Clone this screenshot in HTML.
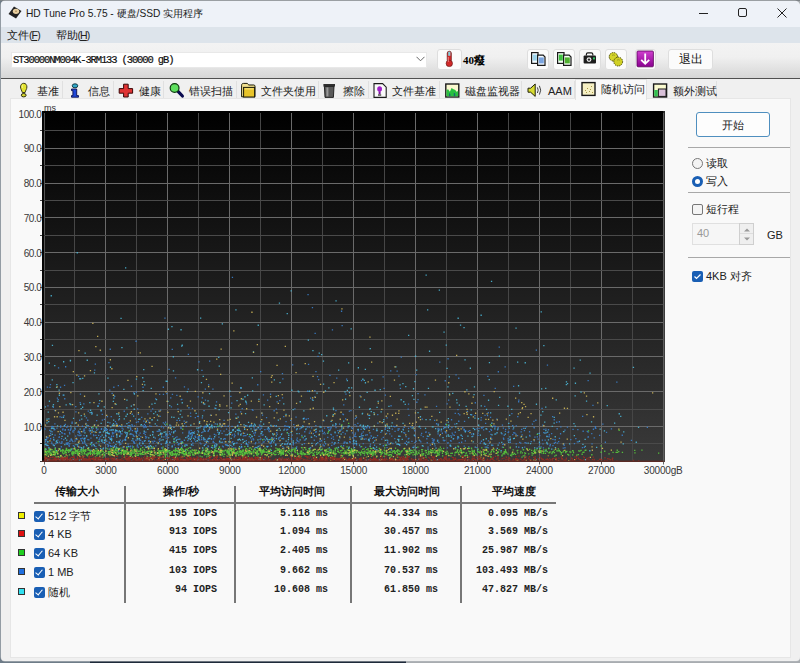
<!DOCTYPE html>
<html><head><meta charset="utf-8">
<style>
*{box-sizing:border-box}
html,body{margin:0;padding:0;width:800px;height:663px;overflow:hidden;background:linear-gradient(90deg,#6e7c88 0,#6e7c88 90px,#1e2a3a 90px,#1e2a3a 406px,#a8acb0 406px)}
body{position:relative;font-family:"Liberation Sans",sans-serif;color:#1a1a1a}
.a{position:absolute}
#win{position:absolute;left:1px;top:1px;width:799px;height:659.5px;background:#f0f0f0;border-radius:4px 5px 4px 4px;overflow:hidden;box-shadow:0 0 0 0.5px #b8bcc0}
#topstrip{position:absolute;left:0;top:0;width:800px;height:1px;background:#7c8286}
#title{position:absolute;left:0;top:0;width:100%;height:26px;background:#eef2f8}
#menu{position:absolute;left:0;top:26px;width:100%;height:16px;background:#dde4eb}
#tool{position:absolute;left:0;top:42px;width:100%;height:35px;background:linear-gradient(#f3f3f3,#f0f0f0 40%,#d6d6d6)}
#tline{position:absolute;left:0;top:77px;width:100%;height:1px;background:#505050}
.menu-t{position:absolute;top:28px;font-size:11px;color:#222}
.tbtn{position:absolute;top:49px;height:20.5px;background:#fbfbfb;border:1px solid #dedede;border-radius:3px}
.tab{position:absolute;top:81px;height:18px;background:#f0f0f0;font-size:11px;color:#333;border-right:1px solid #e0e0e0}
.tab span{position:absolute;top:3px}
#panel{position:absolute;left:10px;top:98px;width:781px;height:560px;background:#f9f9f9;border:1px solid #e6e6e6}
.yl{position:absolute;left:0;width:41.5px;text-align:right;font-size:10px;letter-spacing:-0.4px;color:#383838;line-height:12px}
.xl{position:absolute;top:464.5px;width:60px;text-align:center;font-size:10px;letter-spacing:-0.2px;color:#383838;line-height:12px}
.hdr{position:absolute;top:484px;font-size:11px;font-weight:bold;color:#111;text-align:center;line-height:14px}
.vsep{position:absolute;top:486px;width:2px;height:117px;background:#777}
.val{position:absolute;font-family:"Liberation Mono",monospace;font-weight:bold;font-size:10px;color:#222;text-align:right;white-space:pre;line-height:12px}
.lsq{position:absolute;left:18px;width:7px;height:7px;border:1px solid #333}
.cb{position:absolute;left:34px;width:11px;height:11px;background:#1a5fb4;border-radius:2px}
.cb:after{content:"";position:absolute;left:3px;top:1px;width:3px;height:6px;border:solid #fff;border-width:0 1.3px 1.3px 0;transform:rotate(40deg)}
.lbl{position:absolute;left:48px;font-size:11px;color:#222;line-height:14px}
.rp{position:absolute;font-size:11px;color:#222;line-height:14px}
.hsep{position:absolute;left:688px;width:102px;height:1px;background:#a8a8a8}
</style></head><body>
<div id="topstrip"></div>
<div id="win">
  <div id="title"></div>
  <div id="menu"></div>
  <div id="tool"></div>
  <div id="tline"></div>
</div>
<!-- title bar -->
<svg class="a" style="left:8px;top:6px" width="14" height="13" viewBox="0 0 14 13">
  <path d="M6 0.5 L13.5 5 L8 12.5 L0.5 8 Z" fill="#222"/>
  <ellipse cx="8" cy="5.3" rx="3.2" ry="2.6" fill="#e8cfa0"/>
  <circle cx="8" cy="5.3" r="0.8" fill="#a08050"/>
</svg>
<div class="a" style="left:26px;top:7px;font-size:10.2px;color:#1a1a1a;line-height:14px">HD Tune Pro 5.75 - 硬盘/SSD 实用程序</div>
<div class="a" style="left:699px;top:13px;width:9px;height:1px;background:#222"></div>
<div class="a" style="left:738px;top:8px;width:9px;height:9px;border:1px solid #222;border-radius:2px"></div>
<svg class="a" style="left:777px;top:8px" width="10" height="10" viewBox="0 0 10 10"><path d="M0.5 0.5L9.5 9.5M9.5 0.5L0.5 9.5" stroke="#222" stroke-width="1"/></svg>
<!-- menu -->
<div class="menu-t" style="left:7px">文件<span style="letter-spacing:-0.9px;font-size:10.5px">(<u>F</u>)</span></div>
<div class="menu-t" style="left:55.5px">帮助<span style="letter-spacing:-0.9px;font-size:10.5px">(<u>H</u>)</span></div>
<!-- toolbar -->
<div class="a" style="left:11px;top:52px;width:416px;height:16px;background:#fff;border:1px solid #e8e8e8"></div>
<div class="a" style="left:13px;top:54px;font-family:'Liberation Mono',monospace;font-size:10.5px;letter-spacing:-1.13px;color:#111;line-height:12px;-webkit-text-stroke:0.2px #111">ST30000NM004K-3RM133 (30000 gB)</div>
<svg class="a" style="left:416px;top:56px" width="9" height="6" viewBox="0 0 9 6"><path d="M0.5 0.8L4.5 4.8L8.5 0.8" stroke="#666" fill="none" stroke-width="1"/></svg>
<div class="tbtn" style="left:437px;width:25px"></div>

<div class="a" style="left:463px;top:54px;font-family:'Liberation Serif',serif;font-weight:bold;font-size:11px;color:#000;line-height:12px">40癈</div>
<div class="tbtn" style="left:527px;width:22px"></div>
<div class="tbtn" style="left:553px;width:22px"></div>
<div class="tbtn" style="left:579px;width:22px"></div>
<div class="tbtn" style="left:605px;width:22px"></div>
<div class="tbtn" style="left:635px;width:21px"></div>
<div class="tbtn" style="left:668px;width:45px;height:21px"></div>
<!-- toolbar icons -->
<svg class="a" style="left:0;top:0" width="800" height="78" viewBox="0 0 800 78">
  <defs>
    <linearGradient id="pg" x1="0" y1="0" x2="0" y2="1"><stop offset="0" stop-color="#d040d0"/><stop offset="1" stop-color="#8a0090"/></linearGradient>
  </defs>
  <rect x="531.6" y="52.6" width="6.4" height="10.8" fill="#f4fbff" stroke="#1a1a1a" stroke-width="1.2"/>
  <rect x="532.8" y="54.6" width="4" height="6" fill="#9cd4ec"/>
  <path d="M537.6 55.2h5.6l1.8 1.8v8.4h-7.4z" fill="#f4fbff" stroke="#1a1a1a" stroke-width="1.2"/>
  <rect x="538.8" y="57.4" width="5" height="6" fill="#7aa4e0"/>
  <rect x="557.6" y="52.6" width="6.4" height="10.8" fill="#f4fff4" stroke="#1a1a1a" stroke-width="1.2"/>
  <rect x="558.8" y="54.6" width="4" height="6" fill="#40c040"/>
  <path d="M563.6 55.2h5.6l1.8 1.8v8.4h-7.4z" fill="#f4fff4" stroke="#1a1a1a" stroke-width="1.2"/>
  <rect x="564.8" y="57.4" width="5" height="6" fill="#50b030"/>
  <!-- camera -->
  <rect x="583.6" y="55.4" width="12.4" height="8" rx="1" fill="#1e1e1e"/>
  <path d="M586.4 55.6v-1.4q0-1.4 1.4-1.4h3.6q1.4 0 1.4 1.4v1.4" stroke="#1e1e1e" stroke-width="1.2" fill="none"/>
  <circle cx="589" cy="59.6" r="2.4" fill="#f0f0f0"/><circle cx="589" cy="59.6" r="1.2" fill="#303030"/>
  <rect x="593" y="57.4" width="2" height="2" fill="#30c060"/>
  <!-- gold -->
  <circle cx="613.4" cy="56.8" r="4.2" fill="#d4d428" stroke="#4a4a08" stroke-width="1" stroke-dasharray="1.4 0.8"/>
  <circle cx="618.2" cy="61.6" r="4.4" fill="#d0d024" stroke="#4a4a08" stroke-width="1" stroke-dasharray="1.4 0.8"/>
  <path d="M612 55.4q1.4-1 2.8 0M617 60.2q1.4-1 2.8 0" stroke="#8a8a20" stroke-width="0.8" fill="none"/>
  <!-- purple -->
  <rect x="637" y="51" width="16.4" height="15.8" rx="1" fill="url(#pg)" stroke="#5a005a" stroke-width="0.8"/>
  <path d="M645.2 53.6v10M641.2 59.8l4 4l4-4" stroke="#fff" stroke-width="1.8" fill="none"/>
  <!-- thermometer -->
  <rect x="447.2" y="51.2" width="4.2" height="11" rx="2.1" fill="#d02828" stroke="#5a1010" stroke-width="0.6"/>
  <rect x="448.2" y="51.8" width="2.2" height="4" fill="#88d0dc"/>
  <circle cx="449.3" cy="63.4" r="3.2" fill="#d02828" stroke="#5a1010" stroke-width="0.6"/>
  <rect x="447.8" y="57" width="1" height="5" fill="#f08080"/>
</svg>
<div class="a" style="left:668px;top:52px;width:45px;text-align:center;font-size:11.5px;color:#111;line-height:14px">退出</div>

<!-- tabs -->
<div class="tab" style="left:12px;width:51px"></div>
<div class="tab" style="left:63px;width:51px"></div>
<div class="tab" style="left:114px;width:50px"></div>
<div class="tab" style="left:164px;width:73px"></div>
<div class="tab" style="left:237px;width:82px"></div>
<div class="tab" style="left:319px;width:50px"></div>
<div class="tab" style="left:369px;width:71px"></div>
<div class="tab" style="left:440px;width:82px"></div>
<div class="tab" style="left:522px;width:53px"></div>
<div class="tab" style="left:647px;width:70px"></div>
<div id="panel"></div>
<div class="a" style="left:575px;top:79px;width:72px;height:21px;background:#f9f9f9;border:1px solid #e2e2e2;border-bottom:none"></div>
<div class="rp" style="left:37px;top:84px">基准</div>
<div class="rp" style="left:88px;top:84px">信息</div>
<div class="rp" style="left:139px;top:84px">健康</div>
<div class="rp" style="left:189px;top:84px">错误扫描</div>
<div class="rp" style="left:261px;top:84px">文件夹使用</div>
<div class="rp" style="left:343px;top:84px">擦除</div>
<div class="rp" style="left:392px;top:84px">文件基准</div>
<div class="rp" style="left:465px;top:84px">磁盘监视器</div>
<div class="rp" style="left:548px;top:84px">AAM</div>
<div class="rp" style="left:601px;top:82px">随机访问</div>
<div class="rp" style="left:673px;top:84px">额外测试</div>
<!-- tab icons -->
<svg class="a" style="left:0;top:0" width="800" height="100" viewBox="0 0 800 100">
  <!-- bulb -->
  <path d="M23.7 83.3c2 0 3.2 1.6 3.2 3.6c0 2.2-1.4 3.6-1.8 5.6h-2.8c-0.4-2-1.8-3.4-1.8-5.6c0-2 1.2-3.6 3.2-3.6z" fill="#e4e430" stroke="#3a3a1a" stroke-width="1"/>
  <path d="M23 85c-0.8 0.6-1 1.8-0.6 3" stroke="#f8f8a0" stroke-width="1" fill="none"/>
  <ellipse cx="23.7" cy="95.2" rx="2.4" ry="1.7" fill="#d8d830" stroke="#2a2a10" stroke-width="1"/>
  <!-- info i -->
  <ellipse cx="75" cy="85.8" rx="2.8" ry="2" fill="#30a8c8" stroke="#10303a" stroke-width="0.9"/>
  <path d="M71.5 89h5.2v6.6h1.8v1.6h-7v-1.6h1.4v-5h-1.4z" fill="#2048d8" stroke="#0a1050" stroke-width="0.9"/>
  <!-- red cross -->
  <path d="M123.6 84.2h4.6v4.4h4.4v4.6h-4.4v3.8h-4.6v-3.8h-4.4v-4.6h4.4z" fill="#e03434" stroke="#3a0808" stroke-width="1"/>
  <!-- magnifier -->
  <path d="M177.8 91.2l4.6 4.8" stroke="#0a0a50" stroke-width="3.2" stroke-linecap="round"/>
  <circle cx="174.6" cy="88" r="4.4" fill="#5ee05e" stroke="#0e3a0e" stroke-width="1.2"/>
  <!-- folder -->
  <path d="M241.6 85.2c0-1.2 0.8-1.8 2-1.8h3.6l1.6 1.6h5c0.8 0 1.2 0.5 1.2 1.2v10.6h-13.4z" fill="#f0e090" stroke="#1a1a08" stroke-width="1"/>
  <rect x="243.6" y="87.4" width="11" height="9.6" fill="#e8c42a" stroke="#1a1a08" stroke-width="1"/>
  <rect x="244.6" y="88.4" width="9" height="1" fill="#f8e890"/>
  <!-- trash -->
  <path d="M323.4 84h11.6v2.6h-11.6z" fill="#303030"/>
  <path d="M324.4 86.4h9.6l-0.6 11h-8.4z" fill="#5a5a5a" stroke="#1a1a1a" stroke-width="0.9"/>
  <rect x="326.4" y="87.4" width="2" height="9" fill="#9a9a9a"/>
  <!-- file bench -->
  <path d="M374 83.6h8.6l3.6 3.6v10.2h-12.2z" fill="#fafafa" stroke="#1a1a1a" stroke-width="1.1"/>
  <ellipse cx="379.6" cy="89" rx="2.4" ry="2.8" fill="#a020c8"/>
  <rect x="378.6" y="91.4" width="2" height="2.6" fill="#7a10a0"/>
  <rect x="378" y="94.4" width="3.2" height="1.2" fill="#222"/>
  <!-- disk monitor -->
  <rect x="445.8" y="84" width="13" height="13" fill="#fbf8d0" stroke="#1a1a1a" stroke-width="1.4"/>
  <path d="M446.5 96.3v-6.2l1.6-0.8 1.8 2.4 1.6-3.6 2 1.2 1.8 0.8 1.2 1.6 1.7-0.6v5.2z" fill="#28c040"/>
  <path d="M449 96.3v-3.2l1.4 1v2.2zM453.8 96.3v-3.6l1.4 0.8v2.8z" fill="#1a6a70"/>
  <!-- speaker -->
  <path d="M528 88.2h2.6l4.6-4.2v12.4l-4.6-4.2h-2.6z" fill="#d8dc30" stroke="#20200a" stroke-width="1"/>
  <path d="M537.4 87.4q1.6 2.8 0 5.6M539.4 85.8q2.6 4.4 0 8.8" stroke="#303030" stroke-width="0.9" fill="none"/>
  <!-- random access -->
  <rect x="582" y="82.6" width="13" height="12.8" fill="#f6f0c4" stroke="#1a1a1a" stroke-width="1.4"/>
  <g fill="#a89848"><rect x="585" y="90" width="1" height="1"/><rect x="587" y="88" width="1" height="1"/><rect x="589" y="91" width="1" height="1"/><rect x="591" y="86" width="1" height="1"/><rect x="586" y="92" width="1" height="1"/><rect x="590" y="89" width="1" height="1"/><rect x="592" y="92" width="1" height="1"/></g>
  <!-- extra tests -->
  <rect x="653.6" y="84" width="13" height="13" fill="#fafad0" stroke="#1a1a1a" stroke-width="1.4"/>
  <rect x="654.3" y="90" width="3.5" height="6.3" fill="#30c050"/>
  <rect x="658.4" y="89" width="7.6" height="7.4" fill="#d8c0d8" stroke="#1a1a1a" stroke-width="1"/>
</svg>
<!-- chart -->
<div class="a" style="left:44px;top:103px;font-size:9px;color:#333;line-height:10px">ms</div>
<div class="yl" style="top:421.5px">10.0</div>
<div class="yl" style="top:386.8px">20.0</div>
<div class="yl" style="top:352.0px">30.0</div>
<div class="yl" style="top:317.2px">40.0</div>
<div class="yl" style="top:282.4px">50.0</div>
<div class="yl" style="top:247.7px">60.0</div>
<div class="yl" style="top:212.9px">70.0</div>
<div class="yl" style="top:178.1px">80.0</div>
<div class="yl" style="top:143.4px">90.0</div>
<div class="yl" style="top:108.6px">100.0</div>
<svg class="a" style="left:0;top:0" width="800" height="663">
  <defs><linearGradient id="bg" x1="0" y1="0" x2="0" y2="1"><stop offset="0" stop-color="#000"/><stop offset="1" stop-color="#3a3a3a"/></linearGradient></defs>
  <rect x="42" y="111" width="623" height="351" fill="url(#bg)"/>
<rect x="44" y="113" width="1" height="348.30" fill="#6a6a6a"/>
<rect x="74" y="113" width="1" height="348.30" fill="#464646"/>
<rect x="105" y="113" width="1" height="348.30" fill="#6a6a6a"/>
<rect x="136" y="113" width="1" height="348.30" fill="#464646"/>
<rect x="167" y="113" width="1" height="348.30" fill="#6a6a6a"/>
<rect x="198" y="113" width="1" height="348.30" fill="#464646"/>
<rect x="229" y="113" width="1" height="348.30" fill="#6a6a6a"/>
<rect x="260" y="113" width="1" height="348.30" fill="#464646"/>
<rect x="291" y="113" width="1" height="348.30" fill="#6a6a6a"/>
<rect x="322" y="113" width="1" height="348.30" fill="#464646"/>
<rect x="353" y="113" width="1" height="348.30" fill="#6a6a6a"/>
<rect x="384" y="113" width="1" height="348.30" fill="#464646"/>
<rect x="415" y="113" width="1" height="348.30" fill="#6a6a6a"/>
<rect x="446" y="113" width="1" height="348.30" fill="#464646"/>
<rect x="477" y="113" width="1" height="348.30" fill="#6a6a6a"/>
<rect x="508" y="113" width="1" height="348.30" fill="#464646"/>
<rect x="539" y="113" width="1" height="348.30" fill="#6a6a6a"/>
<rect x="570" y="113" width="1" height="348.30" fill="#464646"/>
<rect x="601" y="113" width="1" height="348.30" fill="#6a6a6a"/>
<rect x="632" y="113" width="1" height="348.30" fill="#464646"/>
<rect x="663" y="113" width="1" height="348.30" fill="#6a6a6a"/>
<rect x="44.00" y="461" width="619.20" height="1" fill="#6a6a6a"/>
<rect x="40" y="461" width="3" height="1" fill="#444"/>
<rect x="44.00" y="443" width="619.20" height="1" fill="#4a4a4a"/>
<rect x="40" y="443" width="3" height="1" fill="#444"/>
<rect x="44.00" y="426" width="619.20" height="1" fill="#6a6a6a"/>
<rect x="40" y="426" width="3" height="1" fill="#444"/>
<rect x="44.00" y="409" width="619.20" height="1" fill="#4a4a4a"/>
<rect x="40" y="409" width="3" height="1" fill="#444"/>
<rect x="44.00" y="391" width="619.20" height="1" fill="#6a6a6a"/>
<rect x="40" y="391" width="3" height="1" fill="#444"/>
<rect x="44.00" y="374" width="619.20" height="1" fill="#4a4a4a"/>
<rect x="40" y="374" width="3" height="1" fill="#444"/>
<rect x="44.00" y="356" width="619.20" height="1" fill="#6a6a6a"/>
<rect x="40" y="356" width="3" height="1" fill="#444"/>
<rect x="44.00" y="339" width="619.20" height="1" fill="#4a4a4a"/>
<rect x="40" y="339" width="3" height="1" fill="#444"/>
<rect x="44.00" y="322" width="619.20" height="1" fill="#6a6a6a"/>
<rect x="40" y="322" width="3" height="1" fill="#444"/>
<rect x="44.00" y="304" width="619.20" height="1" fill="#4a4a4a"/>
<rect x="40" y="304" width="3" height="1" fill="#444"/>
<rect x="44.00" y="287" width="619.20" height="1" fill="#6a6a6a"/>
<rect x="40" y="287" width="3" height="1" fill="#444"/>
<rect x="44.00" y="270" width="619.20" height="1" fill="#4a4a4a"/>
<rect x="40" y="270" width="3" height="1" fill="#444"/>
<rect x="44.00" y="252" width="619.20" height="1" fill="#6a6a6a"/>
<rect x="40" y="252" width="3" height="1" fill="#444"/>
<rect x="44.00" y="235" width="619.20" height="1" fill="#4a4a4a"/>
<rect x="40" y="235" width="3" height="1" fill="#444"/>
<rect x="44.00" y="217" width="619.20" height="1" fill="#6a6a6a"/>
<rect x="40" y="217" width="3" height="1" fill="#444"/>
<rect x="44.00" y="200" width="619.20" height="1" fill="#4a4a4a"/>
<rect x="40" y="200" width="3" height="1" fill="#444"/>
<rect x="44.00" y="183" width="619.20" height="1" fill="#6a6a6a"/>
<rect x="40" y="183" width="3" height="1" fill="#444"/>
<rect x="44.00" y="165" width="619.20" height="1" fill="#4a4a4a"/>
<rect x="40" y="165" width="3" height="1" fill="#444"/>
<rect x="44.00" y="148" width="619.20" height="1" fill="#6a6a6a"/>
<rect x="40" y="148" width="3" height="1" fill="#444"/>
<rect x="44.00" y="130" width="619.20" height="1" fill="#4a4a4a"/>
<rect x="40" y="130" width="3" height="1" fill="#444"/>
<path fill="#3a80cc" fill-opacity="0.9" d="M243.9 432.7h1.3v1.3h-1.3zM88.2 439.2h1.3v1.3h-1.3zM79.3 446.6h1.3v1.3h-1.3zM311.9 445.4h1.3v1.3h-1.3zM120.0 433.3h1.3v1.3h-1.3zM72.2 440.9h1.3v1.3h-1.3zM132.7 440.5h1.3v1.3h-1.3zM548.7 434.3h1.3v1.3h-1.3zM439.0 435.1h1.3v1.3h-1.3zM82.2 442.8h1.3v1.3h-1.3zM464.7 440.3h1.3v1.3h-1.3zM405.9 440.7h1.3v1.3h-1.3zM194.5 435.6h1.3v1.3h-1.3zM116.5 430.3h1.3v1.3h-1.3zM137.5 446.6h1.3v1.3h-1.3zM237.6 434.0h1.3v1.3h-1.3zM402.4 428.5h1.3v1.3h-1.3zM454.6 431.6h1.3v1.3h-1.3zM552.3 438.7h1.3v1.3h-1.3zM457.4 437.0h1.3v1.3h-1.3zM147.4 446.1h1.3v1.3h-1.3zM519.0 441.8h1.3v1.3h-1.3zM93.2 435.0h1.3v1.3h-1.3zM300.5 427.5h1.3v1.3h-1.3zM152.5 442.2h1.3v1.3h-1.3zM343.6 441.5h1.3v1.3h-1.3zM45.9 439.1h1.3v1.3h-1.3zM470.9 433.5h1.3v1.3h-1.3zM462.1 427.1h1.3v1.3h-1.3zM537.4 438.4h1.3v1.3h-1.3zM107.5 446.0h1.3v1.3h-1.3zM85.1 443.8h1.3v1.3h-1.3zM253.9 447.4h1.3v1.3h-1.3zM137.0 439.2h1.3v1.3h-1.3zM59.1 433.6h1.3v1.3h-1.3zM135.3 439.6h1.3v1.3h-1.3zM268.8 428.3h1.3v1.3h-1.3zM342.9 445.1h1.3v1.3h-1.3zM255.5 428.7h1.3v1.3h-1.3zM143.3 425.9h1.3v1.3h-1.3zM370.4 435.2h1.3v1.3h-1.3zM60.1 425.3h1.3v1.3h-1.3zM205.0 443.7h1.3v1.3h-1.3zM525.7 442.4h1.3v1.3h-1.3zM183.7 439.4h1.3v1.3h-1.3zM61.3 441.1h1.3v1.3h-1.3zM203.8 425.8h1.3v1.3h-1.3zM269.1 442.3h1.3v1.3h-1.3zM165.2 433.3h1.3v1.3h-1.3zM340.2 429.4h1.3v1.3h-1.3zM95.8 426.9h1.3v1.3h-1.3zM339.3 429.6h1.3v1.3h-1.3zM249.2 425.5h1.3v1.3h-1.3zM288.5 426.0h1.3v1.3h-1.3zM492.1 444.6h1.3v1.3h-1.3zM136.9 429.2h1.3v1.3h-1.3zM133.9 425.3h1.3v1.3h-1.3zM450.3 435.0h1.3v1.3h-1.3zM124.5 425.5h1.3v1.3h-1.3zM445.6 426.3h1.3v1.3h-1.3zM554.9 441.7h1.3v1.3h-1.3zM224.8 434.2h1.3v1.3h-1.3zM203.9 444.5h1.3v1.3h-1.3zM327.0 427.0h1.3v1.3h-1.3zM354.0 435.6h1.3v1.3h-1.3zM54.9 443.3h1.3v1.3h-1.3zM45.8 443.5h1.3v1.3h-1.3zM336.5 434.9h1.3v1.3h-1.3zM245.2 434.9h1.3v1.3h-1.3zM529.0 434.8h1.3v1.3h-1.3zM197.2 430.0h1.3v1.3h-1.3zM357.7 430.3h1.3v1.3h-1.3zM422.6 435.9h1.3v1.3h-1.3zM472.3 435.4h1.3v1.3h-1.3zM563.5 444.7h1.3v1.3h-1.3zM317.1 442.0h1.3v1.3h-1.3zM88.6 429.7h1.3v1.3h-1.3zM131.9 425.6h1.3v1.3h-1.3zM179.3 438.4h1.3v1.3h-1.3zM558.8 437.7h1.3v1.3h-1.3zM362.6 443.0h1.3v1.3h-1.3zM240.6 447.0h1.3v1.3h-1.3zM386.4 447.0h1.3v1.3h-1.3zM248.6 435.9h1.3v1.3h-1.3zM83.2 429.6h1.3v1.3h-1.3zM207.8 429.8h1.3v1.3h-1.3zM210.8 437.9h1.3v1.3h-1.3zM203.5 426.7h1.3v1.3h-1.3zM98.7 431.9h1.3v1.3h-1.3zM306.7 426.2h1.3v1.3h-1.3zM95.2 445.9h1.3v1.3h-1.3zM253.4 426.5h1.3v1.3h-1.3zM209.2 435.5h1.3v1.3h-1.3zM191.0 443.8h1.3v1.3h-1.3zM74.5 440.4h1.3v1.3h-1.3zM232.2 440.9h1.3v1.3h-1.3zM353.0 439.6h1.3v1.3h-1.3zM54.6 447.1h1.3v1.3h-1.3zM160.7 426.3h1.3v1.3h-1.3zM109.2 437.7h1.3v1.3h-1.3zM286.7 431.9h1.3v1.3h-1.3zM437.1 439.6h1.3v1.3h-1.3zM77.0 445.8h1.3v1.3h-1.3zM502.1 443.7h1.3v1.3h-1.3zM95.7 427.8h1.3v1.3h-1.3zM458.6 442.0h1.3v1.3h-1.3zM224.8 443.9h1.3v1.3h-1.3zM319.4 425.7h1.3v1.3h-1.3zM235.0 447.4h1.3v1.3h-1.3zM279.7 436.1h1.3v1.3h-1.3zM167.8 447.3h1.3v1.3h-1.3zM206.9 438.4h1.3v1.3h-1.3zM69.2 440.6h1.3v1.3h-1.3zM187.5 435.5h1.3v1.3h-1.3zM284.5 425.2h1.3v1.3h-1.3zM135.9 432.9h1.3v1.3h-1.3zM70.5 427.3h1.3v1.3h-1.3zM546.3 435.6h1.3v1.3h-1.3zM185.7 444.4h1.3v1.3h-1.3zM266.7 428.5h1.3v1.3h-1.3zM389.2 433.3h1.3v1.3h-1.3zM464.8 447.4h1.3v1.3h-1.3zM354.8 432.5h1.3v1.3h-1.3zM84.2 441.7h1.3v1.3h-1.3zM89.4 431.0h1.3v1.3h-1.3zM170.4 425.4h1.3v1.3h-1.3zM349.2 436.6h1.3v1.3h-1.3zM91.3 441.7h1.3v1.3h-1.3zM503.6 434.6h1.3v1.3h-1.3zM51.1 441.4h1.3v1.3h-1.3zM461.7 435.8h1.3v1.3h-1.3zM331.1 444.8h1.3v1.3h-1.3zM54.2 428.9h1.3v1.3h-1.3zM209.7 426.1h1.3v1.3h-1.3zM173.8 444.2h1.3v1.3h-1.3zM125.5 435.9h1.3v1.3h-1.3zM186.6 436.5h1.3v1.3h-1.3zM58.7 436.3h1.3v1.3h-1.3zM322.5 444.3h1.3v1.3h-1.3zM256.3 428.4h1.3v1.3h-1.3zM44.4 428.5h1.3v1.3h-1.3zM117.7 431.3h1.3v1.3h-1.3zM273.8 424.9h1.3v1.3h-1.3zM408.2 437.8h1.3v1.3h-1.3zM213.7 445.1h1.3v1.3h-1.3zM560.2 426.3h1.3v1.3h-1.3zM197.7 435.9h1.3v1.3h-1.3zM160.9 425.8h1.3v1.3h-1.3zM488.9 430.9h1.3v1.3h-1.3zM322.5 432.9h1.3v1.3h-1.3zM220.6 426.5h1.3v1.3h-1.3zM122.2 439.7h1.3v1.3h-1.3zM227.7 425.4h1.3v1.3h-1.3zM204.4 440.6h1.3v1.3h-1.3zM388.4 443.7h1.3v1.3h-1.3zM143.4 427.0h1.3v1.3h-1.3zM351.1 427.0h1.3v1.3h-1.3zM129.8 445.4h1.3v1.3h-1.3zM255.1 442.0h1.3v1.3h-1.3zM203.3 427.4h1.3v1.3h-1.3zM507.5 438.1h1.3v1.3h-1.3zM367.9 439.8h1.3v1.3h-1.3zM81.8 425.6h1.3v1.3h-1.3zM121.3 433.2h1.3v1.3h-1.3zM577.6 441.3h1.3v1.3h-1.3zM197.2 437.4h1.3v1.3h-1.3zM583.8 446.7h1.3v1.3h-1.3zM336.4 447.4h1.3v1.3h-1.3zM110.9 435.6h1.3v1.3h-1.3zM516.9 435.0h1.3v1.3h-1.3zM67.8 442.2h1.3v1.3h-1.3zM231.5 441.7h1.3v1.3h-1.3zM112.8 435.6h1.3v1.3h-1.3zM404.3 442.4h1.3v1.3h-1.3zM415.5 440.6h1.3v1.3h-1.3zM337.7 441.9h1.3v1.3h-1.3zM233.7 436.2h1.3v1.3h-1.3zM461.0 441.6h1.3v1.3h-1.3zM183.8 439.8h1.3v1.3h-1.3zM303.8 443.0h1.3v1.3h-1.3zM356.0 425.5h1.3v1.3h-1.3zM236.4 442.2h1.3v1.3h-1.3zM180.5 440.8h1.3v1.3h-1.3zM159.3 438.0h1.3v1.3h-1.3zM134.0 442.6h1.3v1.3h-1.3zM75.4 438.5h1.3v1.3h-1.3zM158.2 430.6h1.3v1.3h-1.3zM63.1 438.9h1.3v1.3h-1.3zM274.9 443.6h1.3v1.3h-1.3zM45.1 439.5h1.3v1.3h-1.3zM264.2 428.9h1.3v1.3h-1.3zM311.1 436.7h1.3v1.3h-1.3zM162.9 427.2h1.3v1.3h-1.3zM62.1 429.1h1.3v1.3h-1.3zM518.1 446.6h1.3v1.3h-1.3zM82.1 441.6h1.3v1.3h-1.3zM253.3 425.8h1.3v1.3h-1.3zM425.4 431.2h1.3v1.3h-1.3zM239.3 447.4h1.3v1.3h-1.3zM58.4 436.7h1.3v1.3h-1.3zM282.7 437.7h1.3v1.3h-1.3zM156.6 430.7h1.3v1.3h-1.3zM419.4 440.2h1.3v1.3h-1.3zM267.4 445.7h1.3v1.3h-1.3zM165.5 441.8h1.3v1.3h-1.3zM83.4 434.9h1.3v1.3h-1.3zM207.4 445.3h1.3v1.3h-1.3zM352.0 437.3h1.3v1.3h-1.3zM188.4 433.4h1.3v1.3h-1.3zM118.4 440.8h1.3v1.3h-1.3zM394.4 430.8h1.3v1.3h-1.3zM166.7 441.9h1.3v1.3h-1.3zM138.3 434.4h1.3v1.3h-1.3zM245.4 425.0h1.3v1.3h-1.3zM357.5 429.2h1.3v1.3h-1.3zM106.7 428.9h1.3v1.3h-1.3zM68.3 444.7h1.3v1.3h-1.3zM160.7 434.3h1.3v1.3h-1.3zM204.3 426.1h1.3v1.3h-1.3zM108.8 433.4h1.3v1.3h-1.3zM178.1 444.2h1.3v1.3h-1.3zM169.7 433.9h1.3v1.3h-1.3zM446.8 447.2h1.3v1.3h-1.3zM246.0 443.3h1.3v1.3h-1.3zM236.7 429.5h1.3v1.3h-1.3zM382.7 445.1h1.3v1.3h-1.3zM288.1 433.0h1.3v1.3h-1.3zM99.8 431.7h1.3v1.3h-1.3zM297.1 440.5h1.3v1.3h-1.3zM394.1 438.0h1.3v1.3h-1.3zM268.6 431.0h1.3v1.3h-1.3zM169.5 427.1h1.3v1.3h-1.3zM328.7 447.1h1.3v1.3h-1.3zM384.9 426.9h1.3v1.3h-1.3zM98.5 439.1h1.3v1.3h-1.3zM355.7 441.0h1.3v1.3h-1.3zM110.7 429.2h1.3v1.3h-1.3zM121.8 425.4h1.3v1.3h-1.3zM342.3 426.5h1.3v1.3h-1.3zM142.6 442.4h1.3v1.3h-1.3zM556.8 442.5h1.3v1.3h-1.3zM290.9 438.8h1.3v1.3h-1.3zM119.5 431.1h1.3v1.3h-1.3zM599.0 434.7h1.3v1.3h-1.3zM512.4 428.5h1.3v1.3h-1.3zM116.2 435.0h1.3v1.3h-1.3zM431.6 437.9h1.3v1.3h-1.3zM404.1 432.5h1.3v1.3h-1.3zM320.0 446.9h1.3v1.3h-1.3zM426.6 442.1h1.3v1.3h-1.3zM327.1 436.7h1.3v1.3h-1.3zM109.7 437.7h1.3v1.3h-1.3zM100.1 435.9h1.3v1.3h-1.3zM68.6 445.6h1.3v1.3h-1.3zM360.1 436.0h1.3v1.3h-1.3zM127.7 424.9h1.3v1.3h-1.3zM163.3 436.3h1.3v1.3h-1.3zM145.6 426.4h1.3v1.3h-1.3zM83.9 430.3h1.3v1.3h-1.3zM141.7 441.2h1.3v1.3h-1.3zM548.4 436.1h1.3v1.3h-1.3zM206.1 440.2h1.3v1.3h-1.3zM66.2 443.8h1.3v1.3h-1.3zM529.3 435.4h1.3v1.3h-1.3zM437.4 427.7h1.3v1.3h-1.3zM387.1 427.5h1.3v1.3h-1.3zM108.1 433.2h1.3v1.3h-1.3zM287.5 441.5h1.3v1.3h-1.3zM266.4 437.4h1.3v1.3h-1.3zM152.8 446.3h1.3v1.3h-1.3zM551.0 433.0h1.3v1.3h-1.3zM454.3 447.4h1.3v1.3h-1.3zM64.3 433.5h1.3v1.3h-1.3zM311.0 427.2h1.3v1.3h-1.3zM125.1 432.7h1.3v1.3h-1.3zM57.2 439.4h1.3v1.3h-1.3zM109.2 442.4h1.3v1.3h-1.3zM404.7 442.8h1.3v1.3h-1.3zM429.7 444.4h1.3v1.3h-1.3zM135.8 433.0h1.3v1.3h-1.3zM292.2 447.2h1.3v1.3h-1.3zM442.7 439.5h1.3v1.3h-1.3zM443.1 426.3h1.3v1.3h-1.3zM497.5 427.0h1.3v1.3h-1.3zM70.6 438.3h1.3v1.3h-1.3zM190.5 429.8h1.3v1.3h-1.3zM51.0 426.2h1.3v1.3h-1.3zM131.4 433.7h1.3v1.3h-1.3zM357.3 429.1h1.3v1.3h-1.3zM151.5 440.7h1.3v1.3h-1.3zM73.4 429.7h1.3v1.3h-1.3zM486.3 428.4h1.3v1.3h-1.3zM504.8 430.7h1.3v1.3h-1.3zM323.5 445.1h1.3v1.3h-1.3zM187.2 439.9h1.3v1.3h-1.3zM208.0 437.6h1.3v1.3h-1.3zM207.6 425.6h1.3v1.3h-1.3zM177.7 447.1h1.3v1.3h-1.3zM204.6 430.6h1.3v1.3h-1.3zM245.7 440.0h1.3v1.3h-1.3zM191.4 433.2h1.3v1.3h-1.3zM233.9 433.4h1.3v1.3h-1.3zM91.5 444.2h1.3v1.3h-1.3zM60.0 426.4h1.3v1.3h-1.3zM256.9 446.8h1.3v1.3h-1.3zM69.1 433.1h1.3v1.3h-1.3zM84.1 439.2h1.3v1.3h-1.3zM595.2 427.8h1.3v1.3h-1.3zM109.7 444.9h1.3v1.3h-1.3zM64.7 429.1h1.3v1.3h-1.3zM434.4 445.2h1.3v1.3h-1.3zM103.9 442.8h1.3v1.3h-1.3zM241.0 447.0h1.3v1.3h-1.3zM202.3 431.3h1.3v1.3h-1.3zM271.2 425.7h1.3v1.3h-1.3zM426.2 438.1h1.3v1.3h-1.3zM313.6 439.6h1.3v1.3h-1.3zM479.7 442.5h1.3v1.3h-1.3zM577.2 428.9h1.3v1.3h-1.3zM148.8 442.9h1.3v1.3h-1.3zM46.1 436.3h1.3v1.3h-1.3zM536.7 436.3h1.3v1.3h-1.3zM258.3 441.5h1.3v1.3h-1.3zM176.3 436.2h1.3v1.3h-1.3zM111.4 445.6h1.3v1.3h-1.3zM263.5 438.5h1.3v1.3h-1.3zM594.7 427.4h1.3v1.3h-1.3zM58.9 441.5h1.3v1.3h-1.3zM188.0 435.4h1.3v1.3h-1.3zM443.5 440.1h1.3v1.3h-1.3zM139.5 432.5h1.3v1.3h-1.3zM502.8 437.5h1.3v1.3h-1.3zM121.4 427.4h1.3v1.3h-1.3zM190.7 440.6h1.3v1.3h-1.3zM139.1 441.8h1.3v1.3h-1.3zM245.6 443.8h1.3v1.3h-1.3zM246.5 425.4h1.3v1.3h-1.3zM494.6 425.7h1.3v1.3h-1.3zM106.3 425.2h1.3v1.3h-1.3zM312.7 433.0h1.3v1.3h-1.3zM109.5 438.7h1.3v1.3h-1.3zM64.4 429.6h1.3v1.3h-1.3zM472.7 433.1h1.3v1.3h-1.3zM330.2 433.8h1.3v1.3h-1.3zM293.9 426.9h1.3v1.3h-1.3zM309.6 430.5h1.3v1.3h-1.3zM304.1 431.1h1.3v1.3h-1.3zM324.4 433.2h1.3v1.3h-1.3zM103.9 429.8h1.3v1.3h-1.3zM198.2 437.1h1.3v1.3h-1.3zM428.2 432.2h1.3v1.3h-1.3zM284.0 425.4h1.3v1.3h-1.3zM67.0 443.8h1.3v1.3h-1.3zM364.9 434.5h1.3v1.3h-1.3zM360.5 428.7h1.3v1.3h-1.3zM366.4 426.0h1.3v1.3h-1.3zM173.4 438.6h1.3v1.3h-1.3zM515.6 425.2h1.3v1.3h-1.3zM263.5 441.2h1.3v1.3h-1.3zM290.8 438.0h1.3v1.3h-1.3zM303.8 439.5h1.3v1.3h-1.3zM207.5 430.7h1.3v1.3h-1.3zM178.9 438.6h1.3v1.3h-1.3zM174.6 429.9h1.3v1.3h-1.3zM333.9 442.3h1.3v1.3h-1.3zM225.6 444.6h1.3v1.3h-1.3zM570.1 438.9h1.3v1.3h-1.3zM200.3 443.2h1.3v1.3h-1.3zM45.0 441.1h1.3v1.3h-1.3zM195.0 436.6h1.3v1.3h-1.3zM308.7 432.5h1.3v1.3h-1.3zM572.4 428.7h1.3v1.3h-1.3zM130.3 433.1h1.3v1.3h-1.3zM52.6 425.9h1.3v1.3h-1.3zM449.5 445.1h1.3v1.3h-1.3zM131.7 429.9h1.3v1.3h-1.3zM257.9 427.0h1.3v1.3h-1.3zM533.6 427.3h1.3v1.3h-1.3zM165.6 435.4h1.3v1.3h-1.3zM502.7 427.5h1.3v1.3h-1.3zM387.0 442.1h1.3v1.3h-1.3zM129.6 446.1h1.3v1.3h-1.3zM332.6 436.3h1.3v1.3h-1.3zM351.8 427.9h1.3v1.3h-1.3zM47.4 436.9h1.3v1.3h-1.3zM391.7 428.4h1.3v1.3h-1.3zM275.5 425.7h1.3v1.3h-1.3zM90.0 433.1h1.3v1.3h-1.3zM61.0 432.0h1.3v1.3h-1.3zM64.3 433.3h1.3v1.3h-1.3zM253.0 439.2h1.3v1.3h-1.3zM337.2 430.0h1.3v1.3h-1.3zM173.8 437.9h1.3v1.3h-1.3zM224.7 438.3h1.3v1.3h-1.3zM355.3 436.0h1.3v1.3h-1.3zM533.7 440.3h1.3v1.3h-1.3zM228.6 433.1h1.3v1.3h-1.3zM528.9 431.1h1.3v1.3h-1.3zM74.1 447.3h1.3v1.3h-1.3zM161.0 433.7h1.3v1.3h-1.3zM425.2 431.7h1.3v1.3h-1.3zM174.9 437.1h1.3v1.3h-1.3zM515.6 443.3h1.3v1.3h-1.3zM66.2 426.8h1.3v1.3h-1.3zM449.4 428.8h1.3v1.3h-1.3zM203.1 437.9h1.3v1.3h-1.3zM240.6 432.9h1.3v1.3h-1.3zM621.6 434.6h1.3v1.3h-1.3zM67.7 429.1h1.3v1.3h-1.3zM319.8 438.7h1.3v1.3h-1.3zM298.7 432.9h1.3v1.3h-1.3zM174.8 447.1h1.3v1.3h-1.3zM46.3 444.7h1.3v1.3h-1.3zM581.8 447.0h1.3v1.3h-1.3zM488.8 430.9h1.3v1.3h-1.3zM159.4 429.9h1.3v1.3h-1.3zM495.2 433.2h1.3v1.3h-1.3zM482.5 426.4h1.3v1.3h-1.3zM487.4 447.1h1.3v1.3h-1.3zM92.7 431.0h1.3v1.3h-1.3zM146.1 436.4h1.3v1.3h-1.3zM80.4 434.4h1.3v1.3h-1.3zM315.0 444.2h1.3v1.3h-1.3zM537.1 432.9h1.3v1.3h-1.3zM433.3 438.7h1.3v1.3h-1.3zM224.4 425.4h1.3v1.3h-1.3zM248.9 425.3h1.3v1.3h-1.3zM234.4 427.4h1.3v1.3h-1.3zM276.6 433.8h1.3v1.3h-1.3zM218.8 441.5h1.3v1.3h-1.3zM305.0 429.0h1.3v1.3h-1.3zM592.8 428.6h1.3v1.3h-1.3zM397.5 428.2h1.3v1.3h-1.3zM96.0 429.4h1.3v1.3h-1.3zM167.5 426.4h1.3v1.3h-1.3zM188.3 432.1h1.3v1.3h-1.3zM331.5 441.7h1.3v1.3h-1.3zM328.0 429.2h1.3v1.3h-1.3zM521.5 434.3h1.3v1.3h-1.3zM366.5 434.1h1.3v1.3h-1.3zM160.5 443.4h1.3v1.3h-1.3zM477.4 434.7h1.3v1.3h-1.3zM292.6 444.1h1.3v1.3h-1.3zM71.0 439.0h1.3v1.3h-1.3zM109.1 429.6h1.3v1.3h-1.3zM140.0 439.6h1.3v1.3h-1.3zM365.0 446.7h1.3v1.3h-1.3zM344.5 441.5h1.3v1.3h-1.3zM525.8 426.0h1.3v1.3h-1.3zM66.8 443.4h1.3v1.3h-1.3zM95.2 434.8h1.3v1.3h-1.3zM83.1 438.5h1.3v1.3h-1.3zM117.6 441.6h1.3v1.3h-1.3zM392.9 425.8h1.3v1.3h-1.3zM458.0 437.3h1.3v1.3h-1.3zM142.3 425.0h1.3v1.3h-1.3zM180.6 441.7h1.3v1.3h-1.3zM72.5 431.4h1.3v1.3h-1.3zM77.9 430.4h1.3v1.3h-1.3zM228.4 430.3h1.3v1.3h-1.3zM108.6 441.6h1.3v1.3h-1.3zM120.2 443.6h1.3v1.3h-1.3zM191.0 432.1h1.3v1.3h-1.3zM51.2 443.0h1.3v1.3h-1.3zM65.6 442.5h1.3v1.3h-1.3zM593.6 437.3h1.3v1.3h-1.3zM103.4 428.4h1.3v1.3h-1.3zM432.4 439.8h1.3v1.3h-1.3zM432.3 442.4h1.3v1.3h-1.3zM78.5 434.9h1.3v1.3h-1.3zM133.0 441.4h1.3v1.3h-1.3zM298.3 441.3h1.3v1.3h-1.3zM563.2 443.6h1.3v1.3h-1.3zM347.4 427.0h1.3v1.3h-1.3zM114.0 446.2h1.3v1.3h-1.3zM174.1 441.0h1.3v1.3h-1.3zM203.0 439.2h1.3v1.3h-1.3zM222.6 446.1h1.3v1.3h-1.3zM493.2 425.3h1.3v1.3h-1.3zM53.3 439.7h1.3v1.3h-1.3zM130.1 428.6h1.3v1.3h-1.3zM369.4 437.6h1.3v1.3h-1.3zM397.1 443.4h1.3v1.3h-1.3zM165.2 445.5h1.3v1.3h-1.3zM420.2 441.2h1.3v1.3h-1.3zM170.9 431.4h1.3v1.3h-1.3zM168.6 430.9h1.3v1.3h-1.3zM296.1 446.2h1.3v1.3h-1.3zM545.3 428.4h1.3v1.3h-1.3zM52.9 436.7h1.3v1.3h-1.3zM158.6 439.1h1.3v1.3h-1.3zM144.6 434.0h1.3v1.3h-1.3zM46.2 437.4h1.3v1.3h-1.3zM362.6 431.3h1.3v1.3h-1.3zM242.1 438.8h1.3v1.3h-1.3zM508.6 427.7h1.3v1.3h-1.3zM361.2 435.3h1.3v1.3h-1.3zM56.2 442.4h1.3v1.3h-1.3zM156.3 441.8h1.3v1.3h-1.3zM549.3 445.3h1.3v1.3h-1.3zM476.2 447.0h1.3v1.3h-1.3zM414.5 435.6h1.3v1.3h-1.3zM478.4 427.8h1.3v1.3h-1.3zM487.4 444.7h1.3v1.3h-1.3zM349.0 441.1h1.3v1.3h-1.3zM118.9 444.3h1.3v1.3h-1.3zM134.5 430.6h1.3v1.3h-1.3zM145.1 426.2h1.3v1.3h-1.3zM284.1 428.5h1.3v1.3h-1.3zM368.8 426.2h1.3v1.3h-1.3zM524.4 442.0h1.3v1.3h-1.3zM250.8 425.3h1.3v1.3h-1.3zM76.5 425.8h1.3v1.3h-1.3zM304.7 439.2h1.3v1.3h-1.3zM372.0 437.7h1.3v1.3h-1.3zM355.9 444.3h1.3v1.3h-1.3zM591.1 432.9h1.3v1.3h-1.3zM207.9 441.3h1.3v1.3h-1.3zM428.0 435.7h1.3v1.3h-1.3zM221.4 432.8h1.3v1.3h-1.3zM117.9 425.8h1.3v1.3h-1.3zM361.5 436.9h1.3v1.3h-1.3zM373.9 444.6h1.3v1.3h-1.3zM124.7 438.2h1.3v1.3h-1.3zM221.9 445.5h1.3v1.3h-1.3zM421.0 432.7h1.3v1.3h-1.3zM167.9 437.0h1.3v1.3h-1.3zM382.7 436.8h1.3v1.3h-1.3zM235.6 442.4h1.3v1.3h-1.3zM360.7 434.2h1.3v1.3h-1.3zM50.7 428.0h1.3v1.3h-1.3zM191.1 436.3h1.3v1.3h-1.3zM226.3 443.9h1.3v1.3h-1.3zM84.7 437.5h1.3v1.3h-1.3zM81.8 437.5h1.3v1.3h-1.3zM498.7 442.3h1.3v1.3h-1.3zM139.0 439.5h1.3v1.3h-1.3zM122.2 447.3h1.3v1.3h-1.3zM397.5 429.7h1.3v1.3h-1.3zM278.4 437.1h1.3v1.3h-1.3zM491.1 438.6h1.3v1.3h-1.3zM387.2 440.2h1.3v1.3h-1.3zM352.7 443.3h1.3v1.3h-1.3zM231.6 434.4h1.3v1.3h-1.3zM403.5 426.6h1.3v1.3h-1.3zM243.9 428.5h1.3v1.3h-1.3zM50.0 434.7h1.3v1.3h-1.3zM363.6 438.6h1.3v1.3h-1.3zM264.8 439.5h1.3v1.3h-1.3zM368.6 439.0h1.3v1.3h-1.3zM291.6 434.5h1.3v1.3h-1.3zM344.7 433.3h1.3v1.3h-1.3zM149.1 425.3h1.3v1.3h-1.3zM111.8 431.8h1.3v1.3h-1.3zM140.2 435.9h1.3v1.3h-1.3zM356.0 443.3h1.3v1.3h-1.3zM433.5 439.5h1.3v1.3h-1.3zM69.6 429.6h1.3v1.3h-1.3zM233.3 447.3h1.3v1.3h-1.3zM231.9 434.2h1.3v1.3h-1.3zM457.0 436.2h1.3v1.3h-1.3zM385.9 432.8h1.3v1.3h-1.3zM399.1 444.7h1.3v1.3h-1.3zM140.4 445.0h1.3v1.3h-1.3zM105.3 435.6h1.3v1.3h-1.3zM542.8 447.2h1.3v1.3h-1.3zM520.5 431.3h1.3v1.3h-1.3zM262.5 441.4h1.3v1.3h-1.3zM104.9 434.3h1.3v1.3h-1.3zM259.4 438.7h1.3v1.3h-1.3zM77.2 434.3h1.3v1.3h-1.3zM427.4 446.4h1.3v1.3h-1.3zM238.3 429.0h1.3v1.3h-1.3zM231.4 425.7h1.3v1.3h-1.3zM193.8 431.2h1.3v1.3h-1.3zM180.4 427.7h1.3v1.3h-1.3zM194.1 439.3h1.3v1.3h-1.3zM158.9 440.9h1.3v1.3h-1.3zM391.1 435.4h1.3v1.3h-1.3zM282.1 446.0h1.3v1.3h-1.3zM119.7 439.5h1.3v1.3h-1.3zM195.0 441.0h1.3v1.3h-1.3zM190.2 432.4h1.3v1.3h-1.3zM254.8 431.5h1.3v1.3h-1.3zM100.7 428.6h1.3v1.3h-1.3zM122.5 428.5h1.3v1.3h-1.3zM541.8 439.5h1.3v1.3h-1.3zM490.7 425.8h1.3v1.3h-1.3zM172.2 436.0h1.3v1.3h-1.3zM184.1 444.5h1.3v1.3h-1.3zM480.8 427.1h1.3v1.3h-1.3zM407.2 441.9h1.3v1.3h-1.3zM419.9 427.7h1.3v1.3h-1.3zM119.4 435.2h1.3v1.3h-1.3zM210.8 438.7h1.3v1.3h-1.3zM450.5 440.4h1.3v1.3h-1.3zM284.8 443.4h1.3v1.3h-1.3zM453.7 434.7h1.3v1.3h-1.3zM267.2 440.7h1.3v1.3h-1.3zM84.2 442.3h1.3v1.3h-1.3zM121.5 441.1h1.3v1.3h-1.3zM576.7 441.2h1.3v1.3h-1.3zM61.7 432.4h1.3v1.3h-1.3zM261.0 432.5h1.3v1.3h-1.3zM476.3 428.3h1.3v1.3h-1.3zM261.4 443.3h1.3v1.3h-1.3zM114.7 430.8h1.3v1.3h-1.3zM484.6 446.5h1.3v1.3h-1.3zM143.7 440.6h1.3v1.3h-1.3zM279.1 440.4h1.3v1.3h-1.3zM438.6 428.5h1.3v1.3h-1.3zM201.1 432.0h1.3v1.3h-1.3zM259.5 428.6h1.3v1.3h-1.3zM524.1 446.5h1.3v1.3h-1.3zM72.7 444.9h1.3v1.3h-1.3zM533.4 426.8h1.3v1.3h-1.3zM507.5 431.7h1.3v1.3h-1.3zM287.1 428.7h1.3v1.3h-1.3zM217.4 426.0h1.3v1.3h-1.3zM323.7 431.7h1.3v1.3h-1.3zM308.6 426.5h1.3v1.3h-1.3zM122.4 446.4h1.3v1.3h-1.3zM205.1 425.5h1.3v1.3h-1.3zM438.1 441.8h1.3v1.3h-1.3zM80.1 438.1h1.3v1.3h-1.3zM168.1 444.4h1.3v1.3h-1.3zM190.6 435.8h1.3v1.3h-1.3zM261.0 427.4h1.3v1.3h-1.3zM131.2 439.9h1.3v1.3h-1.3zM514.3 432.4h1.3v1.3h-1.3zM414.1 430.1h1.3v1.3h-1.3zM558.0 440.9h1.3v1.3h-1.3zM266.6 446.1h1.3v1.3h-1.3zM217.3 431.6h1.3v1.3h-1.3zM320.8 440.1h1.3v1.3h-1.3zM333.5 443.6h1.3v1.3h-1.3zM87.8 425.0h1.3v1.3h-1.3zM508.0 431.2h1.3v1.3h-1.3zM110.7 437.6h1.3v1.3h-1.3zM160.9 447.2h1.3v1.3h-1.3zM447.4 441.9h1.3v1.3h-1.3zM129.2 429.9h1.3v1.3h-1.3zM563.2 443.2h1.3v1.3h-1.3zM503.0 443.3h1.3v1.3h-1.3zM554.4 439.1h1.3v1.3h-1.3zM384.6 428.6h1.3v1.3h-1.3zM191.6 434.6h1.3v1.3h-1.3zM352.7 440.7h1.3v1.3h-1.3zM403.2 431.9h1.3v1.3h-1.3zM144.7 425.5h1.3v1.3h-1.3zM98.9 437.5h1.3v1.3h-1.3zM161.5 447.4h1.3v1.3h-1.3zM530.6 441.0h1.3v1.3h-1.3zM453.0 437.9h1.3v1.3h-1.3zM253.1 432.4h1.3v1.3h-1.3zM145.2 437.4h1.3v1.3h-1.3zM392.2 443.0h1.3v1.3h-1.3zM96.0 437.0h1.3v1.3h-1.3zM545.6 432.1h1.3v1.3h-1.3zM420.5 434.5h1.3v1.3h-1.3zM444.2 439.7h1.3v1.3h-1.3zM591.4 443.2h1.3v1.3h-1.3zM463.6 445.5h1.3v1.3h-1.3zM452.3 434.3h1.3v1.3h-1.3zM301.2 434.7h1.3v1.3h-1.3zM288.8 443.4h1.3v1.3h-1.3zM112.9 441.7h1.3v1.3h-1.3zM102.2 441.8h1.3v1.3h-1.3zM346.3 442.3h1.3v1.3h-1.3zM398.0 435.8h1.3v1.3h-1.3zM407.7 438.2h1.3v1.3h-1.3zM88.8 427.9h1.3v1.3h-1.3zM512.0 425.0h1.3v1.3h-1.3zM490.2 428.7h1.3v1.3h-1.3zM286.1 425.7h1.3v1.3h-1.3zM128.1 446.1h1.3v1.3h-1.3zM190.0 447.1h1.3v1.3h-1.3zM411.3 440.7h1.3v1.3h-1.3zM481.4 427.4h1.3v1.3h-1.3zM582.5 430.6h1.3v1.3h-1.3zM254.7 432.1h1.3v1.3h-1.3zM554.6 439.0h1.3v1.3h-1.3zM490.3 433.8h1.3v1.3h-1.3zM105.1 429.3h1.3v1.3h-1.3zM113.3 432.2h1.3v1.3h-1.3zM201.0 437.3h1.3v1.3h-1.3zM113.7 444.9h1.3v1.3h-1.3zM539.1 434.9h1.3v1.3h-1.3zM222.9 438.8h1.3v1.3h-1.3zM132.7 435.3h1.3v1.3h-1.3zM630.8 439.7h1.3v1.3h-1.3zM136.8 427.7h1.3v1.3h-1.3zM539.0 443.3h1.3v1.3h-1.3zM286.4 443.9h1.3v1.3h-1.3zM90.3 442.5h1.3v1.3h-1.3zM70.4 439.3h1.3v1.3h-1.3zM333.0 438.7h1.3v1.3h-1.3zM262.4 434.3h1.3v1.3h-1.3zM250.0 437.1h1.3v1.3h-1.3zM133.6 441.3h1.3v1.3h-1.3zM212.6 441.5h1.3v1.3h-1.3zM395.7 425.8h1.3v1.3h-1.3zM268.1 429.5h1.3v1.3h-1.3zM465.2 430.2h1.3v1.3h-1.3zM501.3 433.1h1.3v1.3h-1.3zM260.3 438.3h1.3v1.3h-1.3zM80.8 440.1h1.3v1.3h-1.3zM270.8 442.1h1.3v1.3h-1.3zM259.6 447.3h1.3v1.3h-1.3zM319.2 440.6h1.3v1.3h-1.3zM147.9 440.6h1.3v1.3h-1.3zM234.4 435.0h1.3v1.3h-1.3zM92.9 434.3h1.3v1.3h-1.3zM522.9 427.8h1.3v1.3h-1.3zM85.3 427.1h1.3v1.3h-1.3zM214.2 446.9h1.3v1.3h-1.3zM145.2 431.5h1.3v1.3h-1.3zM178.5 442.9h1.3v1.3h-1.3zM444.6 430.9h1.3v1.3h-1.3zM92.5 427.7h1.3v1.3h-1.3zM254.6 443.2h1.3v1.3h-1.3zM174.8 430.5h1.3v1.3h-1.3zM445.2 432.1h1.3v1.3h-1.3zM252.5 438.1h1.3v1.3h-1.3zM71.5 439.9h1.3v1.3h-1.3zM349.5 441.6h1.3v1.3h-1.3zM330.3 426.5h1.3v1.3h-1.3zM78.0 431.1h1.3v1.3h-1.3zM247.2 443.9h1.3v1.3h-1.3zM131.7 445.4h1.3v1.3h-1.3zM376.9 434.9h1.3v1.3h-1.3zM248.2 441.6h1.3v1.3h-1.3zM523.8 430.0h1.3v1.3h-1.3zM215.7 426.2h1.3v1.3h-1.3zM125.0 436.7h1.3v1.3h-1.3zM184.6 445.4h1.3v1.3h-1.3zM60.7 446.1h1.3v1.3h-1.3zM354.1 443.3h1.3v1.3h-1.3zM135.8 430.8h1.3v1.3h-1.3zM61.3 442.0h1.3v1.3h-1.3zM437.2 429.3h1.3v1.3h-1.3zM328.2 427.0h1.3v1.3h-1.3zM110.1 446.0h1.3v1.3h-1.3zM443.0 427.9h1.3v1.3h-1.3zM80.5 438.2h1.3v1.3h-1.3zM431.7 441.7h1.3v1.3h-1.3zM205.8 442.2h1.3v1.3h-1.3zM169.2 432.9h1.3v1.3h-1.3zM177.5 443.9h1.3v1.3h-1.3zM208.8 428.8h1.3v1.3h-1.3zM218.3 436.5h1.3v1.3h-1.3zM323.9 427.5h1.3v1.3h-1.3zM173.3 439.3h1.3v1.3h-1.3zM156.2 425.0h1.3v1.3h-1.3zM227.6 444.9h1.3v1.3h-1.3zM646.7 426.8h1.3v1.3h-1.3zM136.7 445.2h1.3v1.3h-1.3zM147.8 445.4h1.3v1.3h-1.3zM188.6 431.9h1.3v1.3h-1.3zM66.8 442.2h1.3v1.3h-1.3zM309.9 447.0h1.3v1.3h-1.3zM587.4 436.4h1.3v1.3h-1.3zM127.4 443.4h1.3v1.3h-1.3zM467.7 430.8h1.3v1.3h-1.3zM353.4 439.4h1.3v1.3h-1.3zM259.7 425.6h1.3v1.3h-1.3zM212.4 441.5h1.3v1.3h-1.3zM86.0 435.9h1.3v1.3h-1.3zM296.1 439.2h1.3v1.3h-1.3zM49.9 432.7h1.3v1.3h-1.3zM380.2 431.8h1.3v1.3h-1.3zM487.8 440.2h1.3v1.3h-1.3zM283.0 438.2h1.3v1.3h-1.3zM131.9 447.3h1.3v1.3h-1.3zM201.0 438.9h1.3v1.3h-1.3zM192.4 444.8h1.3v1.3h-1.3zM605.9 431.7h1.3v1.3h-1.3zM244.2 435.0h1.3v1.3h-1.3zM43.9 428.1h1.3v1.3h-1.3zM359.2 425.0h1.3v1.3h-1.3zM188.5 430.6h1.3v1.3h-1.3zM277.9 438.5h1.3v1.3h-1.3zM369.2 432.1h1.3v1.3h-1.3zM242.8 435.2h1.3v1.3h-1.3zM181.6 441.4h1.3v1.3h-1.3zM490.1 436.7h1.3v1.3h-1.3zM180.3 426.5h1.3v1.3h-1.3zM370.8 435.5h1.3v1.3h-1.3zM547.0 443.5h1.3v1.3h-1.3zM70.1 428.6h1.3v1.3h-1.3zM549.7 444.0h1.3v1.3h-1.3zM199.1 439.4h1.3v1.3h-1.3zM323.7 438.5h1.3v1.3h-1.3zM321.6 429.4h1.3v1.3h-1.3zM513.2 432.1h1.3v1.3h-1.3zM270.6 442.1h1.3v1.3h-1.3zM272.9 438.8h1.3v1.3h-1.3zM54.4 434.5h1.3v1.3h-1.3zM79.1 431.2h1.3v1.3h-1.3zM213.4 442.0h1.3v1.3h-1.3zM559.9 433.1h1.3v1.3h-1.3zM575.2 437.9h1.3v1.3h-1.3zM273.5 437.4h1.3v1.3h-1.3zM270.7 440.8h1.3v1.3h-1.3zM295.9 429.1h1.3v1.3h-1.3zM261.5 434.4h1.3v1.3h-1.3zM273.9 440.0h1.3v1.3h-1.3zM87.2 438.9h1.3v1.3h-1.3zM368.9 427.1h1.3v1.3h-1.3zM512.1 434.0h1.3v1.3h-1.3zM329.8 428.5h1.3v1.3h-1.3zM300.3 427.3h1.3v1.3h-1.3zM315.7 435.9h1.3v1.3h-1.3zM501.8 446.5h1.3v1.3h-1.3zM464.3 430.1h1.3v1.3h-1.3zM520.1 442.4h1.3v1.3h-1.3zM91.1 445.1h1.3v1.3h-1.3zM98.0 434.7h1.3v1.3h-1.3zM77.4 431.4h1.3v1.3h-1.3zM342.3 431.8h1.3v1.3h-1.3zM302.1 424.9h1.3v1.3h-1.3zM133.5 435.7h1.3v1.3h-1.3zM47.1 441.2h1.3v1.3h-1.3zM205.8 441.7h1.3v1.3h-1.3zM359.7 446.3h1.3v1.3h-1.3zM231.9 429.3h1.3v1.3h-1.3zM573.8 442.9h1.3v1.3h-1.3zM75.6 439.0h1.3v1.3h-1.3zM330.8 434.2h1.3v1.3h-1.3zM269.8 442.9h1.3v1.3h-1.3zM75.0 435.4h1.3v1.3h-1.3zM296.6 440.1h1.3v1.3h-1.3zM212.7 440.8h1.3v1.3h-1.3zM410.0 426.3h1.3v1.3h-1.3zM79.1 433.0h1.3v1.3h-1.3zM73.7 445.8h1.3v1.3h-1.3zM412.6 426.6h1.3v1.3h-1.3zM351.8 432.2h1.3v1.3h-1.3zM225.9 428.5h1.3v1.3h-1.3zM133.6 442.8h1.3v1.3h-1.3zM105.8 429.7h1.3v1.3h-1.3zM451.3 427.0h1.3v1.3h-1.3zM468.1 446.2h1.3v1.3h-1.3zM474.1 428.5h1.3v1.3h-1.3zM225.2 434.3h1.3v1.3h-1.3zM240.7 444.0h1.3v1.3h-1.3zM564.3 429.4h1.3v1.3h-1.3zM63.7 433.0h1.3v1.3h-1.3zM181.7 445.3h1.3v1.3h-1.3zM330.9 437.7h1.3v1.3h-1.3zM463.7 428.7h1.3v1.3h-1.3zM119.0 424.9h1.3v1.3h-1.3zM223.4 430.5h1.3v1.3h-1.3zM100.9 427.9h1.3v1.3h-1.3zM413.5 445.4h1.3v1.3h-1.3zM129.9 427.3h1.3v1.3h-1.3zM566.8 426.5h1.3v1.3h-1.3zM63.4 425.6h1.3v1.3h-1.3zM449.9 439.9h1.3v1.3h-1.3zM321.8 430.7h1.3v1.3h-1.3zM154.1 440.7h1.3v1.3h-1.3zM86.3 445.3h1.3v1.3h-1.3zM412.1 446.7h1.3v1.3h-1.3zM361.2 432.8h1.3v1.3h-1.3zM125.1 439.5h1.3v1.3h-1.3zM275.4 443.7h1.3v1.3h-1.3zM148.4 439.9h1.3v1.3h-1.3zM340.7 445.3h1.3v1.3h-1.3zM587.7 436.2h1.3v1.3h-1.3zM375.2 436.9h1.3v1.3h-1.3zM144.9 436.0h1.3v1.3h-1.3zM270.5 438.3h1.3v1.3h-1.3zM169.3 442.0h1.3v1.3h-1.3zM594.8 426.1h1.3v1.3h-1.3zM185.3 444.0h1.3v1.3h-1.3zM206.9 438.5h1.3v1.3h-1.3zM364.2 427.3h1.3v1.3h-1.3zM95.6 442.2h1.3v1.3h-1.3zM483.5 441.9h1.3v1.3h-1.3zM68.9 431.8h1.3v1.3h-1.3zM547.8 429.1h1.3v1.3h-1.3zM50.0 438.1h1.3v1.3h-1.3zM295.4 441.9h1.3v1.3h-1.3zM137.0 444.3h1.3v1.3h-1.3zM166.1 440.0h1.3v1.3h-1.3zM437.4 433.3h1.3v1.3h-1.3zM100.6 439.5h1.3v1.3h-1.3zM143.8 432.2h1.3v1.3h-1.3zM505.0 428.7h1.3v1.3h-1.3zM115.1 429.6h1.3v1.3h-1.3zM199.4 442.2h1.3v1.3h-1.3zM166.0 442.1h1.3v1.3h-1.3zM286.1 429.5h1.3v1.3h-1.3zM97.3 428.5h1.3v1.3h-1.3zM253.6 428.5h1.3v1.3h-1.3zM534.3 436.4h1.3v1.3h-1.3zM53.5 429.1h1.3v1.3h-1.3zM302.6 437.1h1.3v1.3h-1.3zM251.0 439.4h1.3v1.3h-1.3zM224.2 441.3h1.3v1.3h-1.3zM477.5 432.5h1.3v1.3h-1.3zM543.1 432.0h1.3v1.3h-1.3zM69.1 443.3h1.3v1.3h-1.3zM267.7 427.3h1.3v1.3h-1.3zM287.5 425.8h1.3v1.3h-1.3zM160.7 443.8h1.3v1.3h-1.3zM369.8 443.5h1.3v1.3h-1.3zM544.5 439.5h1.3v1.3h-1.3zM105.8 428.0h1.3v1.3h-1.3zM361.5 426.5h1.3v1.3h-1.3zM90.3 437.4h1.3v1.3h-1.3zM276.1 432.1h1.3v1.3h-1.3zM78.6 432.0h1.3v1.3h-1.3zM388.5 430.5h1.3v1.3h-1.3zM507.6 440.1h1.3v1.3h-1.3zM128.2 427.3h1.3v1.3h-1.3zM132.8 434.4h1.3v1.3h-1.3zM72.2 430.5h1.3v1.3h-1.3zM440.6 430.2h1.3v1.3h-1.3zM223.6 437.9h1.3v1.3h-1.3zM215.2 434.4h1.3v1.3h-1.3zM258.4 435.8h1.3v1.3h-1.3zM586.6 430.8h1.3v1.3h-1.3zM149.0 446.2h1.3v1.3h-1.3zM227.6 425.6h1.3v1.3h-1.3zM165.5 437.5h1.3v1.3h-1.3zM110.5 438.5h1.3v1.3h-1.3zM208.6 426.9h1.3v1.3h-1.3zM238.2 430.3h1.3v1.3h-1.3zM334.5 432.3h1.3v1.3h-1.3zM509.4 439.2h1.3v1.3h-1.3zM221.9 441.6h1.3v1.3h-1.3zM521.0 428.8h1.3v1.3h-1.3zM394.1 426.2h1.3v1.3h-1.3zM207.8 445.9h1.3v1.3h-1.3zM463.2 429.2h1.3v1.3h-1.3zM112.3 432.9h1.3v1.3h-1.3zM503.1 438.6h1.3v1.3h-1.3zM542.3 443.2h1.3v1.3h-1.3zM366.1 427.1h1.3v1.3h-1.3zM126.1 445.9h1.3v1.3h-1.3zM299.2 428.2h1.3v1.3h-1.3zM456.9 438.3h1.3v1.3h-1.3zM398.6 428.3h1.3v1.3h-1.3zM136.9 430.4h1.3v1.3h-1.3zM587.4 431.5h1.3v1.3h-1.3zM213.7 433.8h1.3v1.3h-1.3zM553.7 442.6h1.3v1.3h-1.3zM182.0 432.2h1.3v1.3h-1.3zM266.1 445.8h1.3v1.3h-1.3zM562.6 447.4h1.3v1.3h-1.3zM433.0 441.2h1.3v1.3h-1.3zM79.9 434.9h1.3v1.3h-1.3zM543.3 428.7h1.3v1.3h-1.3zM111.8 433.2h1.3v1.3h-1.3zM253.9 434.6h1.3v1.3h-1.3zM178.2 442.7h1.3v1.3h-1.3zM375.9 429.9h1.3v1.3h-1.3zM60.9 437.9h1.3v1.3h-1.3zM82.4 431.1h1.3v1.3h-1.3zM405.5 435.9h1.3v1.3h-1.3zM407.9 427.8h1.3v1.3h-1.3zM339.3 437.2h1.3v1.3h-1.3zM324.9 443.1h1.3v1.3h-1.3zM292.8 443.0h1.3v1.3h-1.3zM314.9 431.5h1.3v1.3h-1.3zM165.2 434.8h1.3v1.3h-1.3zM488.9 442.8h1.3v1.3h-1.3zM51.4 431.1h1.3v1.3h-1.3zM433.6 439.4h1.3v1.3h-1.3zM144.7 425.0h1.3v1.3h-1.3zM232.7 443.5h1.3v1.3h-1.3zM106.6 444.0h1.3v1.3h-1.3zM552.3 445.0h1.3v1.3h-1.3zM392.2 442.7h1.3v1.3h-1.3zM199.4 426.9h1.3v1.3h-1.3zM496.9 429.1h1.3v1.3h-1.3zM564.3 447.1h1.3v1.3h-1.3zM175.9 438.9h1.3v1.3h-1.3zM49.0 429.7h1.3v1.3h-1.3zM330.5 427.3h1.3v1.3h-1.3zM374.1 440.1h1.3v1.3h-1.3zM343.4 442.8h1.3v1.3h-1.3zM194.1 438.8h1.3v1.3h-1.3zM107.8 444.6h1.3v1.3h-1.3zM167.1 434.2h1.3v1.3h-1.3zM315.6 431.1h1.3v1.3h-1.3zM76.6 438.4h1.3v1.3h-1.3zM191.8 431.8h1.3v1.3h-1.3zM335.4 426.9h1.3v1.3h-1.3zM414.3 442.0h1.3v1.3h-1.3zM286.3 428.8h1.3v1.3h-1.3zM67.1 425.4h1.3v1.3h-1.3zM540.4 446.3h1.3v1.3h-1.3zM192.2 442.5h1.3v1.3h-1.3zM206.2 447.0h1.3v1.3h-1.3zM512.2 425.4h1.3v1.3h-1.3zM483.0 429.2h1.3v1.3h-1.3zM144.2 445.0h1.3v1.3h-1.3zM610.8 428.2h1.3v1.3h-1.3zM354.5 434.0h1.3v1.3h-1.3zM538.4 446.2h1.3v1.3h-1.3zM381.1 438.5h1.3v1.3h-1.3zM48.1 446.9h1.3v1.3h-1.3zM326.9 432.7h1.3v1.3h-1.3zM171.6 444.9h1.3v1.3h-1.3zM261.6 430.9h1.3v1.3h-1.3zM106.1 440.6h1.3v1.3h-1.3zM515.4 433.7h1.3v1.3h-1.3zM47.6 444.9h1.3v1.3h-1.3zM365.4 438.2h1.3v1.3h-1.3zM62.3 428.2h1.3v1.3h-1.3zM154.7 437.5h1.3v1.3h-1.3zM480.8 440.6h1.3v1.3h-1.3zM259.1 445.3h1.3v1.3h-1.3zM213.1 438.1h1.3v1.3h-1.3zM56.3 427.4h1.3v1.3h-1.3zM372.8 428.8h1.3v1.3h-1.3zM237.6 439.1h1.3v1.3h-1.3zM143.1 432.7h1.3v1.3h-1.3zM98.9 440.9h1.3v1.3h-1.3zM604.7 441.6h1.3v1.3h-1.3zM152.5 431.9h1.3v1.3h-1.3zM509.7 441.6h1.3v1.3h-1.3zM60.5 442.7h1.3v1.3h-1.3zM441.7 432.6h1.3v1.3h-1.3zM231.5 445.9h1.3v1.3h-1.3zM52.4 444.2h1.3v1.3h-1.3zM113.2 425.5h1.3v1.3h-1.3zM469.1 430.0h1.3v1.3h-1.3zM153.5 440.6h1.3v1.3h-1.3zM296.6 437.4h1.3v1.3h-1.3zM494.3 426.4h1.3v1.3h-1.3zM255.3 446.7h1.3v1.3h-1.3zM556.5 428.1h1.3v1.3h-1.3zM215.3 443.1h1.3v1.3h-1.3zM451.6 432.5h1.3v1.3h-1.3zM155.2 445.2h1.3v1.3h-1.3zM447.2 442.4h1.3v1.3h-1.3zM83.5 428.2h1.3v1.3h-1.3zM123.9 439.2h1.3v1.3h-1.3zM490.8 429.6h1.3v1.3h-1.3zM199.2 435.6h1.3v1.3h-1.3zM112.4 429.4h1.3v1.3h-1.3zM220.0 430.2h1.3v1.3h-1.3zM182.0 442.5h1.3v1.3h-1.3zM281.2 432.9h1.3v1.3h-1.3zM74.7 428.5h1.3v1.3h-1.3zM188.7 437.5h1.3v1.3h-1.3zM115.1 431.4h1.3v1.3h-1.3zM116.3 423.5h1.3v1.3h-1.3zM186.2 421.2h1.3v1.3h-1.3zM85.4 422.8h1.3v1.3h-1.3zM87.6 410.5h1.3v1.3h-1.3zM111.5 392.7h1.3v1.3h-1.3zM191.8 407.8h1.3v1.3h-1.3zM174.9 377.2h1.3v1.3h-1.3zM496.2 418.4h1.3v1.3h-1.3zM240.1 411.2h1.3v1.3h-1.3zM267.0 399.4h1.3v1.3h-1.3zM341.5 325.0h1.3v1.3h-1.3zM447.7 425.6h1.3v1.3h-1.3zM334.6 425.3h1.3v1.3h-1.3zM188.3 407.1h1.3v1.3h-1.3zM446.5 403.3h1.3v1.3h-1.3zM183.8 386.3h1.3v1.3h-1.3zM94.1 369.4h1.3v1.3h-1.3zM315.2 425.0h1.3v1.3h-1.3zM463.9 420.7h1.3v1.3h-1.3zM187.7 353.7h1.3v1.3h-1.3zM177.3 408.4h1.3v1.3h-1.3zM183.5 420.4h1.3v1.3h-1.3zM295.4 416.4h1.3v1.3h-1.3zM57.6 399.0h1.3v1.3h-1.3zM556.1 421.6h1.3v1.3h-1.3zM203.0 403.1h1.3v1.3h-1.3zM484.1 405.8h1.3v1.3h-1.3zM118.0 419.2h1.3v1.3h-1.3zM128.2 421.9h1.3v1.3h-1.3zM592.3 404.7h1.3v1.3h-1.3zM147.1 419.4h1.3v1.3h-1.3zM75.3 411.2h1.3v1.3h-1.3zM54.2 423.2h1.3v1.3h-1.3zM303.5 417.6h1.3v1.3h-1.3zM360.9 379.9h1.3v1.3h-1.3zM450.9 419.1h1.3v1.3h-1.3zM162.7 386.6h1.3v1.3h-1.3zM396.5 370.4h1.3v1.3h-1.3zM201.7 397.2h1.3v1.3h-1.3zM367.7 414.8h1.3v1.3h-1.3zM335.4 424.0h1.3v1.3h-1.3zM49.3 386.8h1.3v1.3h-1.3zM155.0 398.3h1.3v1.3h-1.3zM187.6 388.4h1.3v1.3h-1.3zM171.6 348.8h1.3v1.3h-1.3zM498.6 346.5h1.3v1.3h-1.3zM518.2 399.4h1.3v1.3h-1.3zM176.4 419.8h1.3v1.3h-1.3zM127.6 425.0h1.3v1.3h-1.3zM91.5 412.6h1.3v1.3h-1.3zM400.6 356.4h1.3v1.3h-1.3zM314.1 396.2h1.3v1.3h-1.3zM54.3 409.9h1.3v1.3h-1.3zM164.9 421.6h1.3v1.3h-1.3zM201.7 417.2h1.3v1.3h-1.3zM407.9 403.5h1.3v1.3h-1.3zM212.0 425.5h1.3v1.3h-1.3zM150.6 425.8h1.3v1.3h-1.3zM185.7 425.8h1.3v1.3h-1.3zM114.1 395.7h1.3v1.3h-1.3zM135.4 340.6h1.3v1.3h-1.3zM241.6 407.9h1.3v1.3h-1.3zM203.4 410.0h1.3v1.3h-1.3zM143.9 423.7h1.3v1.3h-1.3zM474.7 402.1h1.3v1.3h-1.3zM494.6 387.7h1.3v1.3h-1.3zM160.0 409.4h1.3v1.3h-1.3zM75.1 405.9h1.3v1.3h-1.3zM281.9 397.2h1.3v1.3h-1.3zM101.7 419.5h1.3v1.3h-1.3zM533.3 420.7h1.3v1.3h-1.3zM454.2 423.5h1.3v1.3h-1.3zM162.7 422.3h1.3v1.3h-1.3zM435.9 423.1h1.3v1.3h-1.3zM305.6 418.6h1.3v1.3h-1.3zM62.5 394.5h1.3v1.3h-1.3zM223.4 419.8h1.3v1.3h-1.3zM170.1 397.3h1.3v1.3h-1.3zM204.8 399.4h1.3v1.3h-1.3zM535.2 419.6h1.3v1.3h-1.3zM489.9 416.7h1.3v1.3h-1.3zM98.5 403.0h1.3v1.3h-1.3zM137.0 408.3h1.3v1.3h-1.3zM329.3 374.8h1.3v1.3h-1.3zM357.2 422.8h1.3v1.3h-1.3zM486.9 414.9h1.3v1.3h-1.3zM109.1 389.5h1.3v1.3h-1.3zM342.8 414.0h1.3v1.3h-1.3zM180.7 399.0h1.3v1.3h-1.3zM273.5 410.1h1.3v1.3h-1.3zM108.3 362.0h1.3v1.3h-1.3zM215.9 401.2h1.3v1.3h-1.3zM331.8 329.2h1.3v1.3h-1.3zM85.8 417.2h1.3v1.3h-1.3zM314.2 390.0h1.3v1.3h-1.3zM101.6 413.7h1.3v1.3h-1.3zM221.7 424.6h1.3v1.3h-1.3zM109.3 422.3h1.3v1.3h-1.3zM148.1 421.5h1.3v1.3h-1.3zM307.0 390.6h1.3v1.3h-1.3zM115.8 422.7h1.3v1.3h-1.3zM417.4 393.0h1.3v1.3h-1.3zM123.6 410.6h1.3v1.3h-1.3zM109.6 348.6h1.3v1.3h-1.3zM196.9 415.8h1.3v1.3h-1.3zM150.4 410.5h1.3v1.3h-1.3zM159.5 415.7h1.3v1.3h-1.3zM49.8 383.9h1.3v1.3h-1.3zM245.9 403.2h1.3v1.3h-1.3zM208.0 384.3h1.3v1.3h-1.3zM261.9 414.5h1.3v1.3h-1.3zM184.0 423.0h1.3v1.3h-1.3zM511.2 413.0h1.3v1.3h-1.3zM546.8 364.5h1.3v1.3h-1.3zM279.1 399.9h1.3v1.3h-1.3zM377.2 422.4h1.3v1.3h-1.3zM257.1 384.1h1.3v1.3h-1.3zM587.5 380.0h1.3v1.3h-1.3zM447.4 358.1h1.3v1.3h-1.3zM382.5 376.2h1.3v1.3h-1.3zM582.0 415.8h1.3v1.3h-1.3zM197.7 415.8h1.3v1.3h-1.3zM59.4 416.2h1.3v1.3h-1.3zM87.1 419.6h1.3v1.3h-1.3zM166.2 393.0h1.3v1.3h-1.3zM235.2 413.4h1.3v1.3h-1.3zM497.7 371.1h1.3v1.3h-1.3zM398.3 375.5h1.3v1.3h-1.3zM343.1 404.3h1.3v1.3h-1.3zM455.4 374.2h1.3v1.3h-1.3zM474.3 414.9h1.3v1.3h-1.3zM65.0 366.1h1.3v1.3h-1.3zM487.6 412.1h1.3v1.3h-1.3zM531.8 423.5h1.3v1.3h-1.3zM179.0 419.8h1.3v1.3h-1.3zM311.8 307.0h1.3v1.3h-1.3zM230.2 395.8h1.3v1.3h-1.3zM159.0 393.8h1.3v1.3h-1.3zM457.3 409.0h1.3v1.3h-1.3zM535.7 349.5h1.3v1.3h-1.3zM57.9 367.2h1.3v1.3h-1.3zM390.1 370.2h1.3v1.3h-1.3zM416.2 401.6h1.3v1.3h-1.3zM303.6 418.0h1.3v1.3h-1.3zM100.5 410.5h1.3v1.3h-1.3zM190.1 415.8h1.3v1.3h-1.3zM152.0 408.2h1.3v1.3h-1.3zM168.4 368.8h1.3v1.3h-1.3zM483.3 394.8h1.3v1.3h-1.3zM616.2 381.5h1.3v1.3h-1.3zM317.4 355.7h1.3v1.3h-1.3zM131.3 424.1h1.3v1.3h-1.3zM518.0 401.1h1.3v1.3h-1.3zM143.2 420.5h1.3v1.3h-1.3zM231.1 402.4h1.3v1.3h-1.3zM96.0 419.9h1.3v1.3h-1.3zM355.8 416.6h1.3v1.3h-1.3zM335.3 410.0h1.3v1.3h-1.3zM132.9 404.1h1.3v1.3h-1.3zM293.1 424.0h1.3v1.3h-1.3zM261.3 412.4h1.3v1.3h-1.3zM137.7 413.8h1.3v1.3h-1.3zM47.3 405.2h1.3v1.3h-1.3zM262.8 394.2h1.3v1.3h-1.3zM292.0 364.3h1.3v1.3h-1.3zM386.5 417.3h1.3v1.3h-1.3zM269.9 393.6h1.3v1.3h-1.3zM383.5 387.8h1.3v1.3h-1.3zM114.8 421.0h1.3v1.3h-1.3zM59.9 386.6h1.3v1.3h-1.3zM350.3 410.0h1.3v1.3h-1.3zM260.0 371.0h1.3v1.3h-1.3zM439.1 361.4h1.3v1.3h-1.3zM283.1 416.0h1.3v1.3h-1.3zM204.7 388.4h1.3v1.3h-1.3zM377.1 413.9h1.3v1.3h-1.3zM552.0 416.0h1.3v1.3h-1.3zM56.8 397.4h1.3v1.3h-1.3zM542.2 424.4h1.3v1.3h-1.3zM79.0 419.6h1.3v1.3h-1.3zM162.8 393.7h1.3v1.3h-1.3zM282.2 378.3h1.3v1.3h-1.3zM78.0 375.7h1.3v1.3h-1.3zM112.9 425.3h1.3v1.3h-1.3zM285.4 421.0h1.3v1.3h-1.3zM480.4 419.4h1.3v1.3h-1.3zM137.6 421.1h1.3v1.3h-1.3zM79.8 393.4h1.3v1.3h-1.3zM64.1 398.1h1.3v1.3h-1.3zM399.8 387.8h1.3v1.3h-1.3zM415.5 374.0h1.3v1.3h-1.3zM131.6 413.6h1.3v1.3h-1.3zM471.0 414.1h1.3v1.3h-1.3zM46.8 386.5h1.3v1.3h-1.3zM457.8 412.9h1.3v1.3h-1.3zM424.3 394.2h1.3v1.3h-1.3zM209.9 414.4h1.3v1.3h-1.3zM240.4 387.6h1.3v1.3h-1.3zM421.6 418.5h1.3v1.3h-1.3zM346.0 378.4h1.3v1.3h-1.3zM94.7 363.5h1.3v1.3h-1.3zM135.7 391.5h1.3v1.3h-1.3zM97.4 405.1h1.3v1.3h-1.3zM214.6 423.2h1.3v1.3h-1.3zM316.9 376.0h1.3v1.3h-1.3zM103.8 418.7h1.3v1.3h-1.3zM176.2 394.7h1.3v1.3h-1.3zM307.6 418.0h1.3v1.3h-1.3zM513.0 385.7h1.3v1.3h-1.3zM336.1 377.4h1.3v1.3h-1.3zM133.1 392.2h1.3v1.3h-1.3zM501.8 424.5h1.3v1.3h-1.3zM276.5 401.2h1.3v1.3h-1.3zM63.9 384.8h1.3v1.3h-1.3zM64.7 423.7h1.3v1.3h-1.3zM158.1 410.5h1.3v1.3h-1.3zM117.7 384.9h1.3v1.3h-1.3zM251.6 409.0h1.3v1.3h-1.3zM198.3 361.2h1.3v1.3h-1.3zM434.0 419.8h1.3v1.3h-1.3zM318.0 378.9h1.3v1.3h-1.3zM504.5 366.2h1.3v1.3h-1.3zM466.8 410.7h1.3v1.3h-1.3zM147.2 413.2h1.3v1.3h-1.3zM348.7 410.4h1.3v1.3h-1.3zM408.3 414.7h1.3v1.3h-1.3zM281.8 373.0h1.3v1.3h-1.3zM61.1 416.7h1.3v1.3h-1.3zM219.3 422.7h1.3v1.3h-1.3zM435.9 405.7h1.3v1.3h-1.3zM458.1 377.6h1.3v1.3h-1.3zM83.2 403.3h1.3v1.3h-1.3zM170.8 406.3h1.3v1.3h-1.3zM485.0 422.8h1.3v1.3h-1.3zM237.2 424.7h1.3v1.3h-1.3zM51.4 425.7h1.3v1.3h-1.3zM558.7 421.1h1.3v1.3h-1.3zM209.0 360.4h1.3v1.3h-1.3zM294.2 408.2h1.3v1.3h-1.3zM111.8 424.2h1.3v1.3h-1.3zM134.9 418.2h1.3v1.3h-1.3zM448.0 399.5h1.3v1.3h-1.3zM384.7 394.4h1.3v1.3h-1.3zM201.3 369.8h1.3v1.3h-1.3zM135.8 421.7h1.3v1.3h-1.3zM142.4 386.6h1.3v1.3h-1.3zM390.4 405.1h1.3v1.3h-1.3zM52.7 406.8h1.3v1.3h-1.3zM189.9 412.5h1.3v1.3h-1.3zM553.6 419.1h1.3v1.3h-1.3zM339.0 423.5h1.3v1.3h-1.3zM517.1 415.9h1.3v1.3h-1.3zM417.4 398.9h1.3v1.3h-1.3zM94.2 424.1h1.3v1.3h-1.3zM445.1 423.6h1.3v1.3h-1.3zM194.7 416.9h1.3v1.3h-1.3zM480.6 417.0h1.3v1.3h-1.3zM71.5 421.5h1.3v1.3h-1.3zM444.6 380.1h1.3v1.3h-1.3zM79.5 402.0h1.3v1.3h-1.3zM106.8 415.9h1.3v1.3h-1.3zM359.5 395.2h1.3v1.3h-1.3zM311.7 398.9h1.3v1.3h-1.3zM602.2 423.5h1.3v1.3h-1.3zM290.0 419.7h1.3v1.3h-1.3zM250.8 423.6h1.3v1.3h-1.3zM181.2 398.8h1.3v1.3h-1.3zM310.0 397.5h1.3v1.3h-1.3zM354.4 424.1h1.3v1.3h-1.3zM458.1 420.6h1.3v1.3h-1.3zM130.8 385.6h1.3v1.3h-1.3zM71.4 422.6h1.3v1.3h-1.3zM113.2 386.6h1.3v1.3h-1.3zM258.8 424.5h1.3v1.3h-1.3zM484.4 414.8h1.3v1.3h-1.3zM314.5 332.8h1.3v1.3h-1.3zM437.6 423.5h1.3v1.3h-1.3zM487.2 375.8h1.3v1.3h-1.3zM459.1 414.2h1.3v1.3h-1.3zM165.0 424.8h1.3v1.3h-1.3zM252.3 409.8h1.3v1.3h-1.3zM407.5 408.5h1.3v1.3h-1.3zM354.7 418.0h1.3v1.3h-1.3zM454.6 412.7h1.3v1.3h-1.3zM214.1 407.4h1.3v1.3h-1.3zM197.5 396.3h1.3v1.3h-1.3zM275.7 408.5h1.3v1.3h-1.3zM342.2 413.4h1.3v1.3h-1.3zM323.2 420.1h1.3v1.3h-1.3zM265.9 417.0h1.3v1.3h-1.3zM171.8 393.7h1.3v1.3h-1.3zM212.3 388.5h1.3v1.3h-1.3zM63.4 415.0h1.3v1.3h-1.3zM541.4 407.8h1.3v1.3h-1.3zM110.6 415.9h1.3v1.3h-1.3zM345.3 393.4h1.3v1.3h-1.3zM345.0 418.2h1.3v1.3h-1.3zM315.3 370.9h1.3v1.3h-1.3zM141.1 416.7h1.3v1.3h-1.3zM307.9 363.8h1.3v1.3h-1.3zM231.8 276.7h1.3v1.3h-1.3zM307.4 294.0h1.3v1.3h-1.3zM340.9 310.6h1.3v1.3h-1.3zM164.3 317.4h1.3v1.3h-1.3z"/>
<path fill="#4ab8d8" fill-opacity="0.9" d="M521.8 447.1h1.3v1.3h-1.3zM289.5 443.6h1.3v1.3h-1.3zM55.9 440.3h1.3v1.3h-1.3zM50.2 430.4h1.3v1.3h-1.3zM249.5 433.9h1.3v1.3h-1.3zM160.0 432.6h1.3v1.3h-1.3zM421.7 445.0h1.3v1.3h-1.3zM187.8 435.2h1.3v1.3h-1.3zM242.7 441.7h1.3v1.3h-1.3zM442.4 436.9h1.3v1.3h-1.3zM119.1 442.1h1.3v1.3h-1.3zM301.2 426.7h1.3v1.3h-1.3zM115.2 444.0h1.3v1.3h-1.3zM573.7 434.9h1.3v1.3h-1.3zM276.9 429.5h1.3v1.3h-1.3zM545.2 430.0h1.3v1.3h-1.3zM77.0 444.3h1.3v1.3h-1.3zM283.1 447.5h1.3v1.3h-1.3zM204.3 438.7h1.3v1.3h-1.3zM329.3 450.2h1.3v1.3h-1.3zM101.2 440.6h1.3v1.3h-1.3zM311.2 442.7h1.3v1.3h-1.3zM478.0 424.6h1.3v1.3h-1.3zM148.1 437.3h1.3v1.3h-1.3zM173.1 440.9h1.3v1.3h-1.3zM251.1 435.5h1.3v1.3h-1.3zM219.2 425.3h1.3v1.3h-1.3zM272.1 433.1h1.3v1.3h-1.3zM372.8 441.7h1.3v1.3h-1.3zM266.8 446.0h1.3v1.3h-1.3zM319.7 444.2h1.3v1.3h-1.3zM497.5 444.5h1.3v1.3h-1.3zM461.7 437.9h1.3v1.3h-1.3zM165.7 433.4h1.3v1.3h-1.3zM473.0 433.4h1.3v1.3h-1.3zM127.7 445.7h1.3v1.3h-1.3zM358.9 435.9h1.3v1.3h-1.3zM126.3 434.1h1.3v1.3h-1.3zM126.8 432.5h1.3v1.3h-1.3zM381.5 429.9h1.3v1.3h-1.3zM397.2 438.7h1.3v1.3h-1.3zM509.7 438.5h1.3v1.3h-1.3zM447.6 434.3h1.3v1.3h-1.3zM63.9 424.9h1.3v1.3h-1.3zM494.2 428.2h1.3v1.3h-1.3zM153.1 436.6h1.3v1.3h-1.3zM53.1 438.7h1.3v1.3h-1.3zM169.1 441.4h1.3v1.3h-1.3zM59.5 448.5h1.3v1.3h-1.3zM88.0 447.1h1.3v1.3h-1.3zM142.2 443.0h1.3v1.3h-1.3zM315.9 442.9h1.3v1.3h-1.3zM496.7 447.8h1.3v1.3h-1.3zM132.2 438.1h1.3v1.3h-1.3zM165.2 442.9h1.3v1.3h-1.3zM196.8 439.9h1.3v1.3h-1.3zM182.1 425.3h1.3v1.3h-1.3zM271.3 437.1h1.3v1.3h-1.3zM59.8 430.8h1.3v1.3h-1.3zM173.2 431.1h1.3v1.3h-1.3zM450.8 436.5h1.3v1.3h-1.3zM138.8 437.9h1.3v1.3h-1.3zM165.9 441.0h1.3v1.3h-1.3zM546.4 443.0h1.3v1.3h-1.3zM436.9 440.4h1.3v1.3h-1.3zM401.6 438.8h1.3v1.3h-1.3zM44.5 443.6h1.3v1.3h-1.3zM415.8 446.9h1.3v1.3h-1.3zM524.6 427.7h1.3v1.3h-1.3zM160.4 439.5h1.3v1.3h-1.3zM358.9 444.5h1.3v1.3h-1.3zM135.6 435.2h1.3v1.3h-1.3zM161.0 436.2h1.3v1.3h-1.3zM315.6 428.4h1.3v1.3h-1.3zM53.7 445.0h1.3v1.3h-1.3zM67.1 435.4h1.3v1.3h-1.3zM376.4 429.9h1.3v1.3h-1.3zM233.1 444.3h1.3v1.3h-1.3zM398.1 440.5h1.3v1.3h-1.3zM340.5 433.4h1.3v1.3h-1.3zM471.4 435.9h1.3v1.3h-1.3zM497.3 428.3h1.3v1.3h-1.3zM582.3 443.7h1.3v1.3h-1.3zM95.4 448.0h1.3v1.3h-1.3zM346.4 442.4h1.3v1.3h-1.3zM329.1 429.7h1.3v1.3h-1.3zM490.9 444.4h1.3v1.3h-1.3zM48.5 447.4h1.3v1.3h-1.3zM66.1 439.5h1.3v1.3h-1.3zM236.8 425.5h1.3v1.3h-1.3zM360.5 438.8h1.3v1.3h-1.3zM338.1 439.6h1.3v1.3h-1.3zM452.6 438.2h1.3v1.3h-1.3zM399.3 435.7h1.3v1.3h-1.3zM578.8 440.6h1.3v1.3h-1.3zM51.6 433.7h1.3v1.3h-1.3zM124.4 431.6h1.3v1.3h-1.3zM494.3 433.5h1.3v1.3h-1.3zM56.9 441.7h1.3v1.3h-1.3zM413.1 446.9h1.3v1.3h-1.3zM458.4 429.6h1.3v1.3h-1.3zM232.7 429.1h1.3v1.3h-1.3zM114.9 448.4h1.3v1.3h-1.3zM623.1 431.3h1.3v1.3h-1.3zM271.7 439.9h1.3v1.3h-1.3zM353.8 447.0h1.3v1.3h-1.3zM367.1 425.0h1.3v1.3h-1.3zM280.6 444.3h1.3v1.3h-1.3zM286.8 442.9h1.3v1.3h-1.3zM111.2 438.5h1.3v1.3h-1.3zM584.5 438.7h1.3v1.3h-1.3zM515.7 446.2h1.3v1.3h-1.3zM364.9 425.7h1.3v1.3h-1.3zM390.6 449.3h1.3v1.3h-1.3zM230.8 431.7h1.3v1.3h-1.3zM82.4 447.4h1.3v1.3h-1.3zM230.1 449.7h1.3v1.3h-1.3zM275.8 437.9h1.3v1.3h-1.3zM53.1 444.4h1.3v1.3h-1.3zM93.8 445.1h1.3v1.3h-1.3zM363.9 428.8h1.3v1.3h-1.3zM301.5 443.9h1.3v1.3h-1.3zM563.2 430.9h1.3v1.3h-1.3zM103.8 439.6h1.3v1.3h-1.3zM105.5 432.1h1.3v1.3h-1.3zM215.4 445.4h1.3v1.3h-1.3zM314.0 434.9h1.3v1.3h-1.3zM228.5 433.5h1.3v1.3h-1.3zM96.3 437.3h1.3v1.3h-1.3zM185.1 437.0h1.3v1.3h-1.3zM355.4 440.5h1.3v1.3h-1.3zM388.9 427.7h1.3v1.3h-1.3zM152.0 434.1h1.3v1.3h-1.3zM163.5 431.6h1.3v1.3h-1.3zM102.8 447.5h1.3v1.3h-1.3zM337.9 432.3h1.3v1.3h-1.3zM70.1 425.2h1.3v1.3h-1.3zM285.5 440.5h1.3v1.3h-1.3zM446.0 435.4h1.3v1.3h-1.3zM362.5 425.5h1.3v1.3h-1.3zM562.9 430.9h1.3v1.3h-1.3zM209.1 437.8h1.3v1.3h-1.3zM236.8 429.4h1.3v1.3h-1.3zM457.9 446.2h1.3v1.3h-1.3zM395.1 441.4h1.3v1.3h-1.3zM106.8 431.5h1.3v1.3h-1.3zM181.8 441.6h1.3v1.3h-1.3zM569.0 443.2h1.3v1.3h-1.3zM287.8 438.9h1.3v1.3h-1.3zM278.6 427.8h1.3v1.3h-1.3zM275.7 425.2h1.3v1.3h-1.3zM184.8 449.6h1.3v1.3h-1.3zM105.0 435.0h1.3v1.3h-1.3zM355.5 442.7h1.3v1.3h-1.3zM120.5 449.7h1.3v1.3h-1.3zM474.0 429.0h1.3v1.3h-1.3zM138.9 443.3h1.3v1.3h-1.3zM290.5 431.7h1.3v1.3h-1.3zM432.4 426.2h1.3v1.3h-1.3zM273.1 441.5h1.3v1.3h-1.3zM319.2 430.4h1.3v1.3h-1.3zM240.1 434.1h1.3v1.3h-1.3zM544.3 432.4h1.3v1.3h-1.3zM596.0 446.7h1.3v1.3h-1.3zM348.6 425.5h1.3v1.3h-1.3zM150.7 445.7h1.3v1.3h-1.3zM90.4 449.8h1.3v1.3h-1.3zM341.0 425.3h1.3v1.3h-1.3zM190.6 437.4h1.3v1.3h-1.3zM288.0 437.0h1.3v1.3h-1.3zM243.4 424.2h1.3v1.3h-1.3zM168.8 449.9h1.3v1.3h-1.3zM101.4 439.2h1.3v1.3h-1.3zM406.1 449.9h1.3v1.3h-1.3zM280.8 434.0h1.3v1.3h-1.3zM83.9 440.4h1.3v1.3h-1.3zM348.0 447.6h1.3v1.3h-1.3zM413.7 434.6h1.3v1.3h-1.3zM513.0 427.3h1.3v1.3h-1.3zM455.1 426.2h1.3v1.3h-1.3zM196.6 440.3h1.3v1.3h-1.3zM226.6 434.1h1.3v1.3h-1.3zM248.8 426.0h1.3v1.3h-1.3zM61.4 435.8h1.3v1.3h-1.3zM429.3 433.7h1.3v1.3h-1.3zM373.6 425.5h1.3v1.3h-1.3zM52.0 427.4h1.3v1.3h-1.3zM80.3 449.4h1.3v1.3h-1.3zM190.8 444.3h1.3v1.3h-1.3zM479.7 434.4h1.3v1.3h-1.3zM244.9 425.3h1.3v1.3h-1.3zM196.4 440.2h1.3v1.3h-1.3zM257.6 445.7h1.3v1.3h-1.3zM622.6 443.2h1.3v1.3h-1.3zM144.4 439.9h1.3v1.3h-1.3zM83.1 446.2h1.3v1.3h-1.3zM126.2 431.9h1.3v1.3h-1.3zM402.7 429.3h1.3v1.3h-1.3zM357.5 428.8h1.3v1.3h-1.3zM551.6 425.7h1.3v1.3h-1.3zM545.1 450.2h1.3v1.3h-1.3zM103.8 430.1h1.3v1.3h-1.3zM237.5 432.4h1.3v1.3h-1.3zM214.0 436.1h1.3v1.3h-1.3zM127.2 427.0h1.3v1.3h-1.3zM193.4 432.7h1.3v1.3h-1.3zM118.8 430.2h1.3v1.3h-1.3zM233.0 442.9h1.3v1.3h-1.3zM548.2 447.4h1.3v1.3h-1.3zM143.6 430.6h1.3v1.3h-1.3zM99.9 448.0h1.3v1.3h-1.3zM196.2 427.4h1.3v1.3h-1.3zM296.7 449.4h1.3v1.3h-1.3zM254.3 429.7h1.3v1.3h-1.3zM372.6 446.9h1.3v1.3h-1.3zM281.8 442.9h1.3v1.3h-1.3zM501.1 441.7h1.3v1.3h-1.3zM218.2 433.6h1.3v1.3h-1.3zM341.0 426.2h1.3v1.3h-1.3zM202.1 447.5h1.3v1.3h-1.3zM140.3 424.4h1.3v1.3h-1.3zM341.3 428.3h1.3v1.3h-1.3zM119.8 430.9h1.3v1.3h-1.3zM233.9 442.7h1.3v1.3h-1.3zM319.5 426.4h1.3v1.3h-1.3zM129.4 433.5h1.3v1.3h-1.3zM275.1 444.6h1.3v1.3h-1.3zM509.3 439.5h1.3v1.3h-1.3zM165.1 431.2h1.3v1.3h-1.3zM98.5 444.4h1.3v1.3h-1.3zM275.7 435.2h1.3v1.3h-1.3zM435.4 447.4h1.3v1.3h-1.3zM86.0 435.0h1.3v1.3h-1.3zM299.5 439.3h1.3v1.3h-1.3zM149.7 434.8h1.3v1.3h-1.3zM379.4 443.7h1.3v1.3h-1.3zM238.7 438.6h1.3v1.3h-1.3zM171.5 446.1h1.3v1.3h-1.3zM257.5 427.0h1.3v1.3h-1.3zM189.7 438.7h1.3v1.3h-1.3zM376.2 449.1h1.3v1.3h-1.3zM84.3 432.2h1.3v1.3h-1.3zM551.1 448.5h1.3v1.3h-1.3zM386.0 444.4h1.3v1.3h-1.3zM70.5 449.3h1.3v1.3h-1.3zM216.2 444.1h1.3v1.3h-1.3zM158.5 428.9h1.3v1.3h-1.3zM324.0 441.2h1.3v1.3h-1.3zM448.3 435.6h1.3v1.3h-1.3zM161.4 432.7h1.3v1.3h-1.3zM373.1 447.6h1.3v1.3h-1.3zM250.4 428.2h1.3v1.3h-1.3zM51.3 427.6h1.3v1.3h-1.3zM230.0 431.9h1.3v1.3h-1.3zM228.3 441.1h1.3v1.3h-1.3zM49.5 449.4h1.3v1.3h-1.3zM381.0 430.1h1.3v1.3h-1.3zM238.4 429.8h1.3v1.3h-1.3zM346.3 430.1h1.3v1.3h-1.3zM178.4 450.2h1.3v1.3h-1.3zM203.7 430.3h1.3v1.3h-1.3zM437.4 431.1h1.3v1.3h-1.3zM457.5 436.3h1.3v1.3h-1.3zM165.8 441.3h1.3v1.3h-1.3zM102.8 431.2h1.3v1.3h-1.3zM401.0 431.1h1.3v1.3h-1.3zM115.7 446.4h1.3v1.3h-1.3zM103.1 436.8h1.3v1.3h-1.3zM210.6 425.7h1.3v1.3h-1.3zM218.8 432.1h1.3v1.3h-1.3zM390.8 425.5h1.3v1.3h-1.3zM635.6 441.6h1.3v1.3h-1.3zM242.1 439.0h1.3v1.3h-1.3zM599.5 428.4h1.3v1.3h-1.3zM234.7 426.8h1.3v1.3h-1.3zM212.0 447.2h1.3v1.3h-1.3zM270.7 445.5h1.3v1.3h-1.3zM198.2 438.6h1.3v1.3h-1.3zM232.2 430.0h1.3v1.3h-1.3zM491.7 426.3h1.3v1.3h-1.3zM337.8 446.7h1.3v1.3h-1.3zM104.4 427.1h1.3v1.3h-1.3zM64.2 444.0h1.3v1.3h-1.3zM260.4 432.9h1.3v1.3h-1.3zM162.4 439.1h1.3v1.3h-1.3zM483.6 443.1h1.3v1.3h-1.3zM116.2 436.4h1.3v1.3h-1.3zM151.4 447.7h1.3v1.3h-1.3zM121.7 430.3h1.3v1.3h-1.3zM252.6 425.2h1.3v1.3h-1.3zM116.0 430.0h1.3v1.3h-1.3zM105.3 447.5h1.3v1.3h-1.3zM239.9 439.5h1.3v1.3h-1.3zM508.2 425.9h1.3v1.3h-1.3zM281.4 437.9h1.3v1.3h-1.3zM546.4 436.0h1.3v1.3h-1.3zM59.0 448.2h1.3v1.3h-1.3zM94.4 431.2h1.3v1.3h-1.3zM418.5 426.1h1.3v1.3h-1.3zM314.9 429.0h1.3v1.3h-1.3zM213.8 426.1h1.3v1.3h-1.3zM210.9 446.7h1.3v1.3h-1.3zM173.3 426.8h1.3v1.3h-1.3zM455.0 446.8h1.3v1.3h-1.3zM45.4 448.7h1.3v1.3h-1.3zM496.4 432.1h1.3v1.3h-1.3zM348.6 446.4h1.3v1.3h-1.3zM124.8 439.3h1.3v1.3h-1.3zM208.1 438.2h1.3v1.3h-1.3zM444.3 427.0h1.3v1.3h-1.3zM360.0 424.4h1.3v1.3h-1.3zM176.6 441.7h1.3v1.3h-1.3zM237.3 439.3h1.3v1.3h-1.3zM64.8 437.6h1.3v1.3h-1.3zM230.1 444.8h1.3v1.3h-1.3zM386.9 430.0h1.3v1.3h-1.3zM147.2 428.7h1.3v1.3h-1.3zM116.6 447.4h1.3v1.3h-1.3zM362.8 426.2h1.3v1.3h-1.3zM407.9 430.5h1.3v1.3h-1.3zM397.9 439.1h1.3v1.3h-1.3zM304.2 435.6h1.3v1.3h-1.3zM267.3 439.1h1.3v1.3h-1.3zM99.3 431.4h1.3v1.3h-1.3zM288.1 434.8h1.3v1.3h-1.3zM270.6 449.8h1.3v1.3h-1.3zM220.4 441.8h1.3v1.3h-1.3zM79.5 428.4h1.3v1.3h-1.3zM192.6 432.0h1.3v1.3h-1.3zM283.3 429.4h1.3v1.3h-1.3zM114.2 424.5h1.3v1.3h-1.3zM486.2 446.4h1.3v1.3h-1.3zM80.8 448.4h1.3v1.3h-1.3zM105.1 439.2h1.3v1.3h-1.3zM197.9 431.2h1.3v1.3h-1.3zM118.7 441.3h1.3v1.3h-1.3zM398.1 438.8h1.3v1.3h-1.3zM547.0 431.4h1.3v1.3h-1.3zM418.6 439.5h1.3v1.3h-1.3zM255.5 447.0h1.3v1.3h-1.3zM390.4 442.2h1.3v1.3h-1.3zM362.4 434.9h1.3v1.3h-1.3zM214.0 446.2h1.3v1.3h-1.3zM205.6 426.5h1.3v1.3h-1.3zM145.8 446.8h1.3v1.3h-1.3zM175.7 439.9h1.3v1.3h-1.3zM513.7 437.8h1.3v1.3h-1.3zM288.8 426.7h1.3v1.3h-1.3zM368.6 440.3h1.3v1.3h-1.3zM211.5 427.1h1.3v1.3h-1.3zM266.0 438.2h1.3v1.3h-1.3zM369.5 445.6h1.3v1.3h-1.3zM251.6 436.0h1.3v1.3h-1.3zM44.8 438.9h1.3v1.3h-1.3zM86.0 444.7h1.3v1.3h-1.3zM245.7 442.6h1.3v1.3h-1.3zM216.8 429.6h1.3v1.3h-1.3zM113.6 445.9h1.3v1.3h-1.3zM203.2 428.8h1.3v1.3h-1.3zM406.0 443.9h1.3v1.3h-1.3zM254.6 424.6h1.3v1.3h-1.3zM201.9 447.2h1.3v1.3h-1.3zM447.7 427.0h1.3v1.3h-1.3zM227.3 445.0h1.3v1.3h-1.3zM218.0 448.0h1.3v1.3h-1.3zM422.5 445.4h1.3v1.3h-1.3zM196.8 433.8h1.3v1.3h-1.3zM450.2 445.5h1.3v1.3h-1.3zM584.6 445.7h1.3v1.3h-1.3zM193.1 437.8h1.3v1.3h-1.3zM69.3 449.7h1.3v1.3h-1.3zM240.2 434.5h1.3v1.3h-1.3zM527.5 442.5h1.3v1.3h-1.3zM110.5 429.5h1.3v1.3h-1.3zM296.3 433.0h1.3v1.3h-1.3zM241.0 445.9h1.3v1.3h-1.3zM292.6 440.2h1.3v1.3h-1.3zM384.8 439.7h1.3v1.3h-1.3zM538.8 441.6h1.3v1.3h-1.3zM397.9 443.6h1.3v1.3h-1.3zM103.7 441.8h1.3v1.3h-1.3zM295.7 447.6h1.3v1.3h-1.3zM239.8 430.4h1.3v1.3h-1.3zM472.6 441.3h1.3v1.3h-1.3zM138.5 438.2h1.3v1.3h-1.3zM546.2 441.8h1.3v1.3h-1.3zM472.7 427.8h1.3v1.3h-1.3zM267.8 427.1h1.3v1.3h-1.3zM539.3 448.0h1.3v1.3h-1.3zM164.2 449.2h1.3v1.3h-1.3zM386.4 439.5h1.3v1.3h-1.3zM388.4 426.2h1.3v1.3h-1.3zM107.1 432.7h1.3v1.3h-1.3zM75.4 444.0h1.3v1.3h-1.3zM525.6 436.4h1.3v1.3h-1.3zM520.4 436.5h1.3v1.3h-1.3zM289.8 443.0h1.3v1.3h-1.3zM464.7 431.1h1.3v1.3h-1.3zM467.3 435.5h1.3v1.3h-1.3zM637.9 426.8h1.3v1.3h-1.3zM485.5 428.1h1.3v1.3h-1.3zM135.5 431.6h1.3v1.3h-1.3zM71.4 448.2h1.3v1.3h-1.3zM396.3 443.4h1.3v1.3h-1.3zM320.5 426.5h1.3v1.3h-1.3zM318.5 434.5h1.3v1.3h-1.3zM554.8 447.0h1.3v1.3h-1.3zM257.3 439.2h1.3v1.3h-1.3zM180.7 443.1h1.3v1.3h-1.3zM78.3 442.4h1.3v1.3h-1.3zM460.5 434.6h1.3v1.3h-1.3zM229.0 432.2h1.3v1.3h-1.3zM485.6 438.1h1.3v1.3h-1.3zM220.4 438.1h1.3v1.3h-1.3zM424.9 427.8h1.3v1.3h-1.3zM152.2 431.0h1.3v1.3h-1.3zM47.2 441.1h1.3v1.3h-1.3zM413.4 428.2h1.3v1.3h-1.3zM247.2 445.6h1.3v1.3h-1.3zM554.6 436.1h1.3v1.3h-1.3zM200.3 425.5h1.3v1.3h-1.3zM206.7 440.8h1.3v1.3h-1.3zM202.3 449.7h1.3v1.3h-1.3zM201.0 435.0h1.3v1.3h-1.3zM189.9 433.2h1.3v1.3h-1.3zM102.2 448.4h1.3v1.3h-1.3zM474.6 446.5h1.3v1.3h-1.3zM91.6 429.4h1.3v1.3h-1.3zM373.1 436.7h1.3v1.3h-1.3zM296.5 428.1h1.3v1.3h-1.3zM166.7 449.6h1.3v1.3h-1.3zM375.9 446.4h1.3v1.3h-1.3zM157.9 434.8h1.3v1.3h-1.3zM309.0 447.8h1.3v1.3h-1.3zM485.0 443.6h1.3v1.3h-1.3zM589.2 450.1h1.3v1.3h-1.3zM269.1 439.0h1.3v1.3h-1.3zM190.2 424.6h1.3v1.3h-1.3zM173.0 432.1h1.3v1.3h-1.3zM110.0 438.8h1.3v1.3h-1.3zM238.9 446.0h1.3v1.3h-1.3zM292.5 441.8h1.3v1.3h-1.3zM536.5 447.6h1.3v1.3h-1.3zM431.7 426.3h1.3v1.3h-1.3zM108.4 432.8h1.3v1.3h-1.3zM272.7 434.3h1.3v1.3h-1.3zM512.9 437.9h1.3v1.3h-1.3zM305.5 438.1h1.3v1.3h-1.3zM246.8 433.8h1.3v1.3h-1.3zM500.6 432.2h1.3v1.3h-1.3zM169.3 424.6h1.3v1.3h-1.3zM83.8 437.8h1.3v1.3h-1.3zM44.3 449.3h1.3v1.3h-1.3zM310.6 436.5h1.3v1.3h-1.3zM435.0 427.9h1.3v1.3h-1.3zM264.9 436.1h1.3v1.3h-1.3zM206.2 450.1h1.3v1.3h-1.3zM197.9 427.2h1.3v1.3h-1.3zM353.3 442.4h1.3v1.3h-1.3zM110.9 440.0h1.3v1.3h-1.3zM367.9 438.8h1.3v1.3h-1.3zM476.9 449.3h1.3v1.3h-1.3zM433.9 443.3h1.3v1.3h-1.3zM55.6 441.1h1.3v1.3h-1.3zM85.2 426.7h1.3v1.3h-1.3zM547.8 439.3h1.3v1.3h-1.3zM112.4 429.1h1.3v1.3h-1.3zM118.2 447.8h1.3v1.3h-1.3zM362.9 427.9h1.3v1.3h-1.3zM117.9 450.2h1.3v1.3h-1.3zM508.1 441.8h1.3v1.3h-1.3zM80.7 446.9h1.3v1.3h-1.3zM478.0 430.2h1.3v1.3h-1.3zM251.8 430.8h1.3v1.3h-1.3zM234.8 431.0h1.3v1.3h-1.3zM398.3 435.4h1.3v1.3h-1.3zM90.9 442.1h1.3v1.3h-1.3zM119.7 431.5h1.3v1.3h-1.3zM170.9 428.7h1.3v1.3h-1.3zM426.8 435.5h1.3v1.3h-1.3zM287.8 446.3h1.3v1.3h-1.3zM206.9 448.7h1.3v1.3h-1.3zM230.5 437.7h1.3v1.3h-1.3zM438.1 429.7h1.3v1.3h-1.3zM270.2 424.7h1.3v1.3h-1.3zM534.0 447.3h1.3v1.3h-1.3zM181.0 446.8h1.3v1.3h-1.3zM55.7 450.1h1.3v1.3h-1.3zM203.7 444.9h1.3v1.3h-1.3zM44.9 443.9h1.3v1.3h-1.3zM244.1 440.8h1.3v1.3h-1.3zM244.0 428.4h1.3v1.3h-1.3zM500.5 450.1h1.3v1.3h-1.3zM187.8 438.3h1.3v1.3h-1.3zM170.5 427.0h1.3v1.3h-1.3zM119.0 435.6h1.3v1.3h-1.3zM116.0 434.1h1.3v1.3h-1.3zM427.4 448.4h1.3v1.3h-1.3zM53.3 427.7h1.3v1.3h-1.3zM603.8 430.2h1.3v1.3h-1.3zM149.7 445.0h1.3v1.3h-1.3zM398.9 444.1h1.3v1.3h-1.3zM279.7 429.4h1.3v1.3h-1.3zM157.5 443.0h1.3v1.3h-1.3zM509.3 436.3h1.3v1.3h-1.3zM148.2 446.4h1.3v1.3h-1.3zM91.0 427.1h1.3v1.3h-1.3zM449.6 444.5h1.3v1.3h-1.3zM409.7 449.5h1.3v1.3h-1.3zM101.5 434.5h1.3v1.3h-1.3zM93.1 444.0h1.3v1.3h-1.3zM408.2 441.4h1.3v1.3h-1.3zM305.4 428.3h1.3v1.3h-1.3zM177.4 438.8h1.3v1.3h-1.3zM186.5 444.5h1.3v1.3h-1.3zM482.8 439.1h1.3v1.3h-1.3zM538.7 432.8h1.3v1.3h-1.3zM320.2 449.5h1.3v1.3h-1.3zM334.5 442.2h1.3v1.3h-1.3zM108.5 448.4h1.3v1.3h-1.3zM149.7 441.1h1.3v1.3h-1.3zM353.0 440.1h1.3v1.3h-1.3zM126.0 435.6h1.3v1.3h-1.3zM261.2 430.9h1.3v1.3h-1.3zM46.6 444.8h1.3v1.3h-1.3zM271.8 440.2h1.3v1.3h-1.3zM440.8 428.6h1.3v1.3h-1.3zM250.4 425.2h1.3v1.3h-1.3zM374.2 448.5h1.3v1.3h-1.3zM504.7 433.5h1.3v1.3h-1.3zM219.0 440.6h1.3v1.3h-1.3zM214.0 444.4h1.3v1.3h-1.3zM211.1 424.6h1.3v1.3h-1.3zM114.9 429.5h1.3v1.3h-1.3zM89.9 429.8h1.3v1.3h-1.3zM116.0 440.9h1.3v1.3h-1.3zM203.0 437.3h1.3v1.3h-1.3zM74.2 427.4h1.3v1.3h-1.3zM136.8 438.0h1.3v1.3h-1.3zM110.1 426.2h1.3v1.3h-1.3zM491.4 434.3h1.3v1.3h-1.3zM411.5 427.5h1.3v1.3h-1.3zM145.3 446.6h1.3v1.3h-1.3zM360.5 438.2h1.3v1.3h-1.3zM334.4 431.5h1.3v1.3h-1.3zM376.2 428.5h1.3v1.3h-1.3zM284.0 443.5h1.3v1.3h-1.3zM129.2 425.0h1.3v1.3h-1.3zM108.2 436.7h1.3v1.3h-1.3zM529.9 442.9h1.3v1.3h-1.3zM50.6 295.1h1.3v1.3h-1.3zM508.1 422.8h1.3v1.3h-1.3zM181.6 344.6h1.3v1.3h-1.3zM72.9 417.8h1.3v1.3h-1.3zM263.0 423.4h1.3v1.3h-1.3zM362.8 424.8h1.3v1.3h-1.3zM402.4 422.7h1.3v1.3h-1.3zM117.9 413.5h1.3v1.3h-1.3zM206.5 424.2h1.3v1.3h-1.3zM120.4 317.7h1.3v1.3h-1.3zM414.3 380.9h1.3v1.3h-1.3zM123.6 418.3h1.3v1.3h-1.3zM574.5 395.3h1.3v1.3h-1.3zM206.9 425.6h1.3v1.3h-1.3zM391.5 422.2h1.3v1.3h-1.3zM419.0 425.7h1.3v1.3h-1.3zM363.6 379.8h1.3v1.3h-1.3zM447.7 418.0h1.3v1.3h-1.3zM198.7 422.3h1.3v1.3h-1.3zM403.1 401.1h1.3v1.3h-1.3zM312.4 399.8h1.3v1.3h-1.3zM438.7 289.5h1.3v1.3h-1.3zM242.3 398.6h1.3v1.3h-1.3zM55.9 386.8h1.3v1.3h-1.3zM332.7 414.1h1.3v1.3h-1.3zM201.9 415.2h1.3v1.3h-1.3zM181.6 402.1h1.3v1.3h-1.3zM263.5 404.2h1.3v1.3h-1.3zM196.9 369.1h1.3v1.3h-1.3zM58.7 394.6h1.3v1.3h-1.3zM252.0 390.3h1.3v1.3h-1.3zM142.5 389.9h1.3v1.3h-1.3zM107.3 377.5h1.3v1.3h-1.3zM62.8 416.6h1.3v1.3h-1.3zM363.8 399.3h1.3v1.3h-1.3zM44.7 406.3h1.3v1.3h-1.3zM429.5 419.0h1.3v1.3h-1.3zM97.4 405.7h1.3v1.3h-1.3zM412.9 388.1h1.3v1.3h-1.3zM65.5 404.2h1.3v1.3h-1.3zM416.0 369.4h1.3v1.3h-1.3zM145.2 421.7h1.3v1.3h-1.3zM543.2 344.9h1.3v1.3h-1.3zM545.1 406.4h1.3v1.3h-1.3zM48.0 421.0h1.3v1.3h-1.3zM585.9 400.4h1.3v1.3h-1.3zM155.9 399.0h1.3v1.3h-1.3zM330.5 420.8h1.3v1.3h-1.3zM518.9 392.4h1.3v1.3h-1.3zM348.0 362.3h1.3v1.3h-1.3zM150.6 387.8h1.3v1.3h-1.3zM245.5 401.6h1.3v1.3h-1.3zM328.2 387.2h1.3v1.3h-1.3zM485.9 408.8h1.3v1.3h-1.3zM343.0 420.5h1.3v1.3h-1.3zM208.8 423.7h1.3v1.3h-1.3zM96.5 414.5h1.3v1.3h-1.3zM524.6 362.1h1.3v1.3h-1.3zM427.8 387.8h1.3v1.3h-1.3zM366.5 391.7h1.3v1.3h-1.3zM123.2 388.7h1.3v1.3h-1.3zM395.2 366.2h1.3v1.3h-1.3zM348.3 387.1h1.3v1.3h-1.3zM57.2 400.7h1.3v1.3h-1.3zM448.2 424.6h1.3v1.3h-1.3zM218.6 365.4h1.3v1.3h-1.3zM208.9 392.9h1.3v1.3h-1.3zM201.0 401.4h1.3v1.3h-1.3zM91.0 411.8h1.3v1.3h-1.3zM346.7 389.7h1.3v1.3h-1.3zM86.6 359.6h1.3v1.3h-1.3zM374.4 389.6h1.3v1.3h-1.3zM181.4 416.5h1.3v1.3h-1.3zM361.9 412.8h1.3v1.3h-1.3zM89.5 412.0h1.3v1.3h-1.3zM515.4 327.4h1.3v1.3h-1.3zM620.1 415.8h1.3v1.3h-1.3zM573.4 367.5h1.3v1.3h-1.3zM443.4 331.5h1.3v1.3h-1.3zM420.1 408.5h1.3v1.3h-1.3zM48.7 362.5h1.3v1.3h-1.3zM448.9 393.2h1.3v1.3h-1.3zM164.1 423.4h1.3v1.3h-1.3zM140.8 423.9h1.3v1.3h-1.3zM457.5 317.6h1.3v1.3h-1.3zM244.9 413.0h1.3v1.3h-1.3zM80.0 378.3h1.3v1.3h-1.3zM91.2 413.5h1.3v1.3h-1.3zM373.3 412.0h1.3v1.3h-1.3zM215.1 407.7h1.3v1.3h-1.3zM130.7 405.5h1.3v1.3h-1.3zM79.9 403.8h1.3v1.3h-1.3zM590.9 421.3h1.3v1.3h-1.3zM133.8 393.1h1.3v1.3h-1.3zM511.1 408.8h1.3v1.3h-1.3zM292.5 408.9h1.3v1.3h-1.3zM125.4 415.6h1.3v1.3h-1.3zM490.0 412.3h1.3v1.3h-1.3zM229.2 390.6h1.3v1.3h-1.3zM373.6 413.9h1.3v1.3h-1.3zM298.2 391.2h1.3v1.3h-1.3zM326.1 415.1h1.3v1.3h-1.3zM447.3 386.2h1.3v1.3h-1.3zM112.8 423.1h1.3v1.3h-1.3zM156.9 419.5h1.3v1.3h-1.3zM195.5 412.8h1.3v1.3h-1.3zM199.0 421.0h1.3v1.3h-1.3zM308.8 390.6h1.3v1.3h-1.3zM316.4 392.4h1.3v1.3h-1.3zM439.0 411.7h1.3v1.3h-1.3zM273.7 379.3h1.3v1.3h-1.3zM173.3 416.8h1.3v1.3h-1.3zM58.5 389.5h1.3v1.3h-1.3zM427.0 309.3h1.3v1.3h-1.3zM133.6 408.6h1.3v1.3h-1.3zM118.8 415.8h1.3v1.3h-1.3zM400.5 399.1h1.3v1.3h-1.3zM172.8 370.3h1.3v1.3h-1.3zM245.0 400.5h1.3v1.3h-1.3zM169.1 405.0h1.3v1.3h-1.3zM540.3 414.5h1.3v1.3h-1.3zM63.2 394.4h1.3v1.3h-1.3zM351.0 387.3h1.3v1.3h-1.3zM388.3 405.8h1.3v1.3h-1.3zM70.2 403.9h1.3v1.3h-1.3zM258.3 398.8h1.3v1.3h-1.3zM277.7 419.4h1.3v1.3h-1.3zM167.3 400.7h1.3v1.3h-1.3zM144.1 384.3h1.3v1.3h-1.3zM56.9 425.3h1.3v1.3h-1.3zM452.1 392.7h1.3v1.3h-1.3zM574.6 425.5h1.3v1.3h-1.3zM338.0 369.5h1.3v1.3h-1.3zM89.9 409.6h1.3v1.3h-1.3zM477.8 418.1h1.3v1.3h-1.3zM466.2 389.2h1.3v1.3h-1.3zM414.9 355.6h1.3v1.3h-1.3zM252.8 351.3h1.3v1.3h-1.3zM324.8 390.3h1.3v1.3h-1.3zM448.7 376.2h1.3v1.3h-1.3zM63.0 361.1h1.3v1.3h-1.3zM103.6 406.3h1.3v1.3h-1.3zM126.3 423.0h1.3v1.3h-1.3zM297.5 390.5h1.3v1.3h-1.3zM377.5 400.7h1.3v1.3h-1.3zM470.6 409.3h1.3v1.3h-1.3zM379.6 389.0h1.3v1.3h-1.3zM100.5 422.7h1.3v1.3h-1.3zM579.6 359.5h1.3v1.3h-1.3zM574.8 382.6h1.3v1.3h-1.3zM361.7 413.1h1.3v1.3h-1.3zM230.4 407.2h1.3v1.3h-1.3zM303.2 410.3h1.3v1.3h-1.3zM480.6 405.2h1.3v1.3h-1.3zM348.8 391.9h1.3v1.3h-1.3zM221.7 323.3h1.3v1.3h-1.3zM171.3 326.0h1.3v1.3h-1.3zM138.1 418.7h1.3v1.3h-1.3zM69.3 403.1h1.3v1.3h-1.3zM151.3 403.5h1.3v1.3h-1.3zM318.6 352.4h1.3v1.3h-1.3zM113.2 397.4h1.3v1.3h-1.3zM98.3 393.2h1.3v1.3h-1.3zM156.7 414.3h1.3v1.3h-1.3zM545.1 387.8h1.3v1.3h-1.3zM218.5 409.0h1.3v1.3h-1.3zM517.0 361.4h1.3v1.3h-1.3zM275.6 395.7h1.3v1.3h-1.3zM456.4 402.2h1.3v1.3h-1.3zM143.1 368.9h1.3v1.3h-1.3zM632.8 366.7h1.3v1.3h-1.3zM167.8 328.6h1.3v1.3h-1.3zM143.3 381.0h1.3v1.3h-1.3zM120.1 425.7h1.3v1.3h-1.3zM335.1 423.1h1.3v1.3h-1.3zM565.7 383.9h1.3v1.3h-1.3zM369.6 347.9h1.3v1.3h-1.3zM179.6 413.8h1.3v1.3h-1.3zM244.3 396.1h1.3v1.3h-1.3zM555.6 399.2h1.3v1.3h-1.3zM357.7 367.1h1.3v1.3h-1.3zM474.3 417.4h1.3v1.3h-1.3zM405.1 385.9h1.3v1.3h-1.3zM509.0 414.7h1.3v1.3h-1.3zM247.0 394.6h1.3v1.3h-1.3zM507.3 405.6h1.3v1.3h-1.3zM204.1 403.5h1.3v1.3h-1.3zM171.0 416.5h1.3v1.3h-1.3zM498.7 355.4h1.3v1.3h-1.3zM48.8 400.6h1.3v1.3h-1.3zM113.1 394.7h1.3v1.3h-1.3zM458.7 404.5h1.3v1.3h-1.3zM428.9 350.6h1.3v1.3h-1.3zM589.4 372.4h1.3v1.3h-1.3zM197.1 369.1h1.3v1.3h-1.3zM291.2 389.6h1.3v1.3h-1.3zM176.9 403.7h1.3v1.3h-1.3zM469.7 367.6h1.3v1.3h-1.3zM456.0 399.2h1.3v1.3h-1.3zM332.8 407.5h1.3v1.3h-1.3zM553.6 416.7h1.3v1.3h-1.3zM202.6 375.7h1.3v1.3h-1.3zM380.5 411.3h1.3v1.3h-1.3zM46.3 422.2h1.3v1.3h-1.3zM553.5 422.4h1.3v1.3h-1.3zM463.4 327.0h1.3v1.3h-1.3zM240.3 387.1h1.3v1.3h-1.3zM253.8 423.4h1.3v1.3h-1.3zM126.7 413.6h1.3v1.3h-1.3zM52.3 405.7h1.3v1.3h-1.3zM126.2 407.2h1.3v1.3h-1.3zM238.7 421.6h1.3v1.3h-1.3zM425.5 274.5h1.3v1.3h-1.3zM235.3 309.3h1.3v1.3h-1.3zM470.1 414.0h1.3v1.3h-1.3zM490.9 280.8h1.3v1.3h-1.3zM109.8 366.6h1.3v1.3h-1.3zM82.1 377.7h1.3v1.3h-1.3zM419.8 416.1h1.3v1.3h-1.3zM376.4 406.8h1.3v1.3h-1.3zM218.1 356.7h1.3v1.3h-1.3zM113.0 419.5h1.3v1.3h-1.3zM121.3 347.0h1.3v1.3h-1.3zM84.5 352.5h1.3v1.3h-1.3zM52.8 404.0h1.3v1.3h-1.3zM465.5 405.8h1.3v1.3h-1.3zM247.9 421.8h1.3v1.3h-1.3zM107.2 421.8h1.3v1.3h-1.3zM69.8 359.7h1.3v1.3h-1.3zM446.4 367.8h1.3v1.3h-1.3zM93.8 372.2h1.3v1.3h-1.3zM180.4 329.1h1.3v1.3h-1.3zM72.4 382.0h1.3v1.3h-1.3zM133.8 393.4h1.3v1.3h-1.3zM186.7 391.0h1.3v1.3h-1.3zM81.1 418.4h1.3v1.3h-1.3zM362.2 378.6h1.3v1.3h-1.3zM215.3 404.7h1.3v1.3h-1.3zM46.4 418.4h1.3v1.3h-1.3zM488.8 361.9h1.3v1.3h-1.3zM404.6 403.7h1.3v1.3h-1.3zM358.8 406.6h1.3v1.3h-1.3zM464.4 359.2h1.3v1.3h-1.3zM237.5 416.5h1.3v1.3h-1.3zM497.9 404.7h1.3v1.3h-1.3zM541.0 388.2h1.3v1.3h-1.3zM260.2 421.0h1.3v1.3h-1.3zM517.9 385.1h1.3v1.3h-1.3zM47.6 411.5h1.3v1.3h-1.3zM153.1 412.9h1.3v1.3h-1.3zM447.7 421.5h1.3v1.3h-1.3zM468.0 417.0h1.3v1.3h-1.3zM206.8 425.1h1.3v1.3h-1.3zM382.9 420.9h1.3v1.3h-1.3zM133.0 415.5h1.3v1.3h-1.3zM154.6 423.3h1.3v1.3h-1.3zM384.8 424.6h1.3v1.3h-1.3zM151.1 419.3h1.3v1.3h-1.3zM142.1 377.1h1.3v1.3h-1.3zM542.1 410.9h1.3v1.3h-1.3zM251.7 377.2h1.3v1.3h-1.3zM491.2 422.6h1.3v1.3h-1.3zM166.5 380.7h1.3v1.3h-1.3zM139.2 418.4h1.3v1.3h-1.3zM332.2 424.6h1.3v1.3h-1.3zM165.5 380.6h1.3v1.3h-1.3zM473.4 393.9h1.3v1.3h-1.3zM364.7 368.8h1.3v1.3h-1.3zM445.6 344.5h1.3v1.3h-1.3zM346.7 380.0h1.3v1.3h-1.3zM299.6 401.1h1.3v1.3h-1.3zM180.3 410.2h1.3v1.3h-1.3zM566.9 382.9h1.3v1.3h-1.3zM283.1 403.2h1.3v1.3h-1.3zM257.6 324.6h1.3v1.3h-1.3zM126.3 399.4h1.3v1.3h-1.3zM413.3 398.7h1.3v1.3h-1.3zM456.1 422.9h1.3v1.3h-1.3zM606.6 405.0h1.3v1.3h-1.3zM51.6 379.2h1.3v1.3h-1.3zM89.2 402.0h1.3v1.3h-1.3zM580.4 391.4h1.3v1.3h-1.3zM535.8 403.6h1.3v1.3h-1.3zM172.7 356.1h1.3v1.3h-1.3zM302.7 418.1h1.3v1.3h-1.3zM307.7 339.4h1.3v1.3h-1.3zM302.6 425.9h1.3v1.3h-1.3zM544.1 421.4h1.3v1.3h-1.3zM369.0 414.7h1.3v1.3h-1.3zM111.8 424.9h1.3v1.3h-1.3zM100.5 409.6h1.3v1.3h-1.3zM154.9 411.3h1.3v1.3h-1.3zM112.7 400.8h1.3v1.3h-1.3zM417.4 412.0h1.3v1.3h-1.3zM369.5 407.9h1.3v1.3h-1.3zM99.1 399.9h1.3v1.3h-1.3zM290.5 290.3h1.3v1.3h-1.3zM279.4 382.0h1.3v1.3h-1.3zM425.4 418.9h1.3v1.3h-1.3zM151.7 419.2h1.3v1.3h-1.3zM56.2 384.0h1.3v1.3h-1.3zM573.3 422.9h1.3v1.3h-1.3zM135.8 378.4h1.3v1.3h-1.3zM154.3 402.7h1.3v1.3h-1.3zM200.0 317.4h1.3v1.3h-1.3zM459.9 324.5h1.3v1.3h-1.3zM332.9 408.9h1.3v1.3h-1.3zM216.6 423.5h1.3v1.3h-1.3zM321.0 354.0h1.3v1.3h-1.3zM236.4 399.9h1.3v1.3h-1.3zM437.6 424.5h1.3v1.3h-1.3zM369.1 408.8h1.3v1.3h-1.3zM383.2 419.0h1.3v1.3h-1.3zM82.0 406.6h1.3v1.3h-1.3zM278.8 302.5h1.3v1.3h-1.3zM80.5 408.0h1.3v1.3h-1.3zM178.0 417.8h1.3v1.3h-1.3zM51.8 344.7h1.3v1.3h-1.3zM344.9 398.6h1.3v1.3h-1.3zM261.2 425.5h1.3v1.3h-1.3zM116.2 413.1h1.3v1.3h-1.3zM347.6 425.5h1.3v1.3h-1.3zM350.5 328.3h1.3v1.3h-1.3zM364.8 382.1h1.3v1.3h-1.3zM69.7 360.3h1.3v1.3h-1.3zM208.4 405.6h1.3v1.3h-1.3zM618.6 413.1h1.3v1.3h-1.3zM235.2 417.4h1.3v1.3h-1.3zM74.7 422.5h1.3v1.3h-1.3zM118.8 418.2h1.3v1.3h-1.3zM399.4 384.3h1.3v1.3h-1.3zM84.2 415.4h1.3v1.3h-1.3zM200.8 382.0h1.3v1.3h-1.3zM411.8 394.9h1.3v1.3h-1.3zM371.3 379.3h1.3v1.3h-1.3zM344.4 391.3h1.3v1.3h-1.3zM402.3 382.9h1.3v1.3h-1.3zM540.6 311.2h1.3v1.3h-1.3zM614.0 422.5h1.3v1.3h-1.3zM181.1 345.5h1.3v1.3h-1.3zM322.9 383.4h1.3v1.3h-1.3zM207.4 400.3h1.3v1.3h-1.3zM322.8 360.5h1.3v1.3h-1.3zM227.9 412.0h1.3v1.3h-1.3zM48.2 418.3h1.3v1.3h-1.3zM488.6 379.0h1.3v1.3h-1.3zM565.8 381.2h1.3v1.3h-1.3zM312.3 349.9h1.3v1.3h-1.3zM370.6 411.0h1.3v1.3h-1.3zM80.6 415.0h1.3v1.3h-1.3zM473.8 386.3h1.3v1.3h-1.3zM54.1 364.9h1.3v1.3h-1.3zM386.7 425.3h1.3v1.3h-1.3zM368.8 417.8h1.3v1.3h-1.3zM86.3 424.7h1.3v1.3h-1.3zM115.4 403.7h1.3v1.3h-1.3zM285.4 413.8h1.3v1.3h-1.3zM79.2 378.1h1.3v1.3h-1.3zM487.9 399.6h1.3v1.3h-1.3zM499.1 396.7h1.3v1.3h-1.3zM335.4 300.3h1.3v1.3h-1.3zM408.0 334.8h1.3v1.3h-1.3zM76.6 252.1h1.3v1.3h-1.3zM480.5 314.6h1.3v1.3h-1.3zM125.0 267.2h1.3v1.3h-1.3zM286.6 312.9h1.3v1.3h-1.3zM250.0 459.2h1.3v1.3h-1.3zM62.7 459.2h1.3v1.3h-1.3zM55.4 459.5h1.3v1.3h-1.3zM276.6 458.9h1.3v1.3h-1.3zM216.7 459.3h1.3v1.3h-1.3zM248.5 458.8h1.3v1.3h-1.3zM360.1 460.3h1.3v1.3h-1.3zM584.8 459.1h1.3v1.3h-1.3zM47.1 459.6h1.3v1.3h-1.3zM205.4 458.8h1.3v1.3h-1.3zM249.5 460.3h1.3v1.3h-1.3zM202.7 459.2h1.3v1.3h-1.3zM78.8 459.4h1.3v1.3h-1.3zM446.8 460.6h1.3v1.3h-1.3zM365.5 459.6h1.3v1.3h-1.3zM467.0 459.4h1.3v1.3h-1.3zM392.9 460.5h1.3v1.3h-1.3zM431.3 460.0h1.3v1.3h-1.3zM207.4 459.8h1.3v1.3h-1.3zM116.3 459.9h1.3v1.3h-1.3zM115.7 458.6h1.3v1.3h-1.3zM223.6 459.0h1.3v1.3h-1.3zM212.0 459.7h1.3v1.3h-1.3zM356.1 459.7h1.3v1.3h-1.3zM174.6 458.7h1.3v1.3h-1.3zM59.1 459.2h1.3v1.3h-1.3zM64.6 458.7h1.3v1.3h-1.3zM483.8 460.4h1.3v1.3h-1.3zM343.1 460.1h1.3v1.3h-1.3zM268.4 460.3h1.3v1.3h-1.3zM535.3 458.9h1.3v1.3h-1.3zM182.4 460.3h1.3v1.3h-1.3zM418.3 458.6h1.3v1.3h-1.3zM258.8 460.5h1.3v1.3h-1.3zM70.4 459.7h1.3v1.3h-1.3zM184.6 459.7h1.3v1.3h-1.3zM472.5 459.9h1.3v1.3h-1.3zM396.8 459.9h1.3v1.3h-1.3zM277.4 459.8h1.3v1.3h-1.3zM346.4 460.1h1.3v1.3h-1.3zM378.1 459.4h1.3v1.3h-1.3zM69.2 459.7h1.3v1.3h-1.3zM63.2 459.9h1.3v1.3h-1.3zM59.0 459.6h1.3v1.3h-1.3zM280.3 458.8h1.3v1.3h-1.3zM258.3 458.9h1.3v1.3h-1.3zM436.7 459.1h1.3v1.3h-1.3zM99.9 459.2h1.3v1.3h-1.3zM197.3 460.6h1.3v1.3h-1.3zM355.0 460.4h1.3v1.3h-1.3zM105.0 460.0h1.3v1.3h-1.3zM483.1 460.6h1.3v1.3h-1.3zM427.8 460.5h1.3v1.3h-1.3zM136.1 460.0h1.3v1.3h-1.3zM395.4 459.9h1.3v1.3h-1.3zM98.3 459.0h1.3v1.3h-1.3zM208.7 460.5h1.3v1.3h-1.3zM80.5 459.0h1.3v1.3h-1.3zM182.5 460.6h1.3v1.3h-1.3zM416.6 460.4h1.3v1.3h-1.3zM74.2 460.2h1.3v1.3h-1.3zM443.7 459.9h1.3v1.3h-1.3zM297.8 460.2h1.3v1.3h-1.3zM222.6 458.9h1.3v1.3h-1.3zM367.8 459.4h1.3v1.3h-1.3zM141.9 460.3h1.3v1.3h-1.3zM379.0 459.3h1.3v1.3h-1.3zM263.3 459.3h1.3v1.3h-1.3zM197.3 459.6h1.3v1.3h-1.3zM131.4 460.3h1.3v1.3h-1.3zM403.3 459.7h1.3v1.3h-1.3zM369.9 460.0h1.3v1.3h-1.3zM150.8 460.4h1.3v1.3h-1.3zM231.3 459.4h1.3v1.3h-1.3zM162.7 460.6h1.3v1.3h-1.3zM324.9 459.7h1.3v1.3h-1.3zM172.1 459.2h1.3v1.3h-1.3zM286.4 458.9h1.3v1.3h-1.3zM437.5 460.6h1.3v1.3h-1.3zM72.4 458.7h1.3v1.3h-1.3z"/>
<path fill="#d0b858" fill-opacity="0.9" d="M272.1 438.4h1.3v1.3h-1.3zM562.6 443.3h1.3v1.3h-1.3zM286.4 446.5h1.3v1.3h-1.3zM495.7 449.6h1.3v1.3h-1.3zM282.1 448.0h1.3v1.3h-1.3zM327.6 444.2h1.3v1.3h-1.3zM252.2 446.0h1.3v1.3h-1.3zM343.7 436.5h1.3v1.3h-1.3zM469.4 432.0h1.3v1.3h-1.3zM429.0 434.2h1.3v1.3h-1.3zM342.9 427.4h1.3v1.3h-1.3zM261.1 444.6h1.3v1.3h-1.3zM445.9 430.1h1.3v1.3h-1.3zM319.6 438.1h1.3v1.3h-1.3zM273.9 433.4h1.3v1.3h-1.3zM431.7 443.6h1.3v1.3h-1.3zM225.1 441.1h1.3v1.3h-1.3zM123.3 446.1h1.3v1.3h-1.3zM318.7 433.8h1.3v1.3h-1.3zM591.7 449.6h1.3v1.3h-1.3zM112.8 447.0h1.3v1.3h-1.3zM310.7 432.5h1.3v1.3h-1.3zM303.7 447.0h1.3v1.3h-1.3zM591.4 446.2h1.3v1.3h-1.3zM515.4 435.2h1.3v1.3h-1.3zM57.5 430.9h1.3v1.3h-1.3zM242.7 432.4h1.3v1.3h-1.3zM270.0 430.5h1.3v1.3h-1.3zM308.1 442.7h1.3v1.3h-1.3zM291.3 430.7h1.3v1.3h-1.3zM372.5 450.0h1.3v1.3h-1.3zM369.6 450.2h1.3v1.3h-1.3zM620.4 441.5h1.3v1.3h-1.3zM460.0 448.0h1.3v1.3h-1.3zM339.2 430.7h1.3v1.3h-1.3zM349.5 438.4h1.3v1.3h-1.3zM250.7 441.1h1.3v1.3h-1.3zM460.5 428.3h1.3v1.3h-1.3zM279.4 439.7h1.3v1.3h-1.3zM417.8 436.9h1.3v1.3h-1.3zM618.2 428.5h1.3v1.3h-1.3zM509.6 447.3h1.3v1.3h-1.3zM490.0 438.1h1.3v1.3h-1.3zM361.9 438.3h1.3v1.3h-1.3zM520.9 435.7h1.3v1.3h-1.3zM229.6 441.2h1.3v1.3h-1.3zM216.9 428.4h1.3v1.3h-1.3zM368.4 430.0h1.3v1.3h-1.3zM268.0 441.3h1.3v1.3h-1.3zM255.2 429.6h1.3v1.3h-1.3zM80.9 431.0h1.3v1.3h-1.3zM389.8 442.9h1.3v1.3h-1.3zM279.8 444.9h1.3v1.3h-1.3zM198.6 434.6h1.3v1.3h-1.3zM320.2 445.7h1.3v1.3h-1.3zM45.7 436.2h1.3v1.3h-1.3zM157.7 442.3h1.3v1.3h-1.3zM205.9 441.4h1.3v1.3h-1.3zM275.9 429.7h1.3v1.3h-1.3zM384.9 433.5h1.3v1.3h-1.3zM48.8 435.2h1.3v1.3h-1.3zM49.3 440.2h1.3v1.3h-1.3zM125.0 442.7h1.3v1.3h-1.3zM199.0 447.6h1.3v1.3h-1.3zM209.2 427.3h1.3v1.3h-1.3zM149.8 441.1h1.3v1.3h-1.3zM439.7 433.9h1.3v1.3h-1.3zM136.4 436.1h1.3v1.3h-1.3zM491.5 449.0h1.3v1.3h-1.3zM457.5 427.7h1.3v1.3h-1.3zM471.0 440.3h1.3v1.3h-1.3zM77.8 441.7h1.3v1.3h-1.3zM405.1 434.3h1.3v1.3h-1.3zM350.9 429.9h1.3v1.3h-1.3zM229.7 433.7h1.3v1.3h-1.3zM311.6 445.1h1.3v1.3h-1.3zM263.0 445.6h1.3v1.3h-1.3zM339.0 436.1h1.3v1.3h-1.3zM522.2 438.4h1.3v1.3h-1.3zM159.5 433.7h1.3v1.3h-1.3zM180.3 442.8h1.3v1.3h-1.3zM246.7 428.9h1.3v1.3h-1.3zM533.4 439.1h1.3v1.3h-1.3zM167.9 427.1h1.3v1.3h-1.3zM99.9 445.5h1.3v1.3h-1.3zM566.6 438.4h1.3v1.3h-1.3zM75.6 437.7h1.3v1.3h-1.3zM504.1 444.1h1.3v1.3h-1.3zM413.5 427.4h1.3v1.3h-1.3zM489.5 441.4h1.3v1.3h-1.3zM91.3 431.4h1.3v1.3h-1.3zM116.1 433.5h1.3v1.3h-1.3zM375.6 439.3h1.3v1.3h-1.3zM550.2 437.9h1.3v1.3h-1.3zM379.9 449.8h1.3v1.3h-1.3zM141.8 436.7h1.3v1.3h-1.3zM78.0 446.2h1.3v1.3h-1.3zM437.3 449.5h1.3v1.3h-1.3zM127.7 437.1h1.3v1.3h-1.3zM325.3 449.9h1.3v1.3h-1.3zM370.4 448.0h1.3v1.3h-1.3zM78.5 440.5h1.3v1.3h-1.3zM146.6 446.2h1.3v1.3h-1.3zM243.8 426.7h1.3v1.3h-1.3zM95.4 431.8h1.3v1.3h-1.3zM134.6 428.1h1.3v1.3h-1.3zM313.6 429.6h1.3v1.3h-1.3zM278.5 449.5h1.3v1.3h-1.3zM169.8 427.6h1.3v1.3h-1.3zM234.7 426.5h1.3v1.3h-1.3zM312.0 397.3h1.3v1.3h-1.3zM210.6 414.8h1.3v1.3h-1.3zM89.8 370.0h1.3v1.3h-1.3zM219.1 403.9h1.3v1.3h-1.3zM276.3 412.2h1.3v1.3h-1.3zM449.0 394.2h1.3v1.3h-1.3zM515.0 397.5h1.3v1.3h-1.3zM85.1 423.4h1.3v1.3h-1.3zM308.5 423.1h1.3v1.3h-1.3zM57.8 412.3h1.3v1.3h-1.3zM552.0 397.6h1.3v1.3h-1.3zM456.0 354.8h1.3v1.3h-1.3zM440.5 421.4h1.3v1.3h-1.3zM216.1 358.5h1.3v1.3h-1.3zM381.2 408.8h1.3v1.3h-1.3zM446.3 419.8h1.3v1.3h-1.3zM258.2 400.8h1.3v1.3h-1.3zM319.9 383.8h1.3v1.3h-1.3zM92.2 322.7h1.3v1.3h-1.3zM115.9 424.7h1.3v1.3h-1.3zM145.7 420.6h1.3v1.3h-1.3zM95.2 345.9h1.3v1.3h-1.3zM269.9 396.3h1.3v1.3h-1.3zM130.7 411.1h1.3v1.3h-1.3zM493.3 423.3h1.3v1.3h-1.3zM109.7 359.1h1.3v1.3h-1.3zM166.5 400.8h1.3v1.3h-1.3zM424.6 406.5h1.3v1.3h-1.3zM194.3 410.1h1.3v1.3h-1.3zM76.2 374.4h1.3v1.3h-1.3zM309.7 408.4h1.3v1.3h-1.3zM224.0 423.1h1.3v1.3h-1.3zM93.7 424.6h1.3v1.3h-1.3zM165.4 391.2h1.3v1.3h-1.3zM240.2 423.9h1.3v1.3h-1.3zM70.2 391.9h1.3v1.3h-1.3zM124.0 398.7h1.3v1.3h-1.3zM77.7 424.5h1.3v1.3h-1.3zM387.1 413.2h1.3v1.3h-1.3zM251.1 422.8h1.3v1.3h-1.3zM155.3 393.3h1.3v1.3h-1.3zM151.4 365.7h1.3v1.3h-1.3zM471.3 402.6h1.3v1.3h-1.3zM563.8 407.6h1.3v1.3h-1.3zM239.6 403.7h1.3v1.3h-1.3zM300.8 395.4h1.3v1.3h-1.3zM194.7 390.7h1.3v1.3h-1.3zM208.0 385.9h1.3v1.3h-1.3zM527.5 416.7h1.3v1.3h-1.3zM177.6 411.0h1.3v1.3h-1.3zM149.1 422.1h1.3v1.3h-1.3zM396.2 424.7h1.3v1.3h-1.3zM466.5 413.6h1.3v1.3h-1.3zM56.5 416.1h1.3v1.3h-1.3zM127.3 379.7h1.3v1.3h-1.3zM215.5 414.3h1.3v1.3h-1.3zM566.8 407.8h1.3v1.3h-1.3zM295.4 371.9h1.3v1.3h-1.3zM486.5 413.2h1.3v1.3h-1.3zM585.9 395.4h1.3v1.3h-1.3zM182.5 425.4h1.3v1.3h-1.3zM414.8 412.3h1.3v1.3h-1.3zM221.3 425.6h1.3v1.3h-1.3zM202.2 392.1h1.3v1.3h-1.3zM482.1 412.8h1.3v1.3h-1.3zM355.3 415.2h1.3v1.3h-1.3zM78.0 412.2h1.3v1.3h-1.3zM186.8 405.3h1.3v1.3h-1.3zM269.0 405.9h1.3v1.3h-1.3zM83.9 375.3h1.3v1.3h-1.3zM386.4 423.5h1.3v1.3h-1.3zM240.9 413.1h1.3v1.3h-1.3zM510.3 420.5h1.3v1.3h-1.3zM255.9 416.4h1.3v1.3h-1.3zM111.2 368.1h1.3v1.3h-1.3zM472.7 416.2h1.3v1.3h-1.3zM210.0 420.8h1.3v1.3h-1.3zM83.9 395.6h1.3v1.3h-1.3zM487.9 418.7h1.3v1.3h-1.3zM62.4 411.6h1.3v1.3h-1.3zM652.0 392.3h1.3v1.3h-1.3zM373.8 413.4h1.3v1.3h-1.3zM136.1 376.0h1.3v1.3h-1.3zM279.7 418.2h1.3v1.3h-1.3zM149.4 417.6h1.3v1.3h-1.3zM93.3 401.9h1.3v1.3h-1.3zM181.5 423.1h1.3v1.3h-1.3zM106.0 414.8h1.3v1.3h-1.3zM202.8 402.1h1.3v1.3h-1.3zM340.4 411.6h1.3v1.3h-1.3zM285.3 415.1h1.3v1.3h-1.3zM113.2 424.9h1.3v1.3h-1.3zM205.8 378.7h1.3v1.3h-1.3zM385.6 415.6h1.3v1.3h-1.3zM332.2 415.6h1.3v1.3h-1.3zM270.7 376.8h1.3v1.3h-1.3zM379.2 421.1h1.3v1.3h-1.3zM394.3 366.2h1.3v1.3h-1.3zM426.3 406.4h1.3v1.3h-1.3zM231.5 382.5h1.3v1.3h-1.3zM312.6 407.6h1.3v1.3h-1.3zM411.6 424.7h1.3v1.3h-1.3zM56.5 386.3h1.3v1.3h-1.3zM419.8 418.9h1.3v1.3h-1.3zM114.5 403.1h1.3v1.3h-1.3zM333.4 382.0h1.3v1.3h-1.3zM107.2 425.1h1.3v1.3h-1.3zM72.7 370.9h1.3v1.3h-1.3zM398.3 410.3h1.3v1.3h-1.3zM101.3 400.6h1.3v1.3h-1.3zM222.7 423.2h1.3v1.3h-1.3zM543.2 425.1h1.3v1.3h-1.3zM58.8 392.6h1.3v1.3h-1.3zM434.8 379.5h1.3v1.3h-1.3zM261.2 412.4h1.3v1.3h-1.3zM159.3 410.4h1.3v1.3h-1.3zM448.1 382.1h1.3v1.3h-1.3zM517.8 413.2h1.3v1.3h-1.3zM466.4 408.7h1.3v1.3h-1.3zM53.9 416.1h1.3v1.3h-1.3zM415.7 421.5h1.3v1.3h-1.3zM112.7 394.6h1.3v1.3h-1.3zM583.7 392.3h1.3v1.3h-1.3zM277.7 394.9h1.3v1.3h-1.3zM314.7 396.7h1.3v1.3h-1.3zM137.1 395.3h1.3v1.3h-1.3zM592.9 416.1h1.3v1.3h-1.3zM409.0 422.7h1.3v1.3h-1.3zM167.3 411.8h1.3v1.3h-1.3zM468.2 393.3h1.3v1.3h-1.3zM404.2 424.7h1.3v1.3h-1.3zM223.4 395.2h1.3v1.3h-1.3zM360.3 396.3h1.3v1.3h-1.3zM276.4 364.7h1.3v1.3h-1.3zM139.6 352.3h1.3v1.3h-1.3zM283.3 409.5h1.3v1.3h-1.3zM219.1 418.9h1.3v1.3h-1.3zM492.2 419.4h1.3v1.3h-1.3zM334.2 413.1h1.3v1.3h-1.3zM141.8 383.7h1.3v1.3h-1.3zM466.1 411.8h1.3v1.3h-1.3zM83.7 413.4h1.3v1.3h-1.3zM239.2 392.0h1.3v1.3h-1.3zM111.5 407.0h1.3v1.3h-1.3zM227.2 419.5h1.3v1.3h-1.3zM233.2 330.2h1.3v1.3h-1.3zM250.7 400.4h1.3v1.3h-1.3zM475.0 412.6h1.3v1.3h-1.3zM268.5 422.0h1.3v1.3h-1.3zM340.7 425.5h1.3v1.3h-1.3zM121.1 424.2h1.3v1.3h-1.3zM296.0 424.9h1.3v1.3h-1.3zM519.7 412.0h1.3v1.3h-1.3zM349.2 394.9h1.3v1.3h-1.3zM395.1 412.6h1.3v1.3h-1.3zM193.4 423.2h1.3v1.3h-1.3zM485.3 418.7h1.3v1.3h-1.3zM523.4 403.8h1.3v1.3h-1.3zM367.5 381.2h1.3v1.3h-1.3zM153.6 416.9h1.3v1.3h-1.3zM436.2 419.5h1.3v1.3h-1.3zM493.6 390.9h1.3v1.3h-1.3zM133.6 404.2h1.3v1.3h-1.3zM189.8 400.5h1.3v1.3h-1.3zM176.2 422.2h1.3v1.3h-1.3zM277.7 402.7h1.3v1.3h-1.3zM464.3 391.1h1.3v1.3h-1.3zM256.7 344.0h1.3v1.3h-1.3zM346.6 419.1h1.3v1.3h-1.3zM496.7 419.3h1.3v1.3h-1.3zM295.9 402.8h1.3v1.3h-1.3zM339.6 418.6h1.3v1.3h-1.3zM272.5 425.5h1.3v1.3h-1.3zM75.8 422.2h1.3v1.3h-1.3zM381.2 400.3h1.3v1.3h-1.3zM179.5 395.6h1.3v1.3h-1.3zM129.7 412.7h1.3v1.3h-1.3zM313.9 420.9h1.3v1.3h-1.3zM129.7 420.3h1.3v1.3h-1.3zM391.8 414.6h1.3v1.3h-1.3zM144.3 418.3h1.3v1.3h-1.3zM137.8 412.1h1.3v1.3h-1.3zM185.3 421.8h1.3v1.3h-1.3zM524.9 405.9h1.3v1.3h-1.3zM304.6 362.9h1.3v1.3h-1.3zM205.9 423.5h1.3v1.3h-1.3zM236.1 417.7h1.3v1.3h-1.3zM373.7 425.4h1.3v1.3h-1.3zM203.7 420.1h1.3v1.3h-1.3zM303.5 421.3h1.3v1.3h-1.3zM226.2 405.3h1.3v1.3h-1.3zM389.7 395.8h1.3v1.3h-1.3zM261.1 419.0h1.3v1.3h-1.3zM331.4 419.8h1.3v1.3h-1.3zM417.9 417.0h1.3v1.3h-1.3zM116.8 424.8h1.3v1.3h-1.3zM381.6 422.0h1.3v1.3h-1.3zM521.1 402.0h1.3v1.3h-1.3zM312.4 375.7h1.3v1.3h-1.3zM54.9 409.9h1.3v1.3h-1.3zM521.9 406.9h1.3v1.3h-1.3zM490.8 425.3h1.3v1.3h-1.3zM393.8 379.4h1.3v1.3h-1.3zM521.6 408.0h1.3v1.3h-1.3zM78.3 350.0h1.3v1.3h-1.3zM71.9 403.9h1.3v1.3h-1.3zM288.7 415.3h1.3v1.3h-1.3zM220.0 373.8h1.3v1.3h-1.3zM219.3 405.5h1.3v1.3h-1.3zM229.5 418.7h1.3v1.3h-1.3zM472.6 396.5h1.3v1.3h-1.3zM412.1 422.8h1.3v1.3h-1.3zM449.3 406.4h1.3v1.3h-1.3zM97.5 424.7h1.3v1.3h-1.3zM559.0 412.4h1.3v1.3h-1.3zM99.6 349.6h1.3v1.3h-1.3zM175.7 424.5h1.3v1.3h-1.3zM311.8 390.1h1.3v1.3h-1.3zM213.3 421.4h1.3v1.3h-1.3zM396.5 418.5h1.3v1.3h-1.3zM116.4 425.8h1.3v1.3h-1.3zM220.5 348.4h1.3v1.3h-1.3zM206.4 421.0h1.3v1.3h-1.3zM238.2 405.3h1.3v1.3h-1.3zM271.5 374.9h1.3v1.3h-1.3zM384.9 425.6h1.3v1.3h-1.3zM59.2 406.0h1.3v1.3h-1.3zM377.7 402.4h1.3v1.3h-1.3zM271.1 381.5h1.3v1.3h-1.3zM530.4 412.9h1.3v1.3h-1.3zM322.6 419.6h1.3v1.3h-1.3zM251.3 311.6h1.3v1.3h-1.3zM586.3 413.9h1.3v1.3h-1.3zM246.0 408.1h1.3v1.3h-1.3zM252.9 351.7h1.3v1.3h-1.3zM281.6 394.0h1.3v1.3h-1.3zM187.4 415.3h1.3v1.3h-1.3zM148.7 406.3h1.3v1.3h-1.3zM273.6 417.3h1.3v1.3h-1.3zM369.3 336.4h1.3v1.3h-1.3zM367.0 413.4h1.3v1.3h-1.3zM158.1 415.4h1.3v1.3h-1.3zM219.5 423.6h1.3v1.3h-1.3zM398.1 412.8h1.3v1.3h-1.3zM323.1 391.6h1.3v1.3h-1.3zM118.2 412.2h1.3v1.3h-1.3zM505.7 418.4h1.3v1.3h-1.3zM64.3 419.7h1.3v1.3h-1.3zM199.0 422.8h1.3v1.3h-1.3zM297.6 424.6h1.3v1.3h-1.3zM240.7 398.1h1.3v1.3h-1.3zM46.4 420.0h1.3v1.3h-1.3zM597.1 402.3h1.3v1.3h-1.3zM290.8 418.3h1.3v1.3h-1.3zM177.9 424.5h1.3v1.3h-1.3zM44.8 424.4h1.3v1.3h-1.3zM463.5 412.9h1.3v1.3h-1.3zM431.2 415.8h1.3v1.3h-1.3zM371.0 361.5h1.3v1.3h-1.3zM342.0 399.2h1.3v1.3h-1.3zM284.7 345.7h1.3v1.3h-1.3zM97.0 335.8h1.3v1.3h-1.3zM341.3 308.3h1.3v1.3h-1.3z"/>
<path fill="#58cc3c" fill-opacity="0.9" d="M62.9 453.2h1.3v1.3h-1.3zM455.2 451.9h1.3v1.3h-1.3zM301.0 452.6h1.3v1.3h-1.3zM85.2 449.1h1.3v1.3h-1.3zM132.6 452.5h1.3v1.3h-1.3zM187.7 453.1h1.3v1.3h-1.3zM280.4 450.0h1.3v1.3h-1.3zM242.4 456.4h1.3v1.3h-1.3zM346.4 446.3h1.3v1.3h-1.3zM219.2 453.2h1.3v1.3h-1.3zM201.8 452.1h1.3v1.3h-1.3zM109.5 452.8h1.3v1.3h-1.3zM468.8 447.7h1.3v1.3h-1.3zM365.6 451.7h1.3v1.3h-1.3zM264.4 451.5h1.3v1.3h-1.3zM192.9 449.7h1.3v1.3h-1.3zM164.1 449.0h1.3v1.3h-1.3zM184.6 454.2h1.3v1.3h-1.3zM194.2 451.9h1.3v1.3h-1.3zM456.1 451.8h1.3v1.3h-1.3zM257.5 453.9h1.3v1.3h-1.3zM312.6 452.7h1.3v1.3h-1.3zM68.0 450.1h1.3v1.3h-1.3zM323.4 454.4h1.3v1.3h-1.3zM406.5 451.7h1.3v1.3h-1.3zM496.4 452.6h1.3v1.3h-1.3zM228.2 452.8h1.3v1.3h-1.3zM158.1 450.4h1.3v1.3h-1.3zM473.8 454.4h1.3v1.3h-1.3zM409.0 453.8h1.3v1.3h-1.3zM355.9 452.0h1.3v1.3h-1.3zM281.0 449.9h1.3v1.3h-1.3zM308.2 448.1h1.3v1.3h-1.3zM76.1 450.6h1.3v1.3h-1.3zM197.8 450.3h1.3v1.3h-1.3zM362.4 452.6h1.3v1.3h-1.3zM254.7 449.2h1.3v1.3h-1.3zM137.8 453.2h1.3v1.3h-1.3zM539.9 449.9h1.3v1.3h-1.3zM334.8 453.2h1.3v1.3h-1.3zM287.0 450.7h1.3v1.3h-1.3zM174.1 454.3h1.3v1.3h-1.3zM108.1 452.3h1.3v1.3h-1.3zM282.0 453.3h1.3v1.3h-1.3zM327.4 448.3h1.3v1.3h-1.3zM182.8 452.2h1.3v1.3h-1.3zM108.9 454.5h1.3v1.3h-1.3zM150.6 451.1h1.3v1.3h-1.3zM528.1 453.3h1.3v1.3h-1.3zM280.3 449.1h1.3v1.3h-1.3zM543.0 450.9h1.3v1.3h-1.3zM269.8 448.8h1.3v1.3h-1.3zM270.2 452.5h1.3v1.3h-1.3zM343.4 453.3h1.3v1.3h-1.3zM334.7 452.6h1.3v1.3h-1.3zM146.9 452.0h1.3v1.3h-1.3zM352.3 452.4h1.3v1.3h-1.3zM175.9 454.0h1.3v1.3h-1.3zM280.2 454.5h1.3v1.3h-1.3zM255.6 453.0h1.3v1.3h-1.3zM216.2 450.5h1.3v1.3h-1.3zM328.0 455.6h1.3v1.3h-1.3zM111.3 451.9h1.3v1.3h-1.3zM110.4 454.2h1.3v1.3h-1.3zM76.7 450.1h1.3v1.3h-1.3zM529.0 448.7h1.3v1.3h-1.3zM330.6 452.2h1.3v1.3h-1.3zM183.9 453.6h1.3v1.3h-1.3zM463.3 451.8h1.3v1.3h-1.3zM563.0 450.3h1.3v1.3h-1.3zM62.7 450.2h1.3v1.3h-1.3zM475.6 454.2h1.3v1.3h-1.3zM44.9 448.1h1.3v1.3h-1.3zM97.8 452.8h1.3v1.3h-1.3zM181.8 452.4h1.3v1.3h-1.3zM54.8 451.3h1.3v1.3h-1.3zM222.4 450.0h1.3v1.3h-1.3zM281.8 452.2h1.3v1.3h-1.3zM273.7 450.9h1.3v1.3h-1.3zM130.4 451.5h1.3v1.3h-1.3zM77.2 450.8h1.3v1.3h-1.3zM92.3 452.7h1.3v1.3h-1.3zM220.4 454.3h1.3v1.3h-1.3zM249.2 453.1h1.3v1.3h-1.3zM43.5 449.4h1.3v1.3h-1.3zM172.9 449.8h1.3v1.3h-1.3zM207.1 450.8h1.3v1.3h-1.3zM383.6 449.5h1.3v1.3h-1.3zM506.1 452.2h1.3v1.3h-1.3zM413.4 449.2h1.3v1.3h-1.3zM235.4 452.1h1.3v1.3h-1.3zM46.2 454.0h1.3v1.3h-1.3zM289.5 450.9h1.3v1.3h-1.3zM65.8 452.1h1.3v1.3h-1.3zM311.9 450.2h1.3v1.3h-1.3zM417.2 446.5h1.3v1.3h-1.3zM464.6 455.1h1.3v1.3h-1.3zM296.7 451.7h1.3v1.3h-1.3zM106.6 448.2h1.3v1.3h-1.3zM208.7 450.7h1.3v1.3h-1.3zM82.5 448.8h1.3v1.3h-1.3zM178.9 452.5h1.3v1.3h-1.3zM187.7 455.3h1.3v1.3h-1.3zM309.1 448.7h1.3v1.3h-1.3zM490.3 451.7h1.3v1.3h-1.3zM542.6 452.8h1.3v1.3h-1.3zM58.5 448.0h1.3v1.3h-1.3zM224.1 453.7h1.3v1.3h-1.3zM469.3 453.0h1.3v1.3h-1.3zM131.2 452.4h1.3v1.3h-1.3zM307.8 451.9h1.3v1.3h-1.3zM273.2 453.1h1.3v1.3h-1.3zM102.2 456.5h1.3v1.3h-1.3zM658.0 452.5h1.3v1.3h-1.3zM171.5 452.3h1.3v1.3h-1.3zM89.3 452.5h1.3v1.3h-1.3zM125.2 452.5h1.3v1.3h-1.3zM360.9 445.9h1.3v1.3h-1.3zM201.7 450.6h1.3v1.3h-1.3zM346.5 449.4h1.3v1.3h-1.3zM190.5 451.4h1.3v1.3h-1.3zM128.4 453.8h1.3v1.3h-1.3zM460.8 450.0h1.3v1.3h-1.3zM44.0 456.5h1.3v1.3h-1.3zM213.7 450.9h1.3v1.3h-1.3zM85.0 450.6h1.3v1.3h-1.3zM106.0 452.8h1.3v1.3h-1.3zM259.6 451.1h1.3v1.3h-1.3zM356.3 450.1h1.3v1.3h-1.3zM408.6 450.4h1.3v1.3h-1.3zM131.3 452.2h1.3v1.3h-1.3zM371.8 452.2h1.3v1.3h-1.3zM321.6 451.8h1.3v1.3h-1.3zM249.7 450.6h1.3v1.3h-1.3zM479.1 451.9h1.3v1.3h-1.3zM341.2 452.4h1.3v1.3h-1.3zM497.4 454.6h1.3v1.3h-1.3zM77.2 451.3h1.3v1.3h-1.3zM543.1 449.3h1.3v1.3h-1.3zM207.2 453.0h1.3v1.3h-1.3zM522.6 455.2h1.3v1.3h-1.3zM149.4 453.6h1.3v1.3h-1.3zM214.1 449.7h1.3v1.3h-1.3zM425.7 450.0h1.3v1.3h-1.3zM68.1 449.0h1.3v1.3h-1.3zM282.7 453.6h1.3v1.3h-1.3zM511.1 455.3h1.3v1.3h-1.3zM168.2 450.2h1.3v1.3h-1.3zM162.9 451.7h1.3v1.3h-1.3zM129.9 453.2h1.3v1.3h-1.3zM277.8 449.5h1.3v1.3h-1.3zM394.5 451.3h1.3v1.3h-1.3zM220.6 452.2h1.3v1.3h-1.3zM193.5 454.4h1.3v1.3h-1.3zM229.1 454.2h1.3v1.3h-1.3zM435.9 455.5h1.3v1.3h-1.3zM69.4 450.7h1.3v1.3h-1.3zM191.6 449.3h1.3v1.3h-1.3zM164.8 450.1h1.3v1.3h-1.3zM403.5 448.4h1.3v1.3h-1.3zM462.6 451.6h1.3v1.3h-1.3zM457.8 452.4h1.3v1.3h-1.3zM80.7 448.9h1.3v1.3h-1.3zM279.2 452.7h1.3v1.3h-1.3zM259.5 449.2h1.3v1.3h-1.3zM445.3 453.6h1.3v1.3h-1.3zM150.0 451.6h1.3v1.3h-1.3zM216.2 451.0h1.3v1.3h-1.3zM417.9 451.9h1.3v1.3h-1.3zM372.2 454.6h1.3v1.3h-1.3zM217.0 450.2h1.3v1.3h-1.3zM64.8 450.8h1.3v1.3h-1.3zM61.8 451.3h1.3v1.3h-1.3zM173.8 453.4h1.3v1.3h-1.3zM157.3 451.9h1.3v1.3h-1.3zM413.1 452.0h1.3v1.3h-1.3zM533.9 450.2h1.3v1.3h-1.3zM163.3 451.4h1.3v1.3h-1.3zM269.0 452.6h1.3v1.3h-1.3zM251.5 452.2h1.3v1.3h-1.3zM218.8 451.7h1.3v1.3h-1.3zM130.1 448.3h1.3v1.3h-1.3zM543.4 450.8h1.3v1.3h-1.3zM350.8 448.1h1.3v1.3h-1.3zM204.6 453.3h1.3v1.3h-1.3zM174.8 449.3h1.3v1.3h-1.3zM454.3 452.2h1.3v1.3h-1.3zM73.3 453.0h1.3v1.3h-1.3zM372.4 453.8h1.3v1.3h-1.3zM189.6 454.8h1.3v1.3h-1.3zM224.3 450.0h1.3v1.3h-1.3zM556.2 450.3h1.3v1.3h-1.3zM162.3 448.5h1.3v1.3h-1.3zM165.6 454.0h1.3v1.3h-1.3zM48.0 451.3h1.3v1.3h-1.3zM578.1 450.2h1.3v1.3h-1.3zM275.3 447.5h1.3v1.3h-1.3zM477.2 451.0h1.3v1.3h-1.3zM114.5 452.2h1.3v1.3h-1.3zM604.1 450.6h1.3v1.3h-1.3zM208.3 451.2h1.3v1.3h-1.3zM354.1 449.1h1.3v1.3h-1.3zM545.6 450.0h1.3v1.3h-1.3zM396.6 450.1h1.3v1.3h-1.3zM342.9 448.3h1.3v1.3h-1.3zM384.1 453.2h1.3v1.3h-1.3zM124.6 450.1h1.3v1.3h-1.3zM194.3 452.8h1.3v1.3h-1.3zM366.1 449.0h1.3v1.3h-1.3zM294.6 452.0h1.3v1.3h-1.3zM341.3 446.7h1.3v1.3h-1.3zM168.7 456.5h1.3v1.3h-1.3zM521.7 452.2h1.3v1.3h-1.3zM430.5 450.1h1.3v1.3h-1.3zM421.0 448.9h1.3v1.3h-1.3zM434.1 449.2h1.3v1.3h-1.3zM54.7 447.8h1.3v1.3h-1.3zM290.9 450.2h1.3v1.3h-1.3zM197.5 453.0h1.3v1.3h-1.3zM247.6 455.6h1.3v1.3h-1.3zM347.4 449.0h1.3v1.3h-1.3zM519.9 452.3h1.3v1.3h-1.3zM374.6 451.8h1.3v1.3h-1.3zM183.2 450.5h1.3v1.3h-1.3zM320.0 453.7h1.3v1.3h-1.3zM145.4 451.8h1.3v1.3h-1.3zM361.2 452.0h1.3v1.3h-1.3zM327.0 454.5h1.3v1.3h-1.3zM294.9 455.8h1.3v1.3h-1.3zM120.3 447.5h1.3v1.3h-1.3zM231.4 451.8h1.3v1.3h-1.3zM441.9 450.1h1.3v1.3h-1.3zM534.1 450.8h1.3v1.3h-1.3zM202.6 452.5h1.3v1.3h-1.3zM366.9 453.8h1.3v1.3h-1.3zM227.8 454.1h1.3v1.3h-1.3zM313.0 449.4h1.3v1.3h-1.3zM146.4 455.4h1.3v1.3h-1.3zM280.5 452.3h1.3v1.3h-1.3zM65.2 449.6h1.3v1.3h-1.3zM56.4 452.3h1.3v1.3h-1.3zM248.7 451.6h1.3v1.3h-1.3zM333.1 451.5h1.3v1.3h-1.3zM386.3 454.2h1.3v1.3h-1.3zM90.3 452.7h1.3v1.3h-1.3zM242.3 456.0h1.3v1.3h-1.3zM316.5 453.7h1.3v1.3h-1.3zM336.9 448.5h1.3v1.3h-1.3zM279.0 450.9h1.3v1.3h-1.3zM43.8 451.5h1.3v1.3h-1.3zM283.2 449.5h1.3v1.3h-1.3zM134.8 453.1h1.3v1.3h-1.3zM144.4 452.5h1.3v1.3h-1.3zM172.2 453.1h1.3v1.3h-1.3zM169.2 452.8h1.3v1.3h-1.3zM131.9 456.3h1.3v1.3h-1.3zM190.6 451.3h1.3v1.3h-1.3zM191.8 449.5h1.3v1.3h-1.3zM75.0 452.7h1.3v1.3h-1.3zM46.4 451.0h1.3v1.3h-1.3zM233.0 449.3h1.3v1.3h-1.3zM307.9 450.9h1.3v1.3h-1.3zM132.0 450.5h1.3v1.3h-1.3zM248.2 451.2h1.3v1.3h-1.3zM359.4 452.7h1.3v1.3h-1.3zM351.2 452.5h1.3v1.3h-1.3zM174.8 451.2h1.3v1.3h-1.3zM472.4 453.8h1.3v1.3h-1.3zM154.8 451.8h1.3v1.3h-1.3zM566.2 450.8h1.3v1.3h-1.3zM190.0 451.0h1.3v1.3h-1.3zM481.1 447.3h1.3v1.3h-1.3zM212.9 451.2h1.3v1.3h-1.3zM267.7 451.5h1.3v1.3h-1.3zM164.8 456.5h1.3v1.3h-1.3zM317.5 452.0h1.3v1.3h-1.3zM270.9 452.4h1.3v1.3h-1.3zM192.2 453.7h1.3v1.3h-1.3zM483.2 451.8h1.3v1.3h-1.3zM110.5 447.9h1.3v1.3h-1.3zM256.3 454.6h1.3v1.3h-1.3zM405.9 453.6h1.3v1.3h-1.3zM258.1 453.1h1.3v1.3h-1.3zM546.6 450.9h1.3v1.3h-1.3zM185.3 452.2h1.3v1.3h-1.3zM203.8 454.2h1.3v1.3h-1.3zM409.2 450.8h1.3v1.3h-1.3zM276.4 449.7h1.3v1.3h-1.3zM354.0 452.1h1.3v1.3h-1.3zM214.3 448.9h1.3v1.3h-1.3zM242.8 453.5h1.3v1.3h-1.3zM514.9 453.7h1.3v1.3h-1.3zM436.7 454.6h1.3v1.3h-1.3zM64.3 455.9h1.3v1.3h-1.3zM221.6 450.7h1.3v1.3h-1.3zM288.7 449.6h1.3v1.3h-1.3zM460.1 449.4h1.3v1.3h-1.3zM116.1 453.9h1.3v1.3h-1.3zM261.7 450.0h1.3v1.3h-1.3zM83.9 452.2h1.3v1.3h-1.3zM192.7 449.9h1.3v1.3h-1.3zM345.5 450.9h1.3v1.3h-1.3zM103.9 452.0h1.3v1.3h-1.3zM559.7 451.1h1.3v1.3h-1.3zM95.5 450.3h1.3v1.3h-1.3zM74.6 451.0h1.3v1.3h-1.3zM92.3 451.3h1.3v1.3h-1.3zM532.8 452.9h1.3v1.3h-1.3zM149.2 450.4h1.3v1.3h-1.3zM136.2 448.8h1.3v1.3h-1.3zM567.9 454.2h1.3v1.3h-1.3zM263.0 451.4h1.3v1.3h-1.3zM418.4 452.8h1.3v1.3h-1.3zM98.6 452.0h1.3v1.3h-1.3zM146.8 452.4h1.3v1.3h-1.3zM353.5 450.4h1.3v1.3h-1.3zM59.2 456.5h1.3v1.3h-1.3zM168.5 451.9h1.3v1.3h-1.3zM334.2 455.9h1.3v1.3h-1.3zM153.1 454.3h1.3v1.3h-1.3zM134.2 455.0h1.3v1.3h-1.3zM116.6 454.3h1.3v1.3h-1.3zM300.5 450.2h1.3v1.3h-1.3zM401.6 450.2h1.3v1.3h-1.3zM46.5 452.8h1.3v1.3h-1.3zM468.1 450.5h1.3v1.3h-1.3zM407.2 452.8h1.3v1.3h-1.3zM374.7 450.9h1.3v1.3h-1.3zM325.4 452.2h1.3v1.3h-1.3zM341.5 449.5h1.3v1.3h-1.3zM52.2 453.9h1.3v1.3h-1.3zM352.9 451.0h1.3v1.3h-1.3zM244.1 451.8h1.3v1.3h-1.3zM107.6 451.0h1.3v1.3h-1.3zM482.9 451.1h1.3v1.3h-1.3zM351.6 449.1h1.3v1.3h-1.3zM182.2 449.1h1.3v1.3h-1.3zM511.4 453.6h1.3v1.3h-1.3zM146.9 451.0h1.3v1.3h-1.3zM52.8 451.9h1.3v1.3h-1.3zM307.6 450.2h1.3v1.3h-1.3zM572.9 452.0h1.3v1.3h-1.3zM398.4 453.1h1.3v1.3h-1.3zM55.4 451.3h1.3v1.3h-1.3zM568.1 454.4h1.3v1.3h-1.3zM396.9 456.5h1.3v1.3h-1.3zM466.8 454.8h1.3v1.3h-1.3zM438.2 454.5h1.3v1.3h-1.3zM114.9 448.5h1.3v1.3h-1.3zM444.9 451.7h1.3v1.3h-1.3zM436.9 452.6h1.3v1.3h-1.3zM120.9 451.4h1.3v1.3h-1.3zM206.4 454.2h1.3v1.3h-1.3zM245.1 452.9h1.3v1.3h-1.3zM285.2 450.9h1.3v1.3h-1.3zM131.1 449.3h1.3v1.3h-1.3zM238.0 454.8h1.3v1.3h-1.3zM120.8 452.1h1.3v1.3h-1.3zM192.0 454.3h1.3v1.3h-1.3zM504.8 449.0h1.3v1.3h-1.3zM218.8 446.2h1.3v1.3h-1.3zM173.6 450.3h1.3v1.3h-1.3zM457.2 449.1h1.3v1.3h-1.3zM297.0 453.8h1.3v1.3h-1.3zM361.4 451.8h1.3v1.3h-1.3zM400.7 450.9h1.3v1.3h-1.3zM149.5 451.0h1.3v1.3h-1.3zM320.6 449.0h1.3v1.3h-1.3zM379.5 450.8h1.3v1.3h-1.3zM241.8 449.7h1.3v1.3h-1.3zM257.7 449.4h1.3v1.3h-1.3zM364.1 452.5h1.3v1.3h-1.3zM424.8 449.8h1.3v1.3h-1.3zM82.2 450.0h1.3v1.3h-1.3zM388.2 454.4h1.3v1.3h-1.3zM256.6 452.1h1.3v1.3h-1.3zM184.8 453.7h1.3v1.3h-1.3zM340.2 450.1h1.3v1.3h-1.3zM478.2 451.5h1.3v1.3h-1.3zM207.9 455.4h1.3v1.3h-1.3zM115.7 453.2h1.3v1.3h-1.3zM137.8 450.7h1.3v1.3h-1.3zM434.0 452.3h1.3v1.3h-1.3zM256.9 452.4h1.3v1.3h-1.3zM235.6 455.3h1.3v1.3h-1.3zM388.7 454.3h1.3v1.3h-1.3zM162.1 450.2h1.3v1.3h-1.3zM425.8 451.9h1.3v1.3h-1.3zM349.0 452.0h1.3v1.3h-1.3zM238.9 450.7h1.3v1.3h-1.3zM463.9 455.2h1.3v1.3h-1.3zM557.3 450.3h1.3v1.3h-1.3zM100.0 451.6h1.3v1.3h-1.3zM56.2 451.1h1.3v1.3h-1.3zM351.5 451.1h1.3v1.3h-1.3zM142.0 453.6h1.3v1.3h-1.3zM159.5 454.1h1.3v1.3h-1.3zM92.5 452.3h1.3v1.3h-1.3zM367.2 452.2h1.3v1.3h-1.3zM465.4 452.7h1.3v1.3h-1.3zM66.2 448.5h1.3v1.3h-1.3zM108.7 452.2h1.3v1.3h-1.3zM245.3 448.2h1.3v1.3h-1.3zM49.9 453.0h1.3v1.3h-1.3zM427.9 452.2h1.3v1.3h-1.3zM389.3 451.1h1.3v1.3h-1.3zM50.6 453.5h1.3v1.3h-1.3zM158.7 451.1h1.3v1.3h-1.3zM557.7 448.3h1.3v1.3h-1.3zM572.6 450.4h1.3v1.3h-1.3zM181.8 452.4h1.3v1.3h-1.3zM260.4 449.2h1.3v1.3h-1.3zM319.6 454.0h1.3v1.3h-1.3zM244.0 453.0h1.3v1.3h-1.3zM115.2 449.4h1.3v1.3h-1.3zM114.2 451.4h1.3v1.3h-1.3zM227.5 452.3h1.3v1.3h-1.3zM306.7 451.6h1.3v1.3h-1.3zM421.9 449.0h1.3v1.3h-1.3zM324.4 450.5h1.3v1.3h-1.3zM416.7 453.5h1.3v1.3h-1.3zM260.1 449.7h1.3v1.3h-1.3zM277.9 453.7h1.3v1.3h-1.3zM164.0 450.9h1.3v1.3h-1.3zM454.1 454.5h1.3v1.3h-1.3zM49.8 452.2h1.3v1.3h-1.3zM447.8 454.5h1.3v1.3h-1.3zM535.2 452.0h1.3v1.3h-1.3zM324.2 449.8h1.3v1.3h-1.3zM118.0 453.2h1.3v1.3h-1.3zM371.0 452.8h1.3v1.3h-1.3zM269.2 452.4h1.3v1.3h-1.3zM266.0 451.6h1.3v1.3h-1.3zM102.2 450.5h1.3v1.3h-1.3zM316.1 456.5h1.3v1.3h-1.3zM48.5 453.5h1.3v1.3h-1.3zM181.9 451.3h1.3v1.3h-1.3zM249.9 447.3h1.3v1.3h-1.3zM399.4 452.7h1.3v1.3h-1.3zM206.1 456.3h1.3v1.3h-1.3zM239.7 450.2h1.3v1.3h-1.3zM47.6 450.5h1.3v1.3h-1.3zM472.7 452.8h1.3v1.3h-1.3zM503.5 451.7h1.3v1.3h-1.3zM101.8 450.3h1.3v1.3h-1.3zM169.8 452.9h1.3v1.3h-1.3zM275.3 453.8h1.3v1.3h-1.3zM509.6 446.5h1.3v1.3h-1.3zM245.9 448.0h1.3v1.3h-1.3zM157.1 449.4h1.3v1.3h-1.3zM484.0 449.5h1.3v1.3h-1.3zM169.6 451.9h1.3v1.3h-1.3zM534.8 452.5h1.3v1.3h-1.3zM282.6 450.3h1.3v1.3h-1.3zM162.4 446.4h1.3v1.3h-1.3zM52.6 450.5h1.3v1.3h-1.3zM412.9 451.4h1.3v1.3h-1.3zM220.5 450.8h1.3v1.3h-1.3zM66.8 455.1h1.3v1.3h-1.3zM119.9 451.9h1.3v1.3h-1.3zM374.5 451.2h1.3v1.3h-1.3zM493.0 450.9h1.3v1.3h-1.3zM333.8 452.7h1.3v1.3h-1.3zM304.1 453.1h1.3v1.3h-1.3zM232.3 447.9h1.3v1.3h-1.3zM181.2 456.5h1.3v1.3h-1.3zM228.3 451.3h1.3v1.3h-1.3zM341.9 455.0h1.3v1.3h-1.3zM493.4 448.5h1.3v1.3h-1.3zM242.4 454.9h1.3v1.3h-1.3zM152.2 455.3h1.3v1.3h-1.3zM385.4 453.7h1.3v1.3h-1.3zM209.0 452.1h1.3v1.3h-1.3zM352.1 450.7h1.3v1.3h-1.3zM83.2 449.6h1.3v1.3h-1.3zM72.3 450.8h1.3v1.3h-1.3zM436.1 450.7h1.3v1.3h-1.3zM329.3 448.5h1.3v1.3h-1.3zM82.6 450.7h1.3v1.3h-1.3zM290.7 449.7h1.3v1.3h-1.3zM471.3 449.5h1.3v1.3h-1.3zM277.3 448.9h1.3v1.3h-1.3zM582.3 451.7h1.3v1.3h-1.3zM560.7 452.0h1.3v1.3h-1.3zM137.7 454.8h1.3v1.3h-1.3zM309.6 452.2h1.3v1.3h-1.3zM55.3 456.4h1.3v1.3h-1.3zM337.6 450.4h1.3v1.3h-1.3zM469.8 451.0h1.3v1.3h-1.3zM76.6 452.4h1.3v1.3h-1.3zM618.1 450.9h1.3v1.3h-1.3zM451.6 452.6h1.3v1.3h-1.3zM489.5 455.5h1.3v1.3h-1.3zM177.9 454.3h1.3v1.3h-1.3zM490.4 456.5h1.3v1.3h-1.3zM103.8 453.9h1.3v1.3h-1.3zM473.6 450.4h1.3v1.3h-1.3zM184.3 450.7h1.3v1.3h-1.3zM243.6 451.8h1.3v1.3h-1.3zM238.4 448.2h1.3v1.3h-1.3zM524.9 452.8h1.3v1.3h-1.3zM188.1 451.8h1.3v1.3h-1.3zM183.8 450.6h1.3v1.3h-1.3zM230.0 454.3h1.3v1.3h-1.3zM56.8 451.2h1.3v1.3h-1.3zM306.7 453.4h1.3v1.3h-1.3zM54.0 451.5h1.3v1.3h-1.3zM247.1 453.3h1.3v1.3h-1.3zM175.7 453.4h1.3v1.3h-1.3zM89.8 453.9h1.3v1.3h-1.3zM371.3 448.0h1.3v1.3h-1.3zM313.2 454.7h1.3v1.3h-1.3zM427.2 453.7h1.3v1.3h-1.3zM374.2 452.1h1.3v1.3h-1.3zM460.1 455.4h1.3v1.3h-1.3zM141.2 452.5h1.3v1.3h-1.3zM75.7 449.9h1.3v1.3h-1.3zM291.6 453.4h1.3v1.3h-1.3zM130.3 452.8h1.3v1.3h-1.3zM364.3 450.5h1.3v1.3h-1.3zM143.6 451.6h1.3v1.3h-1.3zM389.2 454.1h1.3v1.3h-1.3zM264.7 453.9h1.3v1.3h-1.3zM404.3 454.2h1.3v1.3h-1.3zM408.6 449.5h1.3v1.3h-1.3zM226.8 449.5h1.3v1.3h-1.3zM383.4 452.0h1.3v1.3h-1.3zM112.3 449.2h1.3v1.3h-1.3zM97.5 450.6h1.3v1.3h-1.3zM103.6 455.1h1.3v1.3h-1.3zM330.9 451.7h1.3v1.3h-1.3zM387.2 452.2h1.3v1.3h-1.3zM367.4 447.9h1.3v1.3h-1.3zM354.6 450.0h1.3v1.3h-1.3zM510.0 454.6h1.3v1.3h-1.3zM432.5 450.2h1.3v1.3h-1.3zM89.3 452.8h1.3v1.3h-1.3zM112.7 452.6h1.3v1.3h-1.3zM85.9 454.0h1.3v1.3h-1.3zM131.7 456.5h1.3v1.3h-1.3zM51.4 451.2h1.3v1.3h-1.3zM72.6 451.6h1.3v1.3h-1.3zM548.3 452.2h1.3v1.3h-1.3zM434.9 450.4h1.3v1.3h-1.3zM165.3 452.2h1.3v1.3h-1.3zM208.4 452.5h1.3v1.3h-1.3zM383.4 455.7h1.3v1.3h-1.3zM405.1 456.5h1.3v1.3h-1.3zM381.7 451.3h1.3v1.3h-1.3zM191.6 452.3h1.3v1.3h-1.3zM82.2 453.3h1.3v1.3h-1.3zM324.7 452.8h1.3v1.3h-1.3zM219.6 451.4h1.3v1.3h-1.3zM542.9 451.3h1.3v1.3h-1.3zM409.4 451.3h1.3v1.3h-1.3zM492.5 449.5h1.3v1.3h-1.3zM400.3 451.4h1.3v1.3h-1.3zM331.0 451.4h1.3v1.3h-1.3zM405.6 451.1h1.3v1.3h-1.3zM332.7 450.3h1.3v1.3h-1.3zM76.7 449.4h1.3v1.3h-1.3zM160.1 450.7h1.3v1.3h-1.3zM229.4 449.0h1.3v1.3h-1.3zM87.4 447.5h1.3v1.3h-1.3zM442.1 451.1h1.3v1.3h-1.3zM129.7 454.2h1.3v1.3h-1.3zM155.1 451.4h1.3v1.3h-1.3zM465.9 452.3h1.3v1.3h-1.3zM408.5 452.9h1.3v1.3h-1.3zM399.5 453.4h1.3v1.3h-1.3zM331.7 455.7h1.3v1.3h-1.3zM183.4 455.6h1.3v1.3h-1.3zM540.6 452.2h1.3v1.3h-1.3zM580.4 449.8h1.3v1.3h-1.3zM344.2 452.1h1.3v1.3h-1.3zM232.8 451.3h1.3v1.3h-1.3zM110.4 448.3h1.3v1.3h-1.3zM307.9 453.4h1.3v1.3h-1.3zM113.7 451.1h1.3v1.3h-1.3zM355.1 450.2h1.3v1.3h-1.3zM472.0 450.7h1.3v1.3h-1.3zM274.6 450.1h1.3v1.3h-1.3zM562.2 451.4h1.3v1.3h-1.3zM389.6 456.5h1.3v1.3h-1.3zM280.4 454.3h1.3v1.3h-1.3zM447.5 452.5h1.3v1.3h-1.3zM168.7 455.4h1.3v1.3h-1.3zM379.8 451.9h1.3v1.3h-1.3zM291.9 450.3h1.3v1.3h-1.3zM229.3 453.5h1.3v1.3h-1.3zM228.5 452.2h1.3v1.3h-1.3zM146.1 451.6h1.3v1.3h-1.3zM542.9 452.7h1.3v1.3h-1.3zM377.3 451.3h1.3v1.3h-1.3zM53.7 452.2h1.3v1.3h-1.3zM88.1 452.4h1.3v1.3h-1.3zM345.9 452.4h1.3v1.3h-1.3zM415.5 453.0h1.3v1.3h-1.3zM229.4 450.3h1.3v1.3h-1.3zM436.4 451.2h1.3v1.3h-1.3zM278.5 448.0h1.3v1.3h-1.3zM51.2 454.5h1.3v1.3h-1.3zM425.3 456.5h1.3v1.3h-1.3zM182.6 449.6h1.3v1.3h-1.3zM437.2 453.0h1.3v1.3h-1.3zM201.4 456.1h1.3v1.3h-1.3zM473.6 451.6h1.3v1.3h-1.3zM238.3 453.8h1.3v1.3h-1.3zM111.4 454.0h1.3v1.3h-1.3zM48.5 450.2h1.3v1.3h-1.3zM220.8 454.4h1.3v1.3h-1.3zM470.9 447.6h1.3v1.3h-1.3zM316.5 450.3h1.3v1.3h-1.3zM465.2 454.4h1.3v1.3h-1.3zM395.7 450.6h1.3v1.3h-1.3zM143.6 448.8h1.3v1.3h-1.3zM288.1 449.5h1.3v1.3h-1.3zM84.8 450.2h1.3v1.3h-1.3zM180.1 448.8h1.3v1.3h-1.3zM188.6 451.7h1.3v1.3h-1.3zM68.0 451.7h1.3v1.3h-1.3zM438.5 449.2h1.3v1.3h-1.3zM126.7 447.5h1.3v1.3h-1.3zM231.7 451.4h1.3v1.3h-1.3zM335.7 447.2h1.3v1.3h-1.3zM188.8 453.2h1.3v1.3h-1.3zM240.9 450.8h1.3v1.3h-1.3zM226.2 450.9h1.3v1.3h-1.3zM570.2 451.5h1.3v1.3h-1.3zM62.1 449.1h1.3v1.3h-1.3zM436.6 451.3h1.3v1.3h-1.3zM62.3 452.5h1.3v1.3h-1.3zM64.4 451.9h1.3v1.3h-1.3zM234.0 452.9h1.3v1.3h-1.3zM116.4 449.8h1.3v1.3h-1.3zM445.8 453.6h1.3v1.3h-1.3zM309.4 452.2h1.3v1.3h-1.3zM114.4 449.9h1.3v1.3h-1.3zM405.7 450.1h1.3v1.3h-1.3zM246.9 451.1h1.3v1.3h-1.3zM146.8 451.8h1.3v1.3h-1.3zM581.5 453.6h1.3v1.3h-1.3zM472.6 453.9h1.3v1.3h-1.3zM227.6 450.3h1.3v1.3h-1.3zM412.4 454.3h1.3v1.3h-1.3zM498.4 448.9h1.3v1.3h-1.3zM460.5 449.2h1.3v1.3h-1.3zM367.2 451.7h1.3v1.3h-1.3zM503.3 453.1h1.3v1.3h-1.3zM165.8 450.0h1.3v1.3h-1.3zM55.4 455.9h1.3v1.3h-1.3zM261.8 450.9h1.3v1.3h-1.3zM93.6 451.8h1.3v1.3h-1.3zM583.4 451.5h1.3v1.3h-1.3zM234.8 452.2h1.3v1.3h-1.3zM51.4 449.0h1.3v1.3h-1.3zM171.7 452.9h1.3v1.3h-1.3zM136.1 450.4h1.3v1.3h-1.3zM369.9 450.5h1.3v1.3h-1.3zM109.8 450.8h1.3v1.3h-1.3zM224.8 449.6h1.3v1.3h-1.3zM226.5 450.8h1.3v1.3h-1.3zM436.4 452.2h1.3v1.3h-1.3zM174.7 453.1h1.3v1.3h-1.3zM339.8 450.2h1.3v1.3h-1.3zM193.6 452.3h1.3v1.3h-1.3zM540.0 450.5h1.3v1.3h-1.3zM403.1 447.9h1.3v1.3h-1.3zM367.6 449.5h1.3v1.3h-1.3zM484.0 453.0h1.3v1.3h-1.3zM137.8 453.2h1.3v1.3h-1.3zM54.7 452.4h1.3v1.3h-1.3zM87.5 453.8h1.3v1.3h-1.3zM551.3 452.9h1.3v1.3h-1.3zM133.6 450.8h1.3v1.3h-1.3zM240.3 454.3h1.3v1.3h-1.3zM117.6 448.6h1.3v1.3h-1.3zM215.2 451.0h1.3v1.3h-1.3zM184.8 452.6h1.3v1.3h-1.3zM123.9 456.5h1.3v1.3h-1.3zM220.1 451.2h1.3v1.3h-1.3zM268.1 449.4h1.3v1.3h-1.3zM337.7 451.4h1.3v1.3h-1.3zM140.1 453.5h1.3v1.3h-1.3zM309.2 452.8h1.3v1.3h-1.3zM220.1 448.6h1.3v1.3h-1.3zM170.0 452.4h1.3v1.3h-1.3zM474.9 453.0h1.3v1.3h-1.3zM123.6 454.2h1.3v1.3h-1.3zM415.5 450.6h1.3v1.3h-1.3zM181.3 448.0h1.3v1.3h-1.3zM64.1 452.4h1.3v1.3h-1.3zM392.9 450.8h1.3v1.3h-1.3zM65.7 447.8h1.3v1.3h-1.3zM522.6 449.1h1.3v1.3h-1.3zM313.9 451.4h1.3v1.3h-1.3zM421.4 450.8h1.3v1.3h-1.3zM137.6 450.5h1.3v1.3h-1.3zM112.3 447.5h1.3v1.3h-1.3zM297.9 453.3h1.3v1.3h-1.3zM55.4 451.6h1.3v1.3h-1.3zM220.2 448.6h1.3v1.3h-1.3zM124.2 450.5h1.3v1.3h-1.3zM237.3 452.0h1.3v1.3h-1.3zM300.3 456.0h1.3v1.3h-1.3zM274.3 454.1h1.3v1.3h-1.3zM197.9 452.3h1.3v1.3h-1.3zM260.5 451.3h1.3v1.3h-1.3zM71.0 453.2h1.3v1.3h-1.3zM531.5 454.5h1.3v1.3h-1.3zM461.5 451.9h1.3v1.3h-1.3zM332.7 452.4h1.3v1.3h-1.3zM264.3 447.5h1.3v1.3h-1.3zM130.5 453.1h1.3v1.3h-1.3zM456.8 450.8h1.3v1.3h-1.3zM171.8 451.1h1.3v1.3h-1.3zM346.9 452.3h1.3v1.3h-1.3zM139.8 449.1h1.3v1.3h-1.3zM74.7 448.9h1.3v1.3h-1.3zM263.2 449.9h1.3v1.3h-1.3zM293.2 448.4h1.3v1.3h-1.3zM232.4 450.7h1.3v1.3h-1.3zM334.6 450.1h1.3v1.3h-1.3zM388.7 451.6h1.3v1.3h-1.3zM455.0 448.3h1.3v1.3h-1.3zM349.7 452.2h1.3v1.3h-1.3zM204.9 453.7h1.3v1.3h-1.3zM322.0 453.5h1.3v1.3h-1.3zM362.3 452.6h1.3v1.3h-1.3zM521.3 456.5h1.3v1.3h-1.3zM538.9 447.9h1.3v1.3h-1.3zM579.2 450.5h1.3v1.3h-1.3zM456.7 450.3h1.3v1.3h-1.3zM88.0 449.3h1.3v1.3h-1.3zM187.6 447.7h1.3v1.3h-1.3zM410.6 449.7h1.3v1.3h-1.3zM373.4 452.3h1.3v1.3h-1.3zM380.1 450.2h1.3v1.3h-1.3zM205.4 449.3h1.3v1.3h-1.3zM294.2 449.4h1.3v1.3h-1.3zM272.6 452.5h1.3v1.3h-1.3zM229.2 456.0h1.3v1.3h-1.3zM430.1 449.0h1.3v1.3h-1.3zM299.7 451.5h1.3v1.3h-1.3zM380.5 452.5h1.3v1.3h-1.3zM60.1 450.6h1.3v1.3h-1.3zM178.2 451.7h1.3v1.3h-1.3zM294.8 449.2h1.3v1.3h-1.3zM96.9 453.7h1.3v1.3h-1.3zM306.9 450.3h1.3v1.3h-1.3zM533.2 450.6h1.3v1.3h-1.3zM115.6 453.0h1.3v1.3h-1.3zM458.1 451.9h1.3v1.3h-1.3zM123.5 450.2h1.3v1.3h-1.3zM411.7 450.3h1.3v1.3h-1.3zM321.8 448.4h1.3v1.3h-1.3zM280.6 453.5h1.3v1.3h-1.3zM75.2 451.2h1.3v1.3h-1.3zM189.5 450.2h1.3v1.3h-1.3zM129.2 451.3h1.3v1.3h-1.3zM477.6 448.4h1.3v1.3h-1.3zM442.0 455.3h1.3v1.3h-1.3zM93.5 452.5h1.3v1.3h-1.3zM516.6 450.1h1.3v1.3h-1.3zM380.9 452.1h1.3v1.3h-1.3zM367.5 451.6h1.3v1.3h-1.3zM230.9 451.4h1.3v1.3h-1.3zM505.5 451.8h1.3v1.3h-1.3zM121.3 450.4h1.3v1.3h-1.3zM96.7 453.0h1.3v1.3h-1.3zM175.6 454.3h1.3v1.3h-1.3zM366.3 452.0h1.3v1.3h-1.3zM130.6 454.7h1.3v1.3h-1.3zM83.5 451.3h1.3v1.3h-1.3zM248.0 452.0h1.3v1.3h-1.3zM485.6 452.8h1.3v1.3h-1.3zM440.6 450.2h1.3v1.3h-1.3zM98.7 451.2h1.3v1.3h-1.3zM356.1 449.9h1.3v1.3h-1.3zM92.5 449.3h1.3v1.3h-1.3zM335.5 453.1h1.3v1.3h-1.3zM300.3 453.1h1.3v1.3h-1.3zM170.8 451.2h1.3v1.3h-1.3zM411.3 452.0h1.3v1.3h-1.3zM89.1 449.6h1.3v1.3h-1.3zM210.7 450.1h1.3v1.3h-1.3zM362.1 448.8h1.3v1.3h-1.3zM291.8 448.8h1.3v1.3h-1.3zM43.4 448.5h1.3v1.3h-1.3zM69.2 449.4h1.3v1.3h-1.3zM198.7 451.1h1.3v1.3h-1.3zM282.6 451.6h1.3v1.3h-1.3zM44.7 451.1h1.3v1.3h-1.3zM316.8 453.5h1.3v1.3h-1.3zM57.1 453.7h1.3v1.3h-1.3zM634.1 449.7h1.3v1.3h-1.3zM133.7 449.8h1.3v1.3h-1.3zM164.7 451.5h1.3v1.3h-1.3zM221.8 452.9h1.3v1.3h-1.3zM218.9 451.2h1.3v1.3h-1.3zM164.4 453.6h1.3v1.3h-1.3zM328.7 454.6h1.3v1.3h-1.3zM93.2 451.1h1.3v1.3h-1.3zM158.6 454.6h1.3v1.3h-1.3zM330.5 450.0h1.3v1.3h-1.3zM472.2 450.6h1.3v1.3h-1.3zM155.2 453.7h1.3v1.3h-1.3zM198.4 451.9h1.3v1.3h-1.3zM634.3 452.2h1.3v1.3h-1.3zM139.8 453.1h1.3v1.3h-1.3zM180.3 447.7h1.3v1.3h-1.3zM423.0 453.1h1.3v1.3h-1.3zM112.2 450.6h1.3v1.3h-1.3zM294.6 447.5h1.3v1.3h-1.3zM522.9 449.2h1.3v1.3h-1.3zM43.7 454.1h1.3v1.3h-1.3zM97.7 452.1h1.3v1.3h-1.3zM181.6 455.8h1.3v1.3h-1.3zM290.0 454.8h1.3v1.3h-1.3zM267.4 450.3h1.3v1.3h-1.3zM159.6 451.8h1.3v1.3h-1.3zM302.5 449.2h1.3v1.3h-1.3zM245.8 452.3h1.3v1.3h-1.3zM226.4 449.8h1.3v1.3h-1.3zM149.4 447.9h1.3v1.3h-1.3zM290.7 449.3h1.3v1.3h-1.3zM93.7 449.7h1.3v1.3h-1.3zM386.1 450.5h1.3v1.3h-1.3zM187.2 449.9h1.3v1.3h-1.3zM159.6 452.3h1.3v1.3h-1.3zM375.6 450.6h1.3v1.3h-1.3zM97.2 451.6h1.3v1.3h-1.3zM507.3 453.4h1.3v1.3h-1.3zM257.3 456.5h1.3v1.3h-1.3zM139.1 453.2h1.3v1.3h-1.3zM469.0 450.9h1.3v1.3h-1.3zM249.6 451.5h1.3v1.3h-1.3zM370.1 451.5h1.3v1.3h-1.3zM164.3 454.2h1.3v1.3h-1.3zM123.0 451.3h1.3v1.3h-1.3zM160.3 452.4h1.3v1.3h-1.3zM161.2 453.7h1.3v1.3h-1.3zM360.8 450.4h1.3v1.3h-1.3zM219.9 449.9h1.3v1.3h-1.3zM226.1 455.4h1.3v1.3h-1.3zM72.3 454.6h1.3v1.3h-1.3zM99.7 450.5h1.3v1.3h-1.3zM340.4 456.5h1.3v1.3h-1.3zM123.1 450.6h1.3v1.3h-1.3zM534.6 451.8h1.3v1.3h-1.3zM303.7 454.0h1.3v1.3h-1.3zM87.4 449.4h1.3v1.3h-1.3zM292.1 454.2h1.3v1.3h-1.3zM612.4 451.8h1.3v1.3h-1.3zM373.3 451.2h1.3v1.3h-1.3zM241.8 453.9h1.3v1.3h-1.3zM74.6 448.6h1.3v1.3h-1.3zM221.9 454.1h1.3v1.3h-1.3zM489.2 455.7h1.3v1.3h-1.3zM240.2 451.5h1.3v1.3h-1.3zM120.5 453.5h1.3v1.3h-1.3zM344.5 453.0h1.3v1.3h-1.3zM410.8 452.1h1.3v1.3h-1.3zM227.8 452.9h1.3v1.3h-1.3zM114.3 450.3h1.3v1.3h-1.3zM77.8 448.9h1.3v1.3h-1.3zM54.5 448.4h1.3v1.3h-1.3zM246.9 449.4h1.3v1.3h-1.3zM208.9 452.4h1.3v1.3h-1.3zM181.5 453.0h1.3v1.3h-1.3zM178.8 450.3h1.3v1.3h-1.3zM301.0 450.9h1.3v1.3h-1.3zM130.9 453.8h1.3v1.3h-1.3zM50.8 453.1h1.3v1.3h-1.3zM248.5 450.1h1.3v1.3h-1.3zM333.2 453.1h1.3v1.3h-1.3zM351.0 449.6h1.3v1.3h-1.3zM503.5 451.3h1.3v1.3h-1.3zM126.9 453.5h1.3v1.3h-1.3zM324.9 454.2h1.3v1.3h-1.3zM326.5 450.7h1.3v1.3h-1.3zM534.5 450.9h1.3v1.3h-1.3zM239.2 451.9h1.3v1.3h-1.3zM486.1 450.0h1.3v1.3h-1.3zM517.1 452.2h1.3v1.3h-1.3zM260.9 454.3h1.3v1.3h-1.3zM137.7 451.0h1.3v1.3h-1.3zM158.1 452.7h1.3v1.3h-1.3zM363.9 454.4h1.3v1.3h-1.3zM427.8 450.5h1.3v1.3h-1.3zM324.4 453.5h1.3v1.3h-1.3zM551.6 451.6h1.3v1.3h-1.3zM413.9 449.4h1.3v1.3h-1.3zM118.7 448.2h1.3v1.3h-1.3zM370.3 451.6h1.3v1.3h-1.3zM398.7 450.4h1.3v1.3h-1.3zM99.7 451.0h1.3v1.3h-1.3zM60.4 454.7h1.3v1.3h-1.3zM230.8 450.1h1.3v1.3h-1.3zM102.7 451.2h1.3v1.3h-1.3zM256.6 450.4h1.3v1.3h-1.3zM540.5 450.2h1.3v1.3h-1.3zM233.7 450.3h1.3v1.3h-1.3zM369.8 447.4h1.3v1.3h-1.3zM259.6 449.5h1.3v1.3h-1.3zM615.5 451.7h1.3v1.3h-1.3zM357.4 454.5h1.3v1.3h-1.3zM488.7 453.6h1.3v1.3h-1.3zM288.9 453.0h1.3v1.3h-1.3zM379.3 451.4h1.3v1.3h-1.3zM205.8 451.4h1.3v1.3h-1.3zM525.9 448.0h1.3v1.3h-1.3zM146.2 451.2h1.3v1.3h-1.3zM223.2 455.7h1.3v1.3h-1.3zM438.5 453.8h1.3v1.3h-1.3zM164.8 448.7h1.3v1.3h-1.3zM576.1 454.5h1.3v1.3h-1.3zM333.0 452.0h1.3v1.3h-1.3zM378.8 449.5h1.3v1.3h-1.3zM114.0 451.4h1.3v1.3h-1.3zM329.5 451.8h1.3v1.3h-1.3zM327.5 450.8h1.3v1.3h-1.3zM318.1 452.7h1.3v1.3h-1.3zM460.6 451.2h1.3v1.3h-1.3zM94.6 450.5h1.3v1.3h-1.3zM428.6 453.3h1.3v1.3h-1.3zM549.1 451.9h1.3v1.3h-1.3zM303.3 453.4h1.3v1.3h-1.3zM407.7 452.6h1.3v1.3h-1.3zM147.0 450.7h1.3v1.3h-1.3zM585.2 449.6h1.3v1.3h-1.3zM621.8 451.7h1.3v1.3h-1.3zM511.6 452.1h1.3v1.3h-1.3zM127.9 452.2h1.3v1.3h-1.3zM281.0 451.5h1.3v1.3h-1.3zM319.1 447.1h1.3v1.3h-1.3zM185.8 453.1h1.3v1.3h-1.3zM111.7 449.6h1.3v1.3h-1.3zM133.4 452.2h1.3v1.3h-1.3zM96.5 448.5h1.3v1.3h-1.3zM129.5 451.4h1.3v1.3h-1.3zM99.3 454.5h1.3v1.3h-1.3zM87.0 455.3h1.3v1.3h-1.3zM102.5 452.9h1.3v1.3h-1.3zM70.4 448.3h1.3v1.3h-1.3zM155.4 453.0h1.3v1.3h-1.3zM226.5 452.3h1.3v1.3h-1.3zM256.3 450.2h1.3v1.3h-1.3zM216.5 454.7h1.3v1.3h-1.3zM397.5 452.9h1.3v1.3h-1.3zM487.4 451.1h1.3v1.3h-1.3zM380.0 449.5h1.3v1.3h-1.3zM74.7 449.3h1.3v1.3h-1.3zM53.5 454.3h1.3v1.3h-1.3zM94.7 456.3h1.3v1.3h-1.3zM116.4 450.7h1.3v1.3h-1.3zM75.8 450.4h1.3v1.3h-1.3zM100.3 450.3h1.3v1.3h-1.3zM158.6 451.3h1.3v1.3h-1.3zM184.0 453.3h1.3v1.3h-1.3zM181.5 448.3h1.3v1.3h-1.3zM122.2 449.1h1.3v1.3h-1.3zM577.6 454.0h1.3v1.3h-1.3zM366.4 452.8h1.3v1.3h-1.3zM205.2 451.0h1.3v1.3h-1.3zM349.2 453.7h1.3v1.3h-1.3zM66.0 449.0h1.3v1.3h-1.3zM125.8 451.2h1.3v1.3h-1.3zM337.2 448.4h1.3v1.3h-1.3zM569.2 451.2h1.3v1.3h-1.3zM66.2 449.9h1.3v1.3h-1.3zM270.8 451.9h1.3v1.3h-1.3zM153.8 447.5h1.3v1.3h-1.3zM167.0 449.8h1.3v1.3h-1.3zM199.5 455.5h1.3v1.3h-1.3zM505.3 450.9h1.3v1.3h-1.3zM432.4 451.7h1.3v1.3h-1.3zM167.3 450.7h1.3v1.3h-1.3zM410.5 452.1h1.3v1.3h-1.3zM177.2 450.6h1.3v1.3h-1.3zM174.9 448.3h1.3v1.3h-1.3zM108.1 451.8h1.3v1.3h-1.3zM201.2 452.0h1.3v1.3h-1.3zM398.4 453.9h1.3v1.3h-1.3zM227.5 451.0h1.3v1.3h-1.3zM164.6 451.1h1.3v1.3h-1.3zM239.9 451.4h1.3v1.3h-1.3zM554.1 455.5h1.3v1.3h-1.3zM415.6 451.8h1.3v1.3h-1.3zM319.1 451.4h1.3v1.3h-1.3zM343.2 448.3h1.3v1.3h-1.3zM545.4 448.7h1.3v1.3h-1.3zM159.2 453.2h1.3v1.3h-1.3zM311.2 452.0h1.3v1.3h-1.3zM368.8 450.8h1.3v1.3h-1.3zM431.2 450.0h1.3v1.3h-1.3zM83.9 453.2h1.3v1.3h-1.3zM397.4 450.0h1.3v1.3h-1.3zM396.9 451.7h1.3v1.3h-1.3zM45.8 450.8h1.3v1.3h-1.3zM240.5 452.2h1.3v1.3h-1.3zM64.3 456.5h1.3v1.3h-1.3zM397.8 453.2h1.3v1.3h-1.3zM180.7 450.0h1.3v1.3h-1.3zM187.9 452.5h1.3v1.3h-1.3zM565.1 451.0h1.3v1.3h-1.3zM68.8 454.3h1.3v1.3h-1.3zM539.9 451.7h1.3v1.3h-1.3zM390.5 453.9h1.3v1.3h-1.3zM360.1 454.1h1.3v1.3h-1.3zM312.0 454.8h1.3v1.3h-1.3zM150.9 450.3h1.3v1.3h-1.3zM235.7 452.3h1.3v1.3h-1.3zM374.8 451.9h1.3v1.3h-1.3zM264.3 451.3h1.3v1.3h-1.3zM391.7 452.3h1.3v1.3h-1.3zM80.5 450.5h1.3v1.3h-1.3zM185.4 448.6h1.3v1.3h-1.3zM78.4 453.2h1.3v1.3h-1.3zM532.4 453.0h1.3v1.3h-1.3zM45.2 451.1h1.3v1.3h-1.3zM414.9 454.5h1.3v1.3h-1.3zM244.2 446.0h1.3v1.3h-1.3zM183.9 445.4h1.3v1.3h-1.3zM560.6 453.5h1.3v1.3h-1.3zM152.5 454.2h1.3v1.3h-1.3zM130.7 451.8h1.3v1.3h-1.3zM308.4 450.5h1.3v1.3h-1.3zM256.8 450.7h1.3v1.3h-1.3zM71.1 451.4h1.3v1.3h-1.3zM135.7 451.0h1.3v1.3h-1.3zM260.6 451.9h1.3v1.3h-1.3zM406.4 449.6h1.3v1.3h-1.3zM388.0 454.7h1.3v1.3h-1.3zM189.6 453.3h1.3v1.3h-1.3zM244.2 452.4h1.3v1.3h-1.3zM302.6 452.1h1.3v1.3h-1.3zM513.7 452.8h1.3v1.3h-1.3zM53.1 450.6h1.3v1.3h-1.3zM122.7 449.4h1.3v1.3h-1.3zM422.2 454.6h1.3v1.3h-1.3zM438.3 448.3h1.3v1.3h-1.3zM641.3 449.4h1.3v1.3h-1.3zM361.5 451.6h1.3v1.3h-1.3zM313.9 455.2h1.3v1.3h-1.3zM404.8 450.3h1.3v1.3h-1.3zM161.4 450.0h1.3v1.3h-1.3zM459.0 450.4h1.3v1.3h-1.3zM270.2 455.3h1.3v1.3h-1.3zM205.1 453.6h1.3v1.3h-1.3zM95.4 452.8h1.3v1.3h-1.3zM324.5 450.8h1.3v1.3h-1.3zM512.5 449.2h1.3v1.3h-1.3zM265.8 448.7h1.3v1.3h-1.3zM287.7 451.7h1.3v1.3h-1.3zM243.8 454.5h1.3v1.3h-1.3zM520.3 450.7h1.3v1.3h-1.3zM120.9 449.4h1.3v1.3h-1.3zM359.2 452.7h1.3v1.3h-1.3zM192.5 454.2h1.3v1.3h-1.3zM159.3 450.1h1.3v1.3h-1.3zM424.9 454.7h1.3v1.3h-1.3zM248.7 447.4h1.3v1.3h-1.3zM100.1 451.6h1.3v1.3h-1.3zM84.3 449.8h1.3v1.3h-1.3zM308.6 453.6h1.3v1.3h-1.3zM218.7 446.8h1.3v1.3h-1.3zM344.6 450.5h1.3v1.3h-1.3zM157.4 454.9h1.3v1.3h-1.3zM244.9 451.4h1.3v1.3h-1.3zM305.3 448.9h1.3v1.3h-1.3zM151.1 453.7h1.3v1.3h-1.3zM299.3 456.5h1.3v1.3h-1.3zM197.8 450.8h1.3v1.3h-1.3zM430.9 452.2h1.3v1.3h-1.3zM424.6 450.3h1.3v1.3h-1.3zM235.2 453.5h1.3v1.3h-1.3zM358.3 451.3h1.3v1.3h-1.3zM420.2 454.6h1.3v1.3h-1.3zM322.5 452.5h1.3v1.3h-1.3zM89.7 451.1h1.3v1.3h-1.3zM340.1 445.7h1.3v1.3h-1.3zM251.0 453.4h1.3v1.3h-1.3zM300.9 446.9h1.3v1.3h-1.3zM108.8 454.0h1.3v1.3h-1.3zM446.0 452.5h1.3v1.3h-1.3zM502.4 453.3h1.3v1.3h-1.3zM73.5 451.8h1.3v1.3h-1.3zM72.1 453.1h1.3v1.3h-1.3zM262.8 449.0h1.3v1.3h-1.3zM194.4 450.7h1.3v1.3h-1.3zM355.3 449.7h1.3v1.3h-1.3zM209.4 451.4h1.3v1.3h-1.3zM235.6 453.6h1.3v1.3h-1.3zM176.2 453.4h1.3v1.3h-1.3zM80.5 453.5h1.3v1.3h-1.3zM471.7 451.3h1.3v1.3h-1.3zM548.1 448.0h1.3v1.3h-1.3zM287.0 450.9h1.3v1.3h-1.3zM372.5 453.1h1.3v1.3h-1.3zM72.5 452.3h1.3v1.3h-1.3zM330.5 448.9h1.3v1.3h-1.3zM175.9 455.1h1.3v1.3h-1.3zM233.3 448.3h1.3v1.3h-1.3zM553.8 452.0h1.3v1.3h-1.3zM204.0 452.6h1.3v1.3h-1.3zM268.4 450.9h1.3v1.3h-1.3zM49.2 451.0h1.3v1.3h-1.3zM172.1 454.8h1.3v1.3h-1.3zM473.7 449.7h1.3v1.3h-1.3zM428.3 451.0h1.3v1.3h-1.3zM197.6 452.0h1.3v1.3h-1.3zM187.3 455.2h1.3v1.3h-1.3zM174.6 449.5h1.3v1.3h-1.3zM363.4 450.9h1.3v1.3h-1.3zM108.8 450.7h1.3v1.3h-1.3zM212.9 453.3h1.3v1.3h-1.3zM85.5 453.5h1.3v1.3h-1.3zM96.2 450.4h1.3v1.3h-1.3zM352.3 450.5h1.3v1.3h-1.3zM490.1 456.0h1.3v1.3h-1.3zM407.6 452.2h1.3v1.3h-1.3zM45.8 452.3h1.3v1.3h-1.3zM54.2 454.5h1.3v1.3h-1.3zM244.7 453.1h1.3v1.3h-1.3zM212.9 454.8h1.3v1.3h-1.3zM608.4 453.2h1.3v1.3h-1.3zM185.7 452.2h1.3v1.3h-1.3zM283.0 452.4h1.3v1.3h-1.3zM537.8 451.3h1.3v1.3h-1.3zM301.5 453.6h1.3v1.3h-1.3zM374.6 454.0h1.3v1.3h-1.3zM151.9 451.3h1.3v1.3h-1.3zM142.0 446.9h1.3v1.3h-1.3zM257.1 447.7h1.3v1.3h-1.3zM435.7 450.8h1.3v1.3h-1.3zM213.7 454.6h1.3v1.3h-1.3zM45.7 451.0h1.3v1.3h-1.3zM169.0 450.0h1.3v1.3h-1.3zM135.0 453.9h1.3v1.3h-1.3zM450.3 455.2h1.3v1.3h-1.3zM483.0 453.8h1.3v1.3h-1.3zM524.1 454.5h1.3v1.3h-1.3zM432.0 451.7h1.3v1.3h-1.3zM280.9 452.5h1.3v1.3h-1.3zM429.9 451.8h1.3v1.3h-1.3zM467.9 447.6h1.3v1.3h-1.3zM77.5 452.1h1.3v1.3h-1.3zM80.3 451.1h1.3v1.3h-1.3zM254.0 448.4h1.3v1.3h-1.3zM325.4 451.8h1.3v1.3h-1.3zM116.2 447.7h1.3v1.3h-1.3zM253.1 452.3h1.3v1.3h-1.3zM385.5 452.4h1.3v1.3h-1.3zM616.6 449.6h1.3v1.3h-1.3zM315.8 451.8h1.3v1.3h-1.3zM195.8 452.9h1.3v1.3h-1.3zM441.8 452.8h1.3v1.3h-1.3zM501.3 455.2h1.3v1.3h-1.3zM236.8 450.7h1.3v1.3h-1.3zM114.6 449.6h1.3v1.3h-1.3zM249.4 450.9h1.3v1.3h-1.3zM185.4 451.3h1.3v1.3h-1.3zM325.0 450.1h1.3v1.3h-1.3zM414.0 453.8h1.3v1.3h-1.3zM464.7 446.9h1.3v1.3h-1.3zM175.6 448.2h1.3v1.3h-1.3zM165.4 451.7h1.3v1.3h-1.3zM78.5 452.7h1.3v1.3h-1.3zM438.3 452.2h1.3v1.3h-1.3zM229.5 448.5h1.3v1.3h-1.3zM501.4 454.6h1.3v1.3h-1.3zM221.7 451.1h1.3v1.3h-1.3zM185.2 452.1h1.3v1.3h-1.3zM301.2 454.3h1.3v1.3h-1.3zM390.2 451.8h1.3v1.3h-1.3zM184.8 452.4h1.3v1.3h-1.3zM284.9 450.7h1.3v1.3h-1.3zM503.9 451.1h1.3v1.3h-1.3zM217.9 451.4h1.3v1.3h-1.3zM336.9 450.7h1.3v1.3h-1.3zM397.2 449.0h1.3v1.3h-1.3zM71.7 452.4h1.3v1.3h-1.3zM553.6 449.5h1.3v1.3h-1.3zM369.3 453.0h1.3v1.3h-1.3zM208.1 452.2h1.3v1.3h-1.3zM328.3 452.5h1.3v1.3h-1.3zM502.8 446.7h1.3v1.3h-1.3zM280.0 451.7h1.3v1.3h-1.3zM253.0 455.2h1.3v1.3h-1.3zM330.0 452.4h1.3v1.3h-1.3zM134.0 448.5h1.3v1.3h-1.3zM372.3 451.1h1.3v1.3h-1.3zM293.9 450.4h1.3v1.3h-1.3zM349.1 449.9h1.3v1.3h-1.3zM54.7 453.7h1.3v1.3h-1.3zM134.2 451.4h1.3v1.3h-1.3zM310.9 451.7h1.3v1.3h-1.3zM480.1 456.5h1.3v1.3h-1.3zM238.5 450.5h1.3v1.3h-1.3zM346.1 453.2h1.3v1.3h-1.3zM294.4 450.9h1.3v1.3h-1.3zM512.9 453.7h1.3v1.3h-1.3zM144.2 450.3h1.3v1.3h-1.3zM178.8 449.3h1.3v1.3h-1.3zM133.5 448.9h1.3v1.3h-1.3zM142.2 451.5h1.3v1.3h-1.3zM375.9 456.5h1.3v1.3h-1.3zM160.4 450.6h1.3v1.3h-1.3zM558.4 450.3h1.3v1.3h-1.3zM235.7 451.8h1.3v1.3h-1.3zM359.8 452.0h1.3v1.3h-1.3zM544.8 452.8h1.3v1.3h-1.3zM94.0 453.4h1.3v1.3h-1.3zM59.8 455.6h1.3v1.3h-1.3zM195.4 451.7h1.3v1.3h-1.3zM190.1 450.3h1.3v1.3h-1.3zM110.2 454.4h1.3v1.3h-1.3zM186.7 449.3h1.3v1.3h-1.3zM253.5 451.3h1.3v1.3h-1.3zM124.8 450.8h1.3v1.3h-1.3zM493.4 451.2h1.3v1.3h-1.3zM558.8 449.8h1.3v1.3h-1.3zM517.1 449.7h1.3v1.3h-1.3zM151.3 446.6h1.3v1.3h-1.3zM409.1 453.0h1.3v1.3h-1.3zM341.4 456.1h1.3v1.3h-1.3zM349.7 452.1h1.3v1.3h-1.3zM600.5 451.6h1.3v1.3h-1.3zM394.8 452.6h1.3v1.3h-1.3zM185.5 452.8h1.3v1.3h-1.3zM171.8 454.3h1.3v1.3h-1.3zM565.2 451.9h1.3v1.3h-1.3zM252.5 450.8h1.3v1.3h-1.3zM418.5 450.3h1.3v1.3h-1.3zM316.0 453.5h1.3v1.3h-1.3zM361.5 452.0h1.3v1.3h-1.3zM255.9 453.1h1.3v1.3h-1.3zM126.0 447.1h1.3v1.3h-1.3zM241.4 450.5h1.3v1.3h-1.3zM245.4 452.5h1.3v1.3h-1.3zM233.4 450.2h1.3v1.3h-1.3zM549.4 451.3h1.3v1.3h-1.3zM547.7 455.0h1.3v1.3h-1.3zM393.8 452.2h1.3v1.3h-1.3zM330.6 454.8h1.3v1.3h-1.3zM388.3 454.4h1.3v1.3h-1.3zM149.4 451.2h1.3v1.3h-1.3zM73.9 447.3h1.3v1.3h-1.3zM504.8 451.4h1.3v1.3h-1.3zM194.5 452.3h1.3v1.3h-1.3zM536.2 449.3h1.3v1.3h-1.3zM209.1 452.2h1.3v1.3h-1.3zM267.6 452.9h1.3v1.3h-1.3zM485.4 448.5h1.3v1.3h-1.3zM327.1 453.1h1.3v1.3h-1.3zM296.8 452.9h1.3v1.3h-1.3zM250.0 451.0h1.3v1.3h-1.3zM444.8 451.7h1.3v1.3h-1.3zM215.3 447.6h1.3v1.3h-1.3zM132.9 446.2h1.3v1.3h-1.3zM140.0 448.1h1.3v1.3h-1.3zM381.5 452.7h1.3v1.3h-1.3zM165.5 451.7h1.3v1.3h-1.3zM304.9 453.6h1.3v1.3h-1.3zM172.2 453.3h1.3v1.3h-1.3zM480.6 454.5h1.3v1.3h-1.3zM173.2 453.5h1.3v1.3h-1.3zM500.4 451.4h1.3v1.3h-1.3zM231.1 453.3h1.3v1.3h-1.3zM384.3 450.3h1.3v1.3h-1.3zM334.4 447.8h1.3v1.3h-1.3zM343.9 450.2h1.3v1.3h-1.3zM504.9 450.2h1.3v1.3h-1.3zM555.5 454.6h1.3v1.3h-1.3zM504.1 453.3h1.3v1.3h-1.3zM572.0 449.9h1.3v1.3h-1.3zM180.1 452.0h1.3v1.3h-1.3zM308.4 450.8h1.3v1.3h-1.3zM82.0 454.9h1.3v1.3h-1.3zM45.1 452.3h1.3v1.3h-1.3zM220.0 449.1h1.3v1.3h-1.3zM181.3 451.9h1.3v1.3h-1.3zM163.3 450.3h1.3v1.3h-1.3zM213.6 452.4h1.3v1.3h-1.3zM126.0 450.6h1.3v1.3h-1.3zM62.6 449.4h1.3v1.3h-1.3zM45.4 454.8h1.3v1.3h-1.3zM400.8 450.4h1.3v1.3h-1.3zM496.8 451.7h1.3v1.3h-1.3zM110.6 448.0h1.3v1.3h-1.3zM434.8 452.1h1.3v1.3h-1.3zM278.2 449.3h1.3v1.3h-1.3zM256.9 451.0h1.3v1.3h-1.3zM198.9 452.3h1.3v1.3h-1.3zM363.5 450.9h1.3v1.3h-1.3zM301.5 447.3h1.3v1.3h-1.3zM242.4 455.8h1.3v1.3h-1.3zM242.5 449.3h1.3v1.3h-1.3zM150.9 454.0h1.3v1.3h-1.3zM370.8 453.0h1.3v1.3h-1.3zM297.0 453.4h1.3v1.3h-1.3zM301.0 453.0h1.3v1.3h-1.3zM139.1 450.5h1.3v1.3h-1.3zM48.4 451.1h1.3v1.3h-1.3zM189.3 446.9h1.3v1.3h-1.3zM107.8 452.5h1.3v1.3h-1.3zM220.0 451.6h1.3v1.3h-1.3zM384.1 447.3h1.3v1.3h-1.3zM272.8 452.4h1.3v1.3h-1.3zM208.5 451.3h1.3v1.3h-1.3zM227.0 450.1h1.3v1.3h-1.3zM531.0 449.8h1.3v1.3h-1.3zM429.6 451.2h1.3v1.3h-1.3zM534.1 448.9h1.3v1.3h-1.3zM299.6 453.0h1.3v1.3h-1.3zM141.4 449.7h1.3v1.3h-1.3zM170.6 454.6h1.3v1.3h-1.3zM239.9 453.7h1.3v1.3h-1.3zM480.5 452.4h1.3v1.3h-1.3zM198.8 451.8h1.3v1.3h-1.3zM446.5 450.8h1.3v1.3h-1.3zM540.0 447.5h1.3v1.3h-1.3zM370.9 455.7h1.3v1.3h-1.3zM164.8 455.3h1.3v1.3h-1.3zM263.1 450.3h1.3v1.3h-1.3zM87.3 452.5h1.3v1.3h-1.3zM347.7 450.0h1.3v1.3h-1.3zM313.3 453.7h1.3v1.3h-1.3zM394.9 447.6h1.3v1.3h-1.3zM118.8 452.5h1.3v1.3h-1.3zM455.1 451.6h1.3v1.3h-1.3zM183.0 453.4h1.3v1.3h-1.3zM75.0 450.4h1.3v1.3h-1.3zM191.1 451.6h1.3v1.3h-1.3zM263.0 451.1h1.3v1.3h-1.3zM48.5 448.4h1.3v1.3h-1.3zM124.3 451.8h1.3v1.3h-1.3zM139.4 453.1h1.3v1.3h-1.3zM215.3 449.9h1.3v1.3h-1.3zM160.3 452.9h1.3v1.3h-1.3zM310.0 450.3h1.3v1.3h-1.3zM46.8 450.6h1.3v1.3h-1.3zM117.5 451.9h1.3v1.3h-1.3zM440.6 448.3h1.3v1.3h-1.3zM393.7 449.9h1.3v1.3h-1.3zM48.2 451.8h1.3v1.3h-1.3zM313.1 449.0h1.3v1.3h-1.3zM247.1 453.1h1.3v1.3h-1.3zM266.0 454.9h1.3v1.3h-1.3zM352.0 454.3h1.3v1.3h-1.3zM81.3 451.7h1.3v1.3h-1.3zM127.4 451.2h1.3v1.3h-1.3zM479.6 450.4h1.3v1.3h-1.3zM348.7 453.6h1.3v1.3h-1.3zM241.5 451.5h1.3v1.3h-1.3zM229.3 453.3h1.3v1.3h-1.3zM351.5 453.2h1.3v1.3h-1.3zM146.8 455.9h1.3v1.3h-1.3zM219.8 450.6h1.3v1.3h-1.3zM150.2 451.5h1.3v1.3h-1.3zM231.4 453.5h1.3v1.3h-1.3zM391.0 455.2h1.3v1.3h-1.3zM181.9 451.0h1.3v1.3h-1.3zM55.4 451.6h1.3v1.3h-1.3zM421.5 453.5h1.3v1.3h-1.3zM54.6 449.5h1.3v1.3h-1.3zM304.9 447.2h1.3v1.3h-1.3zM169.6 453.9h1.3v1.3h-1.3zM552.1 451.2h1.3v1.3h-1.3zM89.4 451.4h1.3v1.3h-1.3zM50.5 449.2h1.3v1.3h-1.3zM48.9 448.9h1.3v1.3h-1.3zM96.4 451.9h1.3v1.3h-1.3zM124.1 452.9h1.3v1.3h-1.3zM246.0 451.5h1.3v1.3h-1.3zM136.3 449.3h1.3v1.3h-1.3zM223.3 451.3h1.3v1.3h-1.3zM99.0 453.0h1.3v1.3h-1.3zM450.2 452.7h1.3v1.3h-1.3zM175.3 450.0h1.3v1.3h-1.3zM96.4 453.4h1.3v1.3h-1.3zM61.4 449.8h1.3v1.3h-1.3zM140.3 453.9h1.3v1.3h-1.3zM176.7 453.0h1.3v1.3h-1.3zM281.2 452.4h1.3v1.3h-1.3zM227.2 455.8h1.3v1.3h-1.3zM207.6 451.8h1.3v1.3h-1.3zM285.5 453.6h1.3v1.3h-1.3zM209.0 454.9h1.3v1.3h-1.3zM250.5 451.4h1.3v1.3h-1.3zM86.2 454.4h1.3v1.3h-1.3zM407.4 454.7h1.3v1.3h-1.3zM239.6 449.9h1.3v1.3h-1.3zM438.4 450.5h1.3v1.3h-1.3zM242.0 450.4h1.3v1.3h-1.3zM127.6 452.0h1.3v1.3h-1.3zM439.7 449.5h1.3v1.3h-1.3zM176.6 450.1h1.3v1.3h-1.3zM334.7 449.0h1.3v1.3h-1.3zM59.9 449.9h1.3v1.3h-1.3zM572.0 454.2h1.3v1.3h-1.3zM205.3 447.6h1.3v1.3h-1.3zM349.6 450.4h1.3v1.3h-1.3zM313.7 448.7h1.3v1.3h-1.3zM136.7 454.6h1.3v1.3h-1.3zM64.1 450.4h1.3v1.3h-1.3zM348.2 454.8h1.3v1.3h-1.3zM219.6 454.3h1.3v1.3h-1.3zM242.3 450.9h1.3v1.3h-1.3zM140.9 452.9h1.3v1.3h-1.3zM260.3 449.5h1.3v1.3h-1.3zM279.0 452.0h1.3v1.3h-1.3zM373.5 451.1h1.3v1.3h-1.3zM324.6 450.2h1.3v1.3h-1.3zM279.6 450.5h1.3v1.3h-1.3zM369.4 450.8h1.3v1.3h-1.3zM241.8 452.9h1.3v1.3h-1.3zM552.9 451.0h1.3v1.3h-1.3zM363.3 452.8h1.3v1.3h-1.3zM177.4 451.1h1.3v1.3h-1.3zM253.2 454.7h1.3v1.3h-1.3zM262.0 452.3h1.3v1.3h-1.3zM238.3 447.6h1.3v1.3h-1.3zM262.2 449.8h1.3v1.3h-1.3zM497.3 450.9h1.3v1.3h-1.3zM275.1 451.2h1.3v1.3h-1.3zM534.1 449.8h1.3v1.3h-1.3zM64.7 451.3h1.3v1.3h-1.3zM77.4 454.4h1.3v1.3h-1.3zM416.0 450.9h1.3v1.3h-1.3zM83.6 449.4h1.3v1.3h-1.3zM321.4 452.7h1.3v1.3h-1.3zM178.6 453.9h1.3v1.3h-1.3zM282.4 451.0h1.3v1.3h-1.3zM365.9 456.5h1.3v1.3h-1.3zM616.8 451.8h1.3v1.3h-1.3zM251.0 448.6h1.3v1.3h-1.3zM149.7 453.0h1.3v1.3h-1.3zM78.8 450.7h1.3v1.3h-1.3zM443.0 447.7h1.3v1.3h-1.3zM242.9 449.9h1.3v1.3h-1.3zM567.1 453.8h1.3v1.3h-1.3zM363.5 448.3h1.3v1.3h-1.3zM67.3 450.1h1.3v1.3h-1.3zM497.6 451.8h1.3v1.3h-1.3zM368.6 452.2h1.3v1.3h-1.3zM143.4 453.7h1.3v1.3h-1.3zM327.7 451.0h1.3v1.3h-1.3zM380.9 452.0h1.3v1.3h-1.3zM294.3 450.8h1.3v1.3h-1.3zM425.5 452.2h1.3v1.3h-1.3zM234.7 452.7h1.3v1.3h-1.3zM155.1 451.7h1.3v1.3h-1.3zM328.0 455.8h1.3v1.3h-1.3zM346.0 451.9h1.3v1.3h-1.3zM166.0 451.1h1.3v1.3h-1.3zM358.0 451.7h1.3v1.3h-1.3zM252.9 449.5h1.3v1.3h-1.3zM195.8 449.6h1.3v1.3h-1.3zM524.0 452.3h1.3v1.3h-1.3zM584.5 449.7h1.3v1.3h-1.3zM531.3 452.1h1.3v1.3h-1.3zM391.9 450.4h1.3v1.3h-1.3zM342.8 451.9h1.3v1.3h-1.3zM380.5 454.1h1.3v1.3h-1.3zM350.8 451.1h1.3v1.3h-1.3zM266.3 451.3h1.3v1.3h-1.3zM277.3 451.8h1.3v1.3h-1.3zM276.7 448.3h1.3v1.3h-1.3zM318.7 451.3h1.3v1.3h-1.3zM77.1 453.8h1.3v1.3h-1.3zM91.6 451.0h1.3v1.3h-1.3zM421.4 452.5h1.3v1.3h-1.3zM149.8 455.8h1.3v1.3h-1.3zM207.2 449.2h1.3v1.3h-1.3zM97.3 453.6h1.3v1.3h-1.3zM223.6 453.4h1.3v1.3h-1.3zM148.3 450.8h1.3v1.3h-1.3zM461.2 452.9h1.3v1.3h-1.3zM255.5 451.4h1.3v1.3h-1.3zM439.7 446.4h1.3v1.3h-1.3zM203.2 449.5h1.3v1.3h-1.3zM65.3 452.0h1.3v1.3h-1.3zM258.3 448.6h1.3v1.3h-1.3zM236.8 453.0h1.3v1.3h-1.3zM339.1 451.9h1.3v1.3h-1.3zM378.7 447.8h1.3v1.3h-1.3zM200.6 452.4h1.3v1.3h-1.3zM261.2 452.9h1.3v1.3h-1.3zM101.2 454.2h1.3v1.3h-1.3zM122.6 452.6h1.3v1.3h-1.3zM260.0 448.5h1.3v1.3h-1.3zM96.2 455.0h1.3v1.3h-1.3zM490.8 450.6h1.3v1.3h-1.3zM439.1 451.4h1.3v1.3h-1.3zM591.2 454.1h1.3v1.3h-1.3zM226.8 451.3h1.3v1.3h-1.3zM325.7 449.0h1.3v1.3h-1.3zM139.5 451.1h1.3v1.3h-1.3zM301.4 436.2h1.3v1.3h-1.3zM348.0 422.8h1.3v1.3h-1.3zM600.5 445.3h1.3v1.3h-1.3zM181.9 442.0h1.3v1.3h-1.3zM286.7 432.3h1.3v1.3h-1.3zM489.9 424.2h1.3v1.3h-1.3zM587.9 430.3h1.3v1.3h-1.3zM384.8 444.6h1.3v1.3h-1.3zM211.7 445.0h1.3v1.3h-1.3zM270.6 439.0h1.3v1.3h-1.3zM166.2 423.5h1.3v1.3h-1.3zM618.5 429.8h1.3v1.3h-1.3zM327.5 432.2h1.3v1.3h-1.3zM182.1 428.6h1.3v1.3h-1.3zM173.4 438.2h1.3v1.3h-1.3zM89.8 443.8h1.3v1.3h-1.3zM341.2 424.2h1.3v1.3h-1.3zM536.7 433.7h1.3v1.3h-1.3zM95.8 426.8h1.3v1.3h-1.3zM97.6 441.0h1.3v1.3h-1.3zM173.6 441.4h1.3v1.3h-1.3zM446.0 424.1h1.3v1.3h-1.3zM92.2 426.3h1.3v1.3h-1.3zM238.2 427.8h1.3v1.3h-1.3zM457.3 445.5h1.3v1.3h-1.3zM249.0 434.0h1.3v1.3h-1.3zM262.1 439.1h1.3v1.3h-1.3zM128.4 430.5h1.3v1.3h-1.3zM217.3 425.5h1.3v1.3h-1.3zM327.9 430.8h1.3v1.3h-1.3z"/>
<path fill="#dcc850" fill-opacity="0.9" d="M174.1 457.4h1.3v1.3h-1.3zM286.6 454.8h1.3v1.3h-1.3zM490.4 453.6h1.3v1.3h-1.3zM60.2 454.9h1.3v1.3h-1.3zM112.1 449.6h1.3v1.3h-1.3zM467.0 456.5h1.3v1.3h-1.3zM147.6 452.7h1.3v1.3h-1.3zM471.5 452.4h1.3v1.3h-1.3zM422.7 457.4h1.3v1.3h-1.3zM380.1 448.8h1.3v1.3h-1.3zM187.3 455.2h1.3v1.3h-1.3zM105.3 450.8h1.3v1.3h-1.3zM145.2 453.2h1.3v1.3h-1.3zM419.8 454.2h1.3v1.3h-1.3zM150.1 454.0h1.3v1.3h-1.3zM62.2 457.0h1.3v1.3h-1.3zM348.4 449.7h1.3v1.3h-1.3zM492.7 447.5h1.3v1.3h-1.3zM53.3 451.3h1.3v1.3h-1.3zM442.9 450.8h1.3v1.3h-1.3zM323.0 454.6h1.3v1.3h-1.3zM308.9 450.4h1.3v1.3h-1.3zM147.8 448.2h1.3v1.3h-1.3zM158.2 457.7h1.3v1.3h-1.3zM183.3 450.8h1.3v1.3h-1.3zM352.2 450.3h1.3v1.3h-1.3zM49.9 454.7h1.3v1.3h-1.3zM153.6 450.3h1.3v1.3h-1.3zM324.3 449.6h1.3v1.3h-1.3zM349.4 451.5h1.3v1.3h-1.3zM314.5 448.8h1.3v1.3h-1.3zM534.2 452.1h1.3v1.3h-1.3zM320.0 454.9h1.3v1.3h-1.3zM47.7 455.6h1.3v1.3h-1.3zM153.4 455.1h1.3v1.3h-1.3zM435.7 455.6h1.3v1.3h-1.3zM230.0 457.5h1.3v1.3h-1.3zM392.8 455.9h1.3v1.3h-1.3zM285.9 449.7h1.3v1.3h-1.3zM390.7 447.7h1.3v1.3h-1.3zM92.0 454.2h1.3v1.3h-1.3zM291.4 455.5h1.3v1.3h-1.3zM538.9 451.7h1.3v1.3h-1.3zM194.2 449.5h1.3v1.3h-1.3zM207.9 453.4h1.3v1.3h-1.3zM105.3 450.2h1.3v1.3h-1.3zM458.4 454.0h1.3v1.3h-1.3zM101.9 454.2h1.3v1.3h-1.3zM430.7 454.5h1.3v1.3h-1.3zM342.9 457.4h1.3v1.3h-1.3zM241.5 455.0h1.3v1.3h-1.3zM264.4 454.0h1.3v1.3h-1.3zM467.1 447.9h1.3v1.3h-1.3zM91.7 450.3h1.3v1.3h-1.3zM448.3 454.9h1.3v1.3h-1.3zM485.8 449.5h1.3v1.3h-1.3zM460.5 452.0h1.3v1.3h-1.3zM219.6 454.1h1.3v1.3h-1.3zM367.7 455.7h1.3v1.3h-1.3zM420.1 455.5h1.3v1.3h-1.3zM99.2 456.2h1.3v1.3h-1.3zM212.8 452.4h1.3v1.3h-1.3zM332.4 452.5h1.3v1.3h-1.3zM524.3 456.4h1.3v1.3h-1.3zM157.1 452.9h1.3v1.3h-1.3zM485.3 454.9h1.3v1.3h-1.3zM487.5 455.6h1.3v1.3h-1.3zM321.3 457.0h1.3v1.3h-1.3zM268.0 456.3h1.3v1.3h-1.3zM157.0 452.1h1.3v1.3h-1.3zM205.3 450.1h1.3v1.3h-1.3zM79.2 455.8h1.3v1.3h-1.3zM82.4 456.2h1.3v1.3h-1.3zM432.0 448.0h1.3v1.3h-1.3zM561.9 455.0h1.3v1.3h-1.3zM353.9 449.6h1.3v1.3h-1.3zM162.5 451.7h1.3v1.3h-1.3zM259.1 447.8h1.3v1.3h-1.3zM317.6 449.2h1.3v1.3h-1.3zM227.8 448.3h1.3v1.3h-1.3zM527.3 449.8h1.3v1.3h-1.3zM115.2 451.9h1.3v1.3h-1.3zM233.4 451.9h1.3v1.3h-1.3zM146.3 457.4h1.3v1.3h-1.3zM380.1 455.7h1.3v1.3h-1.3zM352.2 450.7h1.3v1.3h-1.3zM126.3 453.5h1.3v1.3h-1.3zM164.5 448.1h1.3v1.3h-1.3zM58.5 448.5h1.3v1.3h-1.3zM259.1 449.5h1.3v1.3h-1.3zM385.7 450.5h1.3v1.3h-1.3zM50.0 448.4h1.3v1.3h-1.3zM345.0 452.3h1.3v1.3h-1.3zM218.1 448.8h1.3v1.3h-1.3zM220.4 451.6h1.3v1.3h-1.3zM482.6 449.2h1.3v1.3h-1.3zM323.1 454.1h1.3v1.3h-1.3zM325.6 457.5h1.3v1.3h-1.3zM235.3 448.8h1.3v1.3h-1.3zM290.7 454.8h1.3v1.3h-1.3zM121.8 449.9h1.3v1.3h-1.3zM377.5 450.3h1.3v1.3h-1.3zM163.1 453.3h1.3v1.3h-1.3zM564.2 449.7h1.3v1.3h-1.3zM110.5 449.4h1.3v1.3h-1.3zM179.2 451.8h1.3v1.3h-1.3zM209.0 456.7h1.3v1.3h-1.3zM362.9 457.4h1.3v1.3h-1.3zM436.2 450.0h1.3v1.3h-1.3zM406.2 453.9h1.3v1.3h-1.3zM386.2 449.7h1.3v1.3h-1.3zM312.5 449.4h1.3v1.3h-1.3zM255.0 452.3h1.3v1.3h-1.3zM340.5 454.7h1.3v1.3h-1.3zM50.5 454.2h1.3v1.3h-1.3zM111.4 454.0h1.3v1.3h-1.3zM165.2 449.9h1.3v1.3h-1.3zM347.9 452.5h1.3v1.3h-1.3zM312.9 457.5h1.3v1.3h-1.3zM408.6 447.5h1.3v1.3h-1.3zM196.7 452.3h1.3v1.3h-1.3zM473.6 455.0h1.3v1.3h-1.3zM160.1 451.9h1.3v1.3h-1.3zM213.4 455.2h1.3v1.3h-1.3zM57.6 449.9h1.3v1.3h-1.3zM238.6 448.2h1.3v1.3h-1.3zM206.8 448.3h1.3v1.3h-1.3zM231.7 454.6h1.3v1.3h-1.3zM151.6 454.3h1.3v1.3h-1.3zM142.1 451.4h1.3v1.3h-1.3zM188.7 455.6h1.3v1.3h-1.3zM73.4 448.1h1.3v1.3h-1.3zM229.4 454.7h1.3v1.3h-1.3zM480.8 454.3h1.3v1.3h-1.3zM157.7 448.1h1.3v1.3h-1.3zM250.5 452.9h1.3v1.3h-1.3zM298.3 455.3h1.3v1.3h-1.3zM481.0 451.2h1.3v1.3h-1.3zM601.8 447.7h1.3v1.3h-1.3zM150.4 457.6h1.3v1.3h-1.3zM294.0 455.4h1.3v1.3h-1.3zM129.5 455.7h1.3v1.3h-1.3zM484.3 449.5h1.3v1.3h-1.3zM259.5 457.1h1.3v1.3h-1.3zM352.8 456.3h1.3v1.3h-1.3zM65.5 454.3h1.3v1.3h-1.3zM404.1 447.8h1.3v1.3h-1.3zM342.3 447.5h1.3v1.3h-1.3zM130.2 450.1h1.3v1.3h-1.3zM152.1 457.5h1.3v1.3h-1.3zM271.2 453.9h1.3v1.3h-1.3zM107.9 453.4h1.3v1.3h-1.3zM326.3 454.0h1.3v1.3h-1.3zM482.8 457.6h1.3v1.3h-1.3zM245.1 456.8h1.3v1.3h-1.3zM231.2 448.9h1.3v1.3h-1.3zM406.1 451.3h1.3v1.3h-1.3zM159.0 456.5h1.3v1.3h-1.3zM194.7 453.2h1.3v1.3h-1.3zM153.3 447.7h1.3v1.3h-1.3zM389.3 447.8h1.3v1.3h-1.3zM349.3 454.5h1.3v1.3h-1.3zM408.7 448.2h1.3v1.3h-1.3zM329.6 452.1h1.3v1.3h-1.3zM45.1 457.6h1.3v1.3h-1.3zM512.0 451.5h1.3v1.3h-1.3zM136.4 452.4h1.3v1.3h-1.3zM462.8 448.2h1.3v1.3h-1.3zM100.6 449.3h1.3v1.3h-1.3zM245.5 450.6h1.3v1.3h-1.3zM112.3 454.8h1.3v1.3h-1.3zM538.4 450.3h1.3v1.3h-1.3zM291.5 455.2h1.3v1.3h-1.3zM284.7 450.4h1.3v1.3h-1.3zM375.2 452.3h1.3v1.3h-1.3zM93.0 449.0h1.3v1.3h-1.3zM153.7 447.9h1.3v1.3h-1.3zM112.0 452.1h1.3v1.3h-1.3zM376.2 455.6h1.3v1.3h-1.3zM230.4 447.8h1.3v1.3h-1.3zM147.8 447.6h1.3v1.3h-1.3zM123.1 453.8h1.3v1.3h-1.3zM388.0 448.8h1.3v1.3h-1.3zM610.7 449.5h1.3v1.3h-1.3zM179.3 449.3h1.3v1.3h-1.3zM118.5 448.2h1.3v1.3h-1.3zM296.7 449.9h1.3v1.3h-1.3zM269.0 450.6h1.3v1.3h-1.3zM57.2 452.8h1.3v1.3h-1.3zM386.2 452.3h1.3v1.3h-1.3zM315.7 456.9h1.3v1.3h-1.3zM221.1 449.8h1.3v1.3h-1.3zM453.1 448.1h1.3v1.3h-1.3zM288.0 447.6h1.3v1.3h-1.3zM201.7 452.6h1.3v1.3h-1.3zM126.5 449.1h1.3v1.3h-1.3zM153.9 452.3h1.3v1.3h-1.3zM174.9 456.4h1.3v1.3h-1.3zM526.6 448.6h1.3v1.3h-1.3zM211.9 450.9h1.3v1.3h-1.3zM211.2 451.7h1.3v1.3h-1.3zM484.3 454.2h1.3v1.3h-1.3zM430.5 452.2h1.3v1.3h-1.3zM291.5 454.5h1.3v1.3h-1.3zM78.2 454.5h1.3v1.3h-1.3zM87.3 448.0h1.3v1.3h-1.3zM354.8 457.2h1.3v1.3h-1.3zM389.0 457.4h1.3v1.3h-1.3zM379.3 451.8h1.3v1.3h-1.3zM110.7 451.4h1.3v1.3h-1.3zM44.6 453.8h1.3v1.3h-1.3zM134.4 449.3h1.3v1.3h-1.3zM186.0 454.2h1.3v1.3h-1.3zM232.3 451.4h1.3v1.3h-1.3zM266.5 454.1h1.3v1.3h-1.3zM279.0 450.9h1.3v1.3h-1.3zM44.6 450.5h1.3v1.3h-1.3zM165.9 449.0h1.3v1.3h-1.3zM495.5 452.7h1.3v1.3h-1.3zM127.2 452.3h1.3v1.3h-1.3zM78.8 452.7h1.3v1.3h-1.3zM407.2 450.8h1.3v1.3h-1.3zM351.8 457.9h1.3v1.3h-1.3zM485.9 449.1h1.3v1.3h-1.3zM248.5 449.7h1.3v1.3h-1.3zM370.5 453.8h1.3v1.3h-1.3zM306.6 451.7h1.3v1.3h-1.3zM541.5 450.5h1.3v1.3h-1.3zM150.9 451.6h1.3v1.3h-1.3zM589.7 456.8h1.3v1.3h-1.3zM162.5 456.2h1.3v1.3h-1.3zM374.9 450.6h1.3v1.3h-1.3zM307.5 452.3h1.3v1.3h-1.3zM113.6 455.1h1.3v1.3h-1.3zM352.6 454.9h1.3v1.3h-1.3zM285.0 454.7h1.3v1.3h-1.3zM462.1 456.7h1.3v1.3h-1.3zM177.6 448.1h1.3v1.3h-1.3zM318.9 448.5h1.3v1.3h-1.3zM244.9 449.4h1.3v1.3h-1.3zM463.9 448.1h1.3v1.3h-1.3zM330.0 457.0h1.3v1.3h-1.3zM135.2 450.5h1.3v1.3h-1.3zM396.4 454.2h1.3v1.3h-1.3zM97.7 449.8h1.3v1.3h-1.3zM127.8 453.0h1.3v1.3h-1.3zM57.5 456.1h1.3v1.3h-1.3zM100.0 450.1h1.3v1.3h-1.3zM268.3 450.7h1.3v1.3h-1.3zM334.4 454.3h1.3v1.3h-1.3zM134.9 455.6h1.3v1.3h-1.3zM356.5 450.3h1.3v1.3h-1.3zM219.5 450.0h1.3v1.3h-1.3zM118.0 448.9h1.3v1.3h-1.3zM235.1 455.2h1.3v1.3h-1.3zM53.2 453.7h1.3v1.3h-1.3zM555.0 448.5h1.3v1.3h-1.3zM232.2 453.1h1.3v1.3h-1.3zM297.7 456.0h1.3v1.3h-1.3zM61.3 456.3h1.3v1.3h-1.3zM396.0 459.5h1.3v1.3h-1.3zM215.0 460.4h1.3v1.3h-1.3zM211.7 459.8h1.3v1.3h-1.3zM151.8 459.0h1.3v1.3h-1.3zM380.2 460.2h1.3v1.3h-1.3zM535.1 460.2h1.3v1.3h-1.3zM246.9 459.5h1.3v1.3h-1.3zM164.6 458.8h1.3v1.3h-1.3zM557.9 460.5h1.3v1.3h-1.3zM415.0 459.0h1.3v1.3h-1.3zM344.0 458.9h1.3v1.3h-1.3zM464.0 460.2h1.3v1.3h-1.3zM395.3 459.9h1.3v1.3h-1.3zM395.6 459.0h1.3v1.3h-1.3zM280.7 460.4h1.3v1.3h-1.3zM233.6 458.8h1.3v1.3h-1.3zM296.6 459.1h1.3v1.3h-1.3zM525.5 460.0h1.3v1.3h-1.3zM430.7 459.6h1.3v1.3h-1.3zM475.1 460.6h1.3v1.3h-1.3zM348.7 460.4h1.3v1.3h-1.3zM574.0 459.0h1.3v1.3h-1.3zM405.7 460.1h1.3v1.3h-1.3zM237.1 458.9h1.3v1.3h-1.3zM529.9 459.7h1.3v1.3h-1.3zM199.4 460.4h1.3v1.3h-1.3zM508.4 460.6h1.3v1.3h-1.3zM392.4 459.4h1.3v1.3h-1.3zM390.2 458.8h1.3v1.3h-1.3zM100.1 460.5h1.3v1.3h-1.3zM148.8 459.5h1.3v1.3h-1.3zM466.8 460.3h1.3v1.3h-1.3zM516.5 459.9h1.3v1.3h-1.3zM158.6 459.7h1.3v1.3h-1.3zM173.6 459.6h1.3v1.3h-1.3zM555.4 458.8h1.3v1.3h-1.3zM193.9 458.9h1.3v1.3h-1.3zM333.5 458.6h1.3v1.3h-1.3zM517.7 460.4h1.3v1.3h-1.3zM276.3 460.5h1.3v1.3h-1.3zM498.2 459.9h1.3v1.3h-1.3zM568.1 459.9h1.3v1.3h-1.3zM482.4 459.6h1.3v1.3h-1.3zM313.2 460.1h1.3v1.3h-1.3zM533.3 459.5h1.3v1.3h-1.3zM252.5 459.3h1.3v1.3h-1.3zM330.1 460.1h1.3v1.3h-1.3zM148.1 459.3h1.3v1.3h-1.3zM183.3 459.4h1.3v1.3h-1.3zM48.6 459.2h1.3v1.3h-1.3zM94.6 458.8h1.3v1.3h-1.3zM276.8 459.5h1.3v1.3h-1.3zM381.2 458.9h1.3v1.3h-1.3zM314.4 459.4h1.3v1.3h-1.3zM252.9 460.6h1.3v1.3h-1.3zM230.4 459.6h1.3v1.3h-1.3zM259.9 459.4h1.3v1.3h-1.3zM435.2 460.6h1.3v1.3h-1.3zM398.8 459.4h1.3v1.3h-1.3zM394.8 458.6h1.3v1.3h-1.3z"/>
<path fill="#9a2c22" fill-opacity="0.9" d="M454.9 458.2h1.3v1.3h-1.3zM88.5 455.9h1.3v1.3h-1.3zM445.6 455.6h1.3v1.3h-1.3zM441.1 460.2h1.3v1.3h-1.3zM187.0 459.6h1.3v1.3h-1.3zM364.2 459.4h1.3v1.3h-1.3zM392.2 460.5h1.3v1.3h-1.3zM257.6 457.6h1.3v1.3h-1.3zM433.1 460.2h1.3v1.3h-1.3zM263.1 460.2h1.3v1.3h-1.3zM421.5 460.0h1.3v1.3h-1.3zM399.2 458.5h1.3v1.3h-1.3zM232.9 459.7h1.3v1.3h-1.3zM85.4 458.0h1.3v1.3h-1.3zM188.1 459.5h1.3v1.3h-1.3zM340.2 455.7h1.3v1.3h-1.3zM554.9 460.6h1.3v1.3h-1.3zM231.4 457.9h1.3v1.3h-1.3zM190.2 456.7h1.3v1.3h-1.3zM325.9 457.1h1.3v1.3h-1.3zM378.1 459.7h1.3v1.3h-1.3zM234.0 459.6h1.3v1.3h-1.3zM219.8 459.7h1.3v1.3h-1.3zM145.1 458.7h1.3v1.3h-1.3zM215.1 459.7h1.3v1.3h-1.3zM331.5 458.8h1.3v1.3h-1.3zM570.3 460.6h1.3v1.3h-1.3zM371.1 459.7h1.3v1.3h-1.3zM389.7 458.5h1.3v1.3h-1.3zM90.2 458.4h1.3v1.3h-1.3zM148.1 457.8h1.3v1.3h-1.3zM95.6 459.6h1.3v1.3h-1.3zM126.5 460.6h1.3v1.3h-1.3zM121.5 455.4h1.3v1.3h-1.3zM139.5 459.7h1.3v1.3h-1.3zM136.2 459.2h1.3v1.3h-1.3zM413.1 459.1h1.3v1.3h-1.3zM125.4 457.8h1.3v1.3h-1.3zM269.7 456.3h1.3v1.3h-1.3zM421.6 456.1h1.3v1.3h-1.3zM460.6 459.1h1.3v1.3h-1.3zM555.3 457.6h1.3v1.3h-1.3zM157.8 459.1h1.3v1.3h-1.3zM172.5 457.5h1.3v1.3h-1.3zM244.5 459.4h1.3v1.3h-1.3zM581.3 459.8h1.3v1.3h-1.3zM288.8 459.3h1.3v1.3h-1.3zM295.6 460.5h1.3v1.3h-1.3zM50.3 459.6h1.3v1.3h-1.3zM141.8 460.6h1.3v1.3h-1.3zM214.7 458.9h1.3v1.3h-1.3zM414.3 460.4h1.3v1.3h-1.3zM73.5 460.1h1.3v1.3h-1.3zM413.5 460.2h1.3v1.3h-1.3zM390.1 457.7h1.3v1.3h-1.3zM279.6 460.1h1.3v1.3h-1.3zM211.5 459.2h1.3v1.3h-1.3zM329.6 457.3h1.3v1.3h-1.3zM60.2 458.1h1.3v1.3h-1.3zM83.6 459.5h1.3v1.3h-1.3zM125.4 455.6h1.3v1.3h-1.3zM82.3 457.6h1.3v1.3h-1.3zM170.2 458.5h1.3v1.3h-1.3zM311.1 458.5h1.3v1.3h-1.3zM99.1 458.8h1.3v1.3h-1.3zM385.7 458.4h1.3v1.3h-1.3zM232.0 460.3h1.3v1.3h-1.3zM230.3 459.9h1.3v1.3h-1.3zM329.4 459.0h1.3v1.3h-1.3zM162.0 459.8h1.3v1.3h-1.3zM183.0 459.8h1.3v1.3h-1.3zM261.1 456.9h1.3v1.3h-1.3zM283.8 459.5h1.3v1.3h-1.3zM403.8 457.1h1.3v1.3h-1.3zM223.3 457.7h1.3v1.3h-1.3zM323.5 459.8h1.3v1.3h-1.3zM252.4 459.0h1.3v1.3h-1.3zM468.6 456.2h1.3v1.3h-1.3zM367.7 459.8h1.3v1.3h-1.3zM397.8 459.7h1.3v1.3h-1.3zM114.2 457.3h1.3v1.3h-1.3zM260.0 460.5h1.3v1.3h-1.3zM560.7 456.3h1.3v1.3h-1.3zM158.8 458.5h1.3v1.3h-1.3zM91.9 458.3h1.3v1.3h-1.3zM370.1 455.4h1.3v1.3h-1.3zM476.0 460.5h1.3v1.3h-1.3zM127.9 456.8h1.3v1.3h-1.3zM296.4 460.6h1.3v1.3h-1.3zM321.1 459.5h1.3v1.3h-1.3zM384.0 459.9h1.3v1.3h-1.3zM525.9 456.2h1.3v1.3h-1.3zM489.7 459.5h1.3v1.3h-1.3zM325.0 457.1h1.3v1.3h-1.3zM334.9 460.2h1.3v1.3h-1.3zM138.7 457.9h1.3v1.3h-1.3zM346.7 460.6h1.3v1.3h-1.3zM227.9 460.5h1.3v1.3h-1.3zM232.2 459.8h1.3v1.3h-1.3zM73.3 456.8h1.3v1.3h-1.3zM521.4 459.9h1.3v1.3h-1.3zM242.9 458.4h1.3v1.3h-1.3zM425.9 458.5h1.3v1.3h-1.3zM491.3 458.2h1.3v1.3h-1.3zM360.5 460.3h1.3v1.3h-1.3zM518.0 459.5h1.3v1.3h-1.3zM235.8 460.1h1.3v1.3h-1.3zM56.1 459.1h1.3v1.3h-1.3zM99.7 460.4h1.3v1.3h-1.3zM150.9 456.8h1.3v1.3h-1.3zM321.9 458.8h1.3v1.3h-1.3zM342.2 458.2h1.3v1.3h-1.3zM505.3 459.5h1.3v1.3h-1.3zM53.2 459.8h1.3v1.3h-1.3zM371.2 460.2h1.3v1.3h-1.3zM66.7 459.4h1.3v1.3h-1.3zM516.6 459.0h1.3v1.3h-1.3zM326.2 460.6h1.3v1.3h-1.3zM129.2 460.0h1.3v1.3h-1.3zM433.6 459.9h1.3v1.3h-1.3zM336.0 458.9h1.3v1.3h-1.3zM261.5 455.4h1.3v1.3h-1.3zM383.7 458.4h1.3v1.3h-1.3zM84.4 460.2h1.3v1.3h-1.3zM189.0 457.3h1.3v1.3h-1.3zM444.1 457.4h1.3v1.3h-1.3zM177.2 457.4h1.3v1.3h-1.3zM290.5 460.2h1.3v1.3h-1.3zM89.5 455.4h1.3v1.3h-1.3zM559.8 460.6h1.3v1.3h-1.3zM117.6 459.9h1.3v1.3h-1.3zM259.5 459.9h1.3v1.3h-1.3zM482.1 459.4h1.3v1.3h-1.3zM84.2 458.8h1.3v1.3h-1.3zM365.2 456.9h1.3v1.3h-1.3zM430.6 460.5h1.3v1.3h-1.3zM63.3 458.5h1.3v1.3h-1.3zM88.4 458.5h1.3v1.3h-1.3zM82.7 458.8h1.3v1.3h-1.3zM316.6 458.5h1.3v1.3h-1.3zM130.0 459.9h1.3v1.3h-1.3zM471.5 458.2h1.3v1.3h-1.3zM76.5 458.5h1.3v1.3h-1.3zM505.4 459.1h1.3v1.3h-1.3zM459.0 459.1h1.3v1.3h-1.3zM185.0 459.8h1.3v1.3h-1.3zM278.9 457.8h1.3v1.3h-1.3zM51.4 459.6h1.3v1.3h-1.3zM182.2 459.8h1.3v1.3h-1.3zM505.3 458.8h1.3v1.3h-1.3zM210.8 455.9h1.3v1.3h-1.3zM44.7 456.6h1.3v1.3h-1.3zM492.2 458.8h1.3v1.3h-1.3zM239.7 458.3h1.3v1.3h-1.3zM321.8 460.6h1.3v1.3h-1.3zM62.9 460.2h1.3v1.3h-1.3zM418.4 456.2h1.3v1.3h-1.3zM57.7 457.7h1.3v1.3h-1.3zM248.3 459.3h1.3v1.3h-1.3zM216.2 456.4h1.3v1.3h-1.3zM65.2 457.1h1.3v1.3h-1.3zM573.6 460.0h1.3v1.3h-1.3zM240.5 459.2h1.3v1.3h-1.3zM140.2 459.8h1.3v1.3h-1.3zM122.9 457.0h1.3v1.3h-1.3zM550.3 459.3h1.3v1.3h-1.3zM420.1 460.2h1.3v1.3h-1.3zM582.9 456.2h1.3v1.3h-1.3zM348.7 458.4h1.3v1.3h-1.3zM151.7 456.8h1.3v1.3h-1.3zM227.2 459.0h1.3v1.3h-1.3zM355.7 458.3h1.3v1.3h-1.3zM96.4 460.2h1.3v1.3h-1.3zM93.8 460.4h1.3v1.3h-1.3zM201.8 459.5h1.3v1.3h-1.3zM251.0 458.1h1.3v1.3h-1.3zM578.0 457.6h1.3v1.3h-1.3zM45.7 460.5h1.3v1.3h-1.3zM121.2 459.2h1.3v1.3h-1.3zM243.7 457.0h1.3v1.3h-1.3zM511.5 460.3h1.3v1.3h-1.3zM445.3 455.4h1.3v1.3h-1.3zM60.1 457.9h1.3v1.3h-1.3zM401.5 458.9h1.3v1.3h-1.3zM451.8 460.0h1.3v1.3h-1.3zM187.2 457.9h1.3v1.3h-1.3zM212.3 460.6h1.3v1.3h-1.3zM99.0 459.5h1.3v1.3h-1.3zM260.7 458.8h1.3v1.3h-1.3zM125.6 459.0h1.3v1.3h-1.3zM168.0 458.3h1.3v1.3h-1.3zM372.3 459.6h1.3v1.3h-1.3zM54.1 458.6h1.3v1.3h-1.3zM122.8 460.3h1.3v1.3h-1.3zM380.3 458.2h1.3v1.3h-1.3zM222.8 460.4h1.3v1.3h-1.3zM82.1 459.6h1.3v1.3h-1.3zM528.1 457.6h1.3v1.3h-1.3zM54.1 457.2h1.3v1.3h-1.3zM212.8 459.9h1.3v1.3h-1.3zM268.0 459.9h1.3v1.3h-1.3zM297.8 456.5h1.3v1.3h-1.3zM101.2 460.6h1.3v1.3h-1.3zM593.5 459.5h1.3v1.3h-1.3zM401.7 460.6h1.3v1.3h-1.3zM171.6 456.7h1.3v1.3h-1.3zM267.7 457.7h1.3v1.3h-1.3zM283.8 459.1h1.3v1.3h-1.3zM464.9 459.2h1.3v1.3h-1.3zM171.2 459.6h1.3v1.3h-1.3zM448.4 459.0h1.3v1.3h-1.3zM140.1 460.2h1.3v1.3h-1.3zM332.8 456.3h1.3v1.3h-1.3zM60.9 457.6h1.3v1.3h-1.3zM257.0 460.1h1.3v1.3h-1.3zM293.7 456.8h1.3v1.3h-1.3zM433.2 459.9h1.3v1.3h-1.3zM561.4 459.2h1.3v1.3h-1.3zM285.6 459.5h1.3v1.3h-1.3zM66.7 457.1h1.3v1.3h-1.3zM327.6 457.5h1.3v1.3h-1.3zM326.3 458.8h1.3v1.3h-1.3zM391.8 457.7h1.3v1.3h-1.3zM341.9 458.4h1.3v1.3h-1.3zM446.0 459.9h1.3v1.3h-1.3zM565.4 458.9h1.3v1.3h-1.3zM373.1 457.7h1.3v1.3h-1.3zM49.2 458.8h1.3v1.3h-1.3zM142.0 458.7h1.3v1.3h-1.3zM268.9 459.1h1.3v1.3h-1.3zM518.4 455.4h1.3v1.3h-1.3zM433.3 458.2h1.3v1.3h-1.3zM430.7 458.7h1.3v1.3h-1.3zM446.5 460.3h1.3v1.3h-1.3zM165.9 457.5h1.3v1.3h-1.3zM177.4 460.4h1.3v1.3h-1.3zM490.1 458.5h1.3v1.3h-1.3zM321.7 459.1h1.3v1.3h-1.3zM89.1 459.1h1.3v1.3h-1.3zM97.2 460.6h1.3v1.3h-1.3zM287.7 459.8h1.3v1.3h-1.3zM195.1 460.2h1.3v1.3h-1.3zM571.7 458.3h1.3v1.3h-1.3zM254.4 456.9h1.3v1.3h-1.3zM179.9 458.9h1.3v1.3h-1.3zM222.5 458.7h1.3v1.3h-1.3zM563.6 460.5h1.3v1.3h-1.3zM413.7 460.0h1.3v1.3h-1.3zM187.7 460.4h1.3v1.3h-1.3zM203.3 459.6h1.3v1.3h-1.3zM586.3 457.7h1.3v1.3h-1.3zM253.9 460.5h1.3v1.3h-1.3zM88.6 457.4h1.3v1.3h-1.3zM202.9 457.7h1.3v1.3h-1.3zM616.3 460.6h1.3v1.3h-1.3zM261.9 457.8h1.3v1.3h-1.3zM378.0 458.7h1.3v1.3h-1.3zM457.4 459.4h1.3v1.3h-1.3zM113.7 460.2h1.3v1.3h-1.3zM461.5 458.7h1.3v1.3h-1.3zM299.4 458.1h1.3v1.3h-1.3zM227.3 460.6h1.3v1.3h-1.3zM146.2 458.6h1.3v1.3h-1.3zM157.0 459.7h1.3v1.3h-1.3zM167.8 458.0h1.3v1.3h-1.3zM241.1 459.2h1.3v1.3h-1.3zM102.1 458.7h1.3v1.3h-1.3zM254.4 458.8h1.3v1.3h-1.3zM475.3 460.0h1.3v1.3h-1.3zM321.6 459.6h1.3v1.3h-1.3zM95.2 456.7h1.3v1.3h-1.3zM213.6 458.2h1.3v1.3h-1.3zM420.5 458.1h1.3v1.3h-1.3zM128.8 458.3h1.3v1.3h-1.3zM105.0 457.8h1.3v1.3h-1.3zM420.8 459.5h1.3v1.3h-1.3zM110.5 460.6h1.3v1.3h-1.3zM275.6 458.5h1.3v1.3h-1.3zM157.3 456.7h1.3v1.3h-1.3zM502.7 460.0h1.3v1.3h-1.3zM488.9 455.8h1.3v1.3h-1.3zM173.1 456.5h1.3v1.3h-1.3zM67.0 459.1h1.3v1.3h-1.3zM381.4 460.5h1.3v1.3h-1.3zM177.8 458.9h1.3v1.3h-1.3zM128.5 460.3h1.3v1.3h-1.3zM152.5 457.8h1.3v1.3h-1.3zM194.2 459.3h1.3v1.3h-1.3zM464.7 460.2h1.3v1.3h-1.3zM181.2 459.1h1.3v1.3h-1.3zM530.2 459.3h1.3v1.3h-1.3zM181.1 459.9h1.3v1.3h-1.3zM119.0 459.4h1.3v1.3h-1.3zM53.4 459.3h1.3v1.3h-1.3zM406.2 457.0h1.3v1.3h-1.3zM245.6 460.1h1.3v1.3h-1.3zM339.2 457.8h1.3v1.3h-1.3zM425.1 459.1h1.3v1.3h-1.3zM44.8 459.2h1.3v1.3h-1.3zM155.1 456.4h1.3v1.3h-1.3zM524.0 457.4h1.3v1.3h-1.3zM188.6 456.1h1.3v1.3h-1.3zM383.0 459.6h1.3v1.3h-1.3zM52.7 460.0h1.3v1.3h-1.3zM131.1 456.7h1.3v1.3h-1.3zM300.0 457.3h1.3v1.3h-1.3zM84.3 460.0h1.3v1.3h-1.3zM604.1 460.2h1.3v1.3h-1.3zM438.0 459.0h1.3v1.3h-1.3zM223.8 459.4h1.3v1.3h-1.3zM177.2 460.0h1.3v1.3h-1.3zM331.4 456.8h1.3v1.3h-1.3zM187.4 459.7h1.3v1.3h-1.3zM574.8 458.9h1.3v1.3h-1.3zM197.3 457.3h1.3v1.3h-1.3zM144.4 458.9h1.3v1.3h-1.3zM351.0 459.7h1.3v1.3h-1.3zM460.3 458.9h1.3v1.3h-1.3zM66.8 455.4h1.3v1.3h-1.3zM244.3 455.6h1.3v1.3h-1.3zM285.1 459.5h1.3v1.3h-1.3zM392.9 458.7h1.3v1.3h-1.3zM238.1 459.4h1.3v1.3h-1.3zM480.7 459.2h1.3v1.3h-1.3zM88.4 456.7h1.3v1.3h-1.3zM225.9 459.3h1.3v1.3h-1.3zM397.3 459.7h1.3v1.3h-1.3zM87.0 460.1h1.3v1.3h-1.3zM190.5 458.7h1.3v1.3h-1.3zM159.5 456.8h1.3v1.3h-1.3zM148.9 457.3h1.3v1.3h-1.3zM169.3 460.1h1.3v1.3h-1.3zM133.3 458.6h1.3v1.3h-1.3zM201.9 459.8h1.3v1.3h-1.3zM578.7 458.9h1.3v1.3h-1.3zM87.9 458.7h1.3v1.3h-1.3zM402.8 456.1h1.3v1.3h-1.3zM507.5 458.6h1.3v1.3h-1.3zM461.1 456.1h1.3v1.3h-1.3zM305.9 459.9h1.3v1.3h-1.3zM252.2 459.1h1.3v1.3h-1.3zM145.9 460.3h1.3v1.3h-1.3zM301.7 460.6h1.3v1.3h-1.3zM293.7 459.8h1.3v1.3h-1.3zM213.5 459.5h1.3v1.3h-1.3zM466.6 459.5h1.3v1.3h-1.3zM97.7 457.4h1.3v1.3h-1.3zM66.3 457.1h1.3v1.3h-1.3zM242.0 457.8h1.3v1.3h-1.3zM485.7 460.3h1.3v1.3h-1.3zM48.6 460.2h1.3v1.3h-1.3zM369.9 458.1h1.3v1.3h-1.3zM335.4 459.4h1.3v1.3h-1.3zM294.1 460.3h1.3v1.3h-1.3zM340.5 459.9h1.3v1.3h-1.3zM509.1 458.0h1.3v1.3h-1.3zM168.7 457.3h1.3v1.3h-1.3zM389.2 459.1h1.3v1.3h-1.3zM531.3 460.2h1.3v1.3h-1.3zM507.4 459.2h1.3v1.3h-1.3zM274.0 460.4h1.3v1.3h-1.3zM251.4 459.3h1.3v1.3h-1.3zM306.5 459.2h1.3v1.3h-1.3zM55.4 459.2h1.3v1.3h-1.3zM309.9 456.3h1.3v1.3h-1.3zM349.4 459.6h1.3v1.3h-1.3zM305.0 459.4h1.3v1.3h-1.3zM227.6 458.0h1.3v1.3h-1.3zM410.8 458.5h1.3v1.3h-1.3zM427.0 460.5h1.3v1.3h-1.3zM323.6 460.4h1.3v1.3h-1.3zM475.3 459.1h1.3v1.3h-1.3zM446.3 458.4h1.3v1.3h-1.3zM104.8 459.3h1.3v1.3h-1.3zM324.6 459.9h1.3v1.3h-1.3zM68.8 458.5h1.3v1.3h-1.3zM235.3 460.0h1.3v1.3h-1.3zM322.3 457.7h1.3v1.3h-1.3zM583.8 457.0h1.3v1.3h-1.3zM524.2 458.8h1.3v1.3h-1.3zM124.9 457.0h1.3v1.3h-1.3zM80.8 457.8h1.3v1.3h-1.3zM89.2 460.4h1.3v1.3h-1.3zM43.4 460.5h1.3v1.3h-1.3zM338.3 460.5h1.3v1.3h-1.3zM71.0 458.9h1.3v1.3h-1.3zM66.6 460.6h1.3v1.3h-1.3zM278.0 460.6h1.3v1.3h-1.3zM170.6 459.7h1.3v1.3h-1.3zM87.0 460.3h1.3v1.3h-1.3zM62.8 457.6h1.3v1.3h-1.3zM50.4 460.6h1.3v1.3h-1.3zM391.6 458.0h1.3v1.3h-1.3zM249.6 458.8h1.3v1.3h-1.3zM380.8 455.4h1.3v1.3h-1.3zM265.6 459.4h1.3v1.3h-1.3zM186.5 457.4h1.3v1.3h-1.3zM256.7 458.5h1.3v1.3h-1.3zM411.8 460.0h1.3v1.3h-1.3zM89.6 458.5h1.3v1.3h-1.3zM358.9 459.4h1.3v1.3h-1.3zM238.7 457.8h1.3v1.3h-1.3zM61.6 456.4h1.3v1.3h-1.3zM407.0 459.2h1.3v1.3h-1.3zM523.3 459.0h1.3v1.3h-1.3zM246.2 456.3h1.3v1.3h-1.3zM54.5 459.6h1.3v1.3h-1.3zM534.7 456.2h1.3v1.3h-1.3zM297.1 458.0h1.3v1.3h-1.3zM343.8 457.2h1.3v1.3h-1.3zM360.4 457.3h1.3v1.3h-1.3zM191.2 458.0h1.3v1.3h-1.3zM151.8 458.4h1.3v1.3h-1.3zM352.9 458.5h1.3v1.3h-1.3zM244.9 457.4h1.3v1.3h-1.3zM369.4 459.1h1.3v1.3h-1.3zM73.4 460.0h1.3v1.3h-1.3zM391.2 458.9h1.3v1.3h-1.3zM96.7 460.4h1.3v1.3h-1.3zM211.3 459.6h1.3v1.3h-1.3zM528.1 457.8h1.3v1.3h-1.3zM199.3 460.1h1.3v1.3h-1.3zM209.7 456.8h1.3v1.3h-1.3zM142.8 460.5h1.3v1.3h-1.3zM242.3 458.8h1.3v1.3h-1.3zM471.9 458.3h1.3v1.3h-1.3zM74.6 459.6h1.3v1.3h-1.3zM547.6 455.4h1.3v1.3h-1.3zM250.6 458.1h1.3v1.3h-1.3zM376.8 459.7h1.3v1.3h-1.3zM332.3 458.5h1.3v1.3h-1.3zM187.0 458.8h1.3v1.3h-1.3zM256.6 460.0h1.3v1.3h-1.3zM178.0 460.0h1.3v1.3h-1.3zM170.8 459.6h1.3v1.3h-1.3zM237.2 460.3h1.3v1.3h-1.3zM255.3 456.9h1.3v1.3h-1.3zM116.9 456.0h1.3v1.3h-1.3zM130.7 457.4h1.3v1.3h-1.3zM124.6 458.3h1.3v1.3h-1.3zM515.6 458.6h1.3v1.3h-1.3zM233.1 459.2h1.3v1.3h-1.3zM377.0 459.5h1.3v1.3h-1.3zM64.8 458.4h1.3v1.3h-1.3zM44.9 458.1h1.3v1.3h-1.3zM346.8 460.0h1.3v1.3h-1.3zM135.4 457.1h1.3v1.3h-1.3zM196.4 457.5h1.3v1.3h-1.3zM513.1 459.2h1.3v1.3h-1.3zM243.9 458.6h1.3v1.3h-1.3zM500.4 459.8h1.3v1.3h-1.3zM386.6 459.3h1.3v1.3h-1.3zM105.8 458.1h1.3v1.3h-1.3zM348.9 459.6h1.3v1.3h-1.3zM172.8 459.4h1.3v1.3h-1.3zM86.0 460.0h1.3v1.3h-1.3zM478.1 458.4h1.3v1.3h-1.3zM98.1 456.9h1.3v1.3h-1.3zM443.9 460.0h1.3v1.3h-1.3zM423.1 459.8h1.3v1.3h-1.3zM189.2 458.9h1.3v1.3h-1.3zM517.9 459.0h1.3v1.3h-1.3zM73.0 455.6h1.3v1.3h-1.3zM493.9 460.0h1.3v1.3h-1.3zM320.7 458.8h1.3v1.3h-1.3zM226.8 458.8h1.3v1.3h-1.3zM372.2 459.0h1.3v1.3h-1.3zM331.5 459.7h1.3v1.3h-1.3zM345.8 459.0h1.3v1.3h-1.3zM558.3 457.4h1.3v1.3h-1.3zM314.9 455.7h1.3v1.3h-1.3zM105.3 459.1h1.3v1.3h-1.3zM278.2 459.8h1.3v1.3h-1.3zM612.1 459.7h1.3v1.3h-1.3zM274.7 459.2h1.3v1.3h-1.3zM424.2 460.5h1.3v1.3h-1.3zM138.1 457.1h1.3v1.3h-1.3zM108.2 457.9h1.3v1.3h-1.3zM359.6 459.7h1.3v1.3h-1.3zM321.2 460.4h1.3v1.3h-1.3zM423.6 457.0h1.3v1.3h-1.3zM477.7 458.6h1.3v1.3h-1.3zM96.0 457.5h1.3v1.3h-1.3zM453.2 459.7h1.3v1.3h-1.3zM586.1 459.1h1.3v1.3h-1.3zM225.3 459.1h1.3v1.3h-1.3zM216.7 460.5h1.3v1.3h-1.3zM368.4 459.2h1.3v1.3h-1.3zM156.0 460.5h1.3v1.3h-1.3zM632.9 459.7h1.3v1.3h-1.3zM112.0 457.6h1.3v1.3h-1.3zM152.3 455.4h1.3v1.3h-1.3zM390.9 458.7h1.3v1.3h-1.3zM243.7 458.6h1.3v1.3h-1.3zM464.9 457.9h1.3v1.3h-1.3zM314.1 458.8h1.3v1.3h-1.3zM67.5 458.9h1.3v1.3h-1.3zM353.4 457.5h1.3v1.3h-1.3zM240.3 460.4h1.3v1.3h-1.3zM317.6 460.4h1.3v1.3h-1.3zM59.8 460.4h1.3v1.3h-1.3zM246.5 457.6h1.3v1.3h-1.3zM451.6 456.7h1.3v1.3h-1.3zM250.0 458.2h1.3v1.3h-1.3zM228.0 459.0h1.3v1.3h-1.3zM238.9 459.1h1.3v1.3h-1.3zM541.5 459.1h1.3v1.3h-1.3zM133.5 460.4h1.3v1.3h-1.3zM549.1 458.3h1.3v1.3h-1.3zM199.4 459.2h1.3v1.3h-1.3zM369.4 459.1h1.3v1.3h-1.3zM239.8 457.3h1.3v1.3h-1.3zM56.4 459.3h1.3v1.3h-1.3zM65.7 458.1h1.3v1.3h-1.3zM433.0 457.3h1.3v1.3h-1.3zM399.0 456.7h1.3v1.3h-1.3zM418.6 458.6h1.3v1.3h-1.3zM312.1 455.9h1.3v1.3h-1.3zM175.8 459.9h1.3v1.3h-1.3zM355.1 460.2h1.3v1.3h-1.3zM240.5 455.4h1.3v1.3h-1.3zM173.2 459.4h1.3v1.3h-1.3zM180.9 456.2h1.3v1.3h-1.3zM472.6 458.0h1.3v1.3h-1.3zM313.3 459.4h1.3v1.3h-1.3zM242.4 459.1h1.3v1.3h-1.3zM288.6 459.8h1.3v1.3h-1.3zM365.0 459.1h1.3v1.3h-1.3zM97.3 458.7h1.3v1.3h-1.3zM371.2 459.1h1.3v1.3h-1.3zM183.1 459.2h1.3v1.3h-1.3zM125.9 459.5h1.3v1.3h-1.3zM50.9 460.1h1.3v1.3h-1.3zM69.5 458.9h1.3v1.3h-1.3zM204.9 458.2h1.3v1.3h-1.3zM299.0 460.1h1.3v1.3h-1.3zM418.5 459.9h1.3v1.3h-1.3zM75.4 459.8h1.3v1.3h-1.3zM267.1 460.5h1.3v1.3h-1.3zM112.6 460.3h1.3v1.3h-1.3zM246.0 460.5h1.3v1.3h-1.3zM350.4 458.7h1.3v1.3h-1.3zM119.8 459.2h1.3v1.3h-1.3zM221.9 459.6h1.3v1.3h-1.3zM219.5 456.6h1.3v1.3h-1.3zM395.8 460.4h1.3v1.3h-1.3zM405.5 457.9h1.3v1.3h-1.3zM320.2 459.8h1.3v1.3h-1.3zM336.2 458.6h1.3v1.3h-1.3zM73.2 459.7h1.3v1.3h-1.3zM72.0 456.8h1.3v1.3h-1.3zM574.4 456.3h1.3v1.3h-1.3zM580.1 460.4h1.3v1.3h-1.3zM181.9 457.1h1.3v1.3h-1.3zM69.8 460.0h1.3v1.3h-1.3zM331.6 460.1h1.3v1.3h-1.3zM385.1 455.6h1.3v1.3h-1.3zM440.0 458.0h1.3v1.3h-1.3zM76.1 460.5h1.3v1.3h-1.3zM82.5 460.1h1.3v1.3h-1.3zM497.5 457.4h1.3v1.3h-1.3zM57.8 458.2h1.3v1.3h-1.3zM555.7 460.2h1.3v1.3h-1.3zM186.1 458.4h1.3v1.3h-1.3zM465.2 460.0h1.3v1.3h-1.3zM563.6 459.6h1.3v1.3h-1.3zM200.6 457.7h1.3v1.3h-1.3zM239.8 457.4h1.3v1.3h-1.3zM442.5 460.0h1.3v1.3h-1.3zM44.2 459.3h1.3v1.3h-1.3zM191.1 460.6h1.3v1.3h-1.3zM553.2 457.8h1.3v1.3h-1.3zM261.3 459.1h1.3v1.3h-1.3zM212.7 459.6h1.3v1.3h-1.3zM462.2 455.4h1.3v1.3h-1.3zM249.0 457.1h1.3v1.3h-1.3zM96.1 459.8h1.3v1.3h-1.3zM73.6 456.5h1.3v1.3h-1.3zM115.8 458.8h1.3v1.3h-1.3zM186.3 457.2h1.3v1.3h-1.3zM437.3 460.2h1.3v1.3h-1.3zM200.8 458.7h1.3v1.3h-1.3zM143.1 460.4h1.3v1.3h-1.3zM226.5 460.4h1.3v1.3h-1.3zM612.0 457.6h1.3v1.3h-1.3zM127.3 458.5h1.3v1.3h-1.3zM360.9 459.0h1.3v1.3h-1.3zM57.8 458.6h1.3v1.3h-1.3zM191.5 459.9h1.3v1.3h-1.3zM273.2 459.8h1.3v1.3h-1.3zM298.5 460.3h1.3v1.3h-1.3zM465.3 456.8h1.3v1.3h-1.3zM333.9 458.5h1.3v1.3h-1.3zM254.6 456.3h1.3v1.3h-1.3zM522.5 459.7h1.3v1.3h-1.3zM209.2 460.1h1.3v1.3h-1.3zM77.2 458.0h1.3v1.3h-1.3zM172.6 456.9h1.3v1.3h-1.3zM391.0 460.4h1.3v1.3h-1.3zM241.3 459.6h1.3v1.3h-1.3zM350.7 459.5h1.3v1.3h-1.3zM556.1 459.5h1.3v1.3h-1.3zM323.4 458.3h1.3v1.3h-1.3zM76.4 459.4h1.3v1.3h-1.3zM158.5 459.4h1.3v1.3h-1.3zM286.7 460.3h1.3v1.3h-1.3zM609.8 459.0h1.3v1.3h-1.3zM167.0 457.6h1.3v1.3h-1.3zM342.4 459.7h1.3v1.3h-1.3zM117.2 459.0h1.3v1.3h-1.3zM480.5 456.6h1.3v1.3h-1.3zM265.0 457.5h1.3v1.3h-1.3zM548.1 460.5h1.3v1.3h-1.3zM347.5 458.8h1.3v1.3h-1.3zM116.8 458.3h1.3v1.3h-1.3zM308.3 460.6h1.3v1.3h-1.3zM258.1 459.9h1.3v1.3h-1.3zM110.4 457.5h1.3v1.3h-1.3zM89.7 459.9h1.3v1.3h-1.3zM193.7 457.8h1.3v1.3h-1.3zM319.0 458.3h1.3v1.3h-1.3zM402.8 458.4h1.3v1.3h-1.3zM423.8 456.9h1.3v1.3h-1.3zM189.6 458.0h1.3v1.3h-1.3zM181.6 460.3h1.3v1.3h-1.3zM597.5 459.9h1.3v1.3h-1.3zM308.5 457.5h1.3v1.3h-1.3zM432.7 459.3h1.3v1.3h-1.3zM439.3 459.7h1.3v1.3h-1.3zM550.2 459.2h1.3v1.3h-1.3zM223.3 457.7h1.3v1.3h-1.3zM48.9 458.5h1.3v1.3h-1.3zM162.2 455.6h1.3v1.3h-1.3zM443.6 456.5h1.3v1.3h-1.3zM515.2 458.7h1.3v1.3h-1.3zM82.7 459.1h1.3v1.3h-1.3zM54.5 456.4h1.3v1.3h-1.3zM108.5 459.8h1.3v1.3h-1.3zM257.8 460.0h1.3v1.3h-1.3zM503.3 457.5h1.3v1.3h-1.3zM215.2 459.6h1.3v1.3h-1.3zM52.6 458.6h1.3v1.3h-1.3zM194.2 459.7h1.3v1.3h-1.3zM128.7 456.6h1.3v1.3h-1.3zM126.8 459.4h1.3v1.3h-1.3zM298.8 459.3h1.3v1.3h-1.3zM598.9 458.7h1.3v1.3h-1.3zM101.1 457.2h1.3v1.3h-1.3zM340.4 460.0h1.3v1.3h-1.3zM250.1 459.2h1.3v1.3h-1.3zM257.4 456.8h1.3v1.3h-1.3zM376.0 459.6h1.3v1.3h-1.3zM514.7 459.7h1.3v1.3h-1.3zM83.9 458.6h1.3v1.3h-1.3zM57.2 458.5h1.3v1.3h-1.3zM407.4 456.4h1.3v1.3h-1.3zM412.4 459.3h1.3v1.3h-1.3zM136.7 460.5h1.3v1.3h-1.3zM455.0 458.0h1.3v1.3h-1.3zM279.0 459.6h1.3v1.3h-1.3zM147.0 458.4h1.3v1.3h-1.3zM475.3 459.8h1.3v1.3h-1.3zM66.3 460.0h1.3v1.3h-1.3zM66.8 458.6h1.3v1.3h-1.3zM395.9 459.2h1.3v1.3h-1.3zM454.9 458.6h1.3v1.3h-1.3zM163.6 458.8h1.3v1.3h-1.3zM372.8 459.7h1.3v1.3h-1.3zM136.1 460.6h1.3v1.3h-1.3zM55.4 457.7h1.3v1.3h-1.3zM54.4 460.5h1.3v1.3h-1.3zM209.8 460.3h1.3v1.3h-1.3zM331.7 457.4h1.3v1.3h-1.3zM115.7 459.6h1.3v1.3h-1.3zM129.5 457.6h1.3v1.3h-1.3zM236.3 457.0h1.3v1.3h-1.3zM322.5 456.7h1.3v1.3h-1.3zM94.9 460.4h1.3v1.3h-1.3zM433.7 456.5h1.3v1.3h-1.3zM472.1 458.6h1.3v1.3h-1.3zM287.9 457.7h1.3v1.3h-1.3zM218.2 459.7h1.3v1.3h-1.3zM245.0 459.9h1.3v1.3h-1.3zM601.2 458.9h1.3v1.3h-1.3zM44.8 459.2h1.3v1.3h-1.3zM196.3 458.8h1.3v1.3h-1.3zM287.2 459.9h1.3v1.3h-1.3zM591.8 459.0h1.3v1.3h-1.3zM89.6 458.3h1.3v1.3h-1.3zM393.9 459.8h1.3v1.3h-1.3zM388.6 459.6h1.3v1.3h-1.3zM127.7 457.5h1.3v1.3h-1.3zM267.3 459.3h1.3v1.3h-1.3zM161.7 459.4h1.3v1.3h-1.3zM318.6 459.6h1.3v1.3h-1.3zM286.1 458.3h1.3v1.3h-1.3zM204.1 459.3h1.3v1.3h-1.3zM112.7 460.6h1.3v1.3h-1.3zM83.8 455.5h1.3v1.3h-1.3zM43.7 457.4h1.3v1.3h-1.3zM217.2 459.8h1.3v1.3h-1.3zM62.7 460.4h1.3v1.3h-1.3zM233.3 458.7h1.3v1.3h-1.3zM483.8 459.0h1.3v1.3h-1.3zM326.0 456.1h1.3v1.3h-1.3zM391.1 460.6h1.3v1.3h-1.3zM293.9 457.4h1.3v1.3h-1.3zM107.3 457.4h1.3v1.3h-1.3zM428.2 456.7h1.3v1.3h-1.3zM588.2 457.3h1.3v1.3h-1.3zM360.6 458.6h1.3v1.3h-1.3zM345.1 457.6h1.3v1.3h-1.3zM448.5 460.6h1.3v1.3h-1.3zM284.1 459.4h1.3v1.3h-1.3zM220.7 457.6h1.3v1.3h-1.3zM63.0 459.2h1.3v1.3h-1.3zM68.9 460.3h1.3v1.3h-1.3zM561.7 458.0h1.3v1.3h-1.3zM108.0 459.6h1.3v1.3h-1.3zM186.0 458.2h1.3v1.3h-1.3zM264.0 459.3h1.3v1.3h-1.3zM104.7 459.1h1.3v1.3h-1.3zM228.8 457.9h1.3v1.3h-1.3zM473.8 458.3h1.3v1.3h-1.3zM320.6 457.6h1.3v1.3h-1.3zM187.9 459.0h1.3v1.3h-1.3zM463.0 455.8h1.3v1.3h-1.3zM119.0 460.2h1.3v1.3h-1.3zM398.2 456.4h1.3v1.3h-1.3zM315.4 459.8h1.3v1.3h-1.3zM319.7 456.5h1.3v1.3h-1.3zM303.8 459.3h1.3v1.3h-1.3zM296.9 459.5h1.3v1.3h-1.3zM545.3 458.8h1.3v1.3h-1.3zM588.4 459.2h1.3v1.3h-1.3zM217.3 459.9h1.3v1.3h-1.3zM224.5 459.6h1.3v1.3h-1.3zM291.5 459.4h1.3v1.3h-1.3zM359.9 459.5h1.3v1.3h-1.3zM576.0 456.1h1.3v1.3h-1.3zM101.5 455.4h1.3v1.3h-1.3zM483.2 458.6h1.3v1.3h-1.3zM263.6 460.5h1.3v1.3h-1.3zM380.6 460.1h1.3v1.3h-1.3zM132.7 457.1h1.3v1.3h-1.3zM106.3 458.7h1.3v1.3h-1.3zM140.5 458.1h1.3v1.3h-1.3zM461.9 459.4h1.3v1.3h-1.3zM159.1 460.4h1.3v1.3h-1.3zM296.3 458.0h1.3v1.3h-1.3zM210.9 460.1h1.3v1.3h-1.3zM281.5 457.3h1.3v1.3h-1.3zM260.7 458.4h1.3v1.3h-1.3zM134.8 459.7h1.3v1.3h-1.3zM234.5 459.3h1.3v1.3h-1.3zM424.6 460.6h1.3v1.3h-1.3zM240.4 459.6h1.3v1.3h-1.3zM161.1 456.9h1.3v1.3h-1.3zM174.6 458.7h1.3v1.3h-1.3zM330.7 456.4h1.3v1.3h-1.3zM410.9 458.0h1.3v1.3h-1.3zM241.9 459.9h1.3v1.3h-1.3zM81.3 459.7h1.3v1.3h-1.3zM114.1 459.4h1.3v1.3h-1.3zM375.8 458.6h1.3v1.3h-1.3zM399.8 459.9h1.3v1.3h-1.3zM326.6 459.5h1.3v1.3h-1.3zM44.5 458.1h1.3v1.3h-1.3zM353.7 458.0h1.3v1.3h-1.3zM290.2 455.4h1.3v1.3h-1.3zM45.0 460.5h1.3v1.3h-1.3zM179.7 459.6h1.3v1.3h-1.3zM285.4 460.6h1.3v1.3h-1.3zM242.0 458.5h1.3v1.3h-1.3zM302.9 458.9h1.3v1.3h-1.3zM135.2 458.6h1.3v1.3h-1.3zM90.0 458.3h1.3v1.3h-1.3zM199.3 459.8h1.3v1.3h-1.3zM195.6 460.6h1.3v1.3h-1.3zM46.1 459.6h1.3v1.3h-1.3zM168.9 460.2h1.3v1.3h-1.3zM401.0 456.6h1.3v1.3h-1.3zM55.6 460.5h1.3v1.3h-1.3zM240.9 459.8h1.3v1.3h-1.3zM79.3 458.3h1.3v1.3h-1.3zM76.0 460.4h1.3v1.3h-1.3zM564.7 460.4h1.3v1.3h-1.3zM374.8 457.4h1.3v1.3h-1.3zM93.7 458.6h1.3v1.3h-1.3zM547.5 459.1h1.3v1.3h-1.3zM153.4 458.8h1.3v1.3h-1.3zM84.1 460.6h1.3v1.3h-1.3zM193.9 460.0h1.3v1.3h-1.3zM414.5 460.3h1.3v1.3h-1.3zM284.2 458.5h1.3v1.3h-1.3zM419.3 460.5h1.3v1.3h-1.3zM491.2 458.2h1.3v1.3h-1.3zM262.0 457.8h1.3v1.3h-1.3zM81.5 455.9h1.3v1.3h-1.3zM415.6 458.8h1.3v1.3h-1.3zM243.2 459.8h1.3v1.3h-1.3zM226.9 460.0h1.3v1.3h-1.3zM421.6 460.1h1.3v1.3h-1.3zM332.8 457.1h1.3v1.3h-1.3zM83.6 457.9h1.3v1.3h-1.3zM253.4 459.1h1.3v1.3h-1.3zM178.2 460.1h1.3v1.3h-1.3zM52.2 456.6h1.3v1.3h-1.3zM374.4 459.7h1.3v1.3h-1.3zM238.4 456.4h1.3v1.3h-1.3zM309.5 455.4h1.3v1.3h-1.3zM463.1 460.5h1.3v1.3h-1.3zM246.9 459.4h1.3v1.3h-1.3zM70.9 456.8h1.3v1.3h-1.3zM101.9 458.7h1.3v1.3h-1.3zM563.2 459.4h1.3v1.3h-1.3zM526.0 458.8h1.3v1.3h-1.3zM315.0 459.9h1.3v1.3h-1.3zM84.5 459.7h1.3v1.3h-1.3zM139.4 458.8h1.3v1.3h-1.3zM55.0 458.8h1.3v1.3h-1.3zM64.3 459.2h1.3v1.3h-1.3zM75.0 458.4h1.3v1.3h-1.3zM259.3 459.5h1.3v1.3h-1.3zM420.3 458.6h1.3v1.3h-1.3zM99.7 460.3h1.3v1.3h-1.3zM340.4 459.6h1.3v1.3h-1.3zM287.0 459.5h1.3v1.3h-1.3zM61.1 459.3h1.3v1.3h-1.3zM329.9 457.5h1.3v1.3h-1.3zM401.4 460.6h1.3v1.3h-1.3zM237.9 457.3h1.3v1.3h-1.3zM359.8 458.2h1.3v1.3h-1.3zM222.3 459.2h1.3v1.3h-1.3zM99.7 460.3h1.3v1.3h-1.3zM326.5 460.4h1.3v1.3h-1.3zM228.5 459.3h1.3v1.3h-1.3zM76.6 456.3h1.3v1.3h-1.3zM467.9 458.7h1.3v1.3h-1.3zM45.6 459.4h1.3v1.3h-1.3zM209.1 458.9h1.3v1.3h-1.3zM203.9 458.7h1.3v1.3h-1.3zM437.6 459.5h1.3v1.3h-1.3zM123.1 459.4h1.3v1.3h-1.3zM375.4 460.5h1.3v1.3h-1.3zM220.9 458.4h1.3v1.3h-1.3zM334.1 457.3h1.3v1.3h-1.3zM324.6 455.5h1.3v1.3h-1.3zM95.4 457.3h1.3v1.3h-1.3zM215.9 458.1h1.3v1.3h-1.3zM483.8 457.3h1.3v1.3h-1.3zM478.2 456.5h1.3v1.3h-1.3zM119.5 459.0h1.3v1.3h-1.3zM488.8 459.7h1.3v1.3h-1.3zM296.0 458.5h1.3v1.3h-1.3zM338.2 458.3h1.3v1.3h-1.3zM280.1 460.6h1.3v1.3h-1.3zM144.7 458.1h1.3v1.3h-1.3zM107.5 459.9h1.3v1.3h-1.3zM337.0 458.6h1.3v1.3h-1.3zM305.8 455.4h1.3v1.3h-1.3zM452.9 457.0h1.3v1.3h-1.3zM173.6 457.0h1.3v1.3h-1.3zM479.9 458.1h1.3v1.3h-1.3zM342.0 457.5h1.3v1.3h-1.3zM255.6 459.0h1.3v1.3h-1.3zM92.0 457.7h1.3v1.3h-1.3zM149.8 457.5h1.3v1.3h-1.3zM304.6 455.6h1.3v1.3h-1.3zM373.9 459.3h1.3v1.3h-1.3zM50.0 460.1h1.3v1.3h-1.3zM420.3 457.4h1.3v1.3h-1.3zM338.3 459.4h1.3v1.3h-1.3zM103.0 459.4h1.3v1.3h-1.3zM496.2 458.5h1.3v1.3h-1.3zM84.0 460.4h1.3v1.3h-1.3zM48.9 459.8h1.3v1.3h-1.3zM97.6 458.8h1.3v1.3h-1.3zM95.1 458.9h1.3v1.3h-1.3zM177.3 459.4h1.3v1.3h-1.3zM486.9 458.4h1.3v1.3h-1.3zM373.9 458.4h1.3v1.3h-1.3zM363.7 457.8h1.3v1.3h-1.3zM252.1 457.9h1.3v1.3h-1.3zM282.4 458.4h1.3v1.3h-1.3zM126.4 455.4h1.3v1.3h-1.3zM238.2 459.6h1.3v1.3h-1.3zM508.4 457.0h1.3v1.3h-1.3zM110.5 458.4h1.3v1.3h-1.3zM219.6 457.3h1.3v1.3h-1.3zM296.0 458.9h1.3v1.3h-1.3zM92.1 458.8h1.3v1.3h-1.3zM131.8 459.3h1.3v1.3h-1.3zM215.8 456.6h1.3v1.3h-1.3zM181.7 459.3h1.3v1.3h-1.3zM256.6 456.8h1.3v1.3h-1.3zM138.5 457.2h1.3v1.3h-1.3zM144.3 458.2h1.3v1.3h-1.3zM359.6 458.2h1.3v1.3h-1.3zM395.1 456.5h1.3v1.3h-1.3zM381.7 458.4h1.3v1.3h-1.3zM148.1 459.7h1.3v1.3h-1.3zM542.7 458.8h1.3v1.3h-1.3zM151.6 460.3h1.3v1.3h-1.3zM494.9 455.7h1.3v1.3h-1.3zM135.7 460.4h1.3v1.3h-1.3zM48.7 459.3h1.3v1.3h-1.3zM199.5 457.2h1.3v1.3h-1.3zM289.1 459.4h1.3v1.3h-1.3zM97.3 459.2h1.3v1.3h-1.3zM320.6 456.3h1.3v1.3h-1.3zM291.0 459.2h1.3v1.3h-1.3zM232.5 459.5h1.3v1.3h-1.3zM173.4 460.3h1.3v1.3h-1.3zM119.2 460.4h1.3v1.3h-1.3zM206.2 458.4h1.3v1.3h-1.3zM582.1 460.3h1.3v1.3h-1.3zM69.8 458.1h1.3v1.3h-1.3zM281.8 460.5h1.3v1.3h-1.3zM424.8 459.0h1.3v1.3h-1.3zM445.4 457.2h1.3v1.3h-1.3zM468.8 459.5h1.3v1.3h-1.3zM101.2 459.2h1.3v1.3h-1.3zM399.4 459.5h1.3v1.3h-1.3zM311.0 458.7h1.3v1.3h-1.3zM478.5 458.1h1.3v1.3h-1.3zM604.3 457.1h1.3v1.3h-1.3zM608.5 458.5h1.3v1.3h-1.3zM146.9 458.9h1.3v1.3h-1.3zM431.2 456.3h1.3v1.3h-1.3zM93.3 459.8h1.3v1.3h-1.3zM79.4 456.5h1.3v1.3h-1.3zM215.8 459.2h1.3v1.3h-1.3zM383.0 460.4h1.3v1.3h-1.3zM248.8 458.0h1.3v1.3h-1.3zM471.8 456.3h1.3v1.3h-1.3zM371.9 459.8h1.3v1.3h-1.3zM44.5 455.6h1.3v1.3h-1.3zM199.1 458.7h1.3v1.3h-1.3zM474.4 459.0h1.3v1.3h-1.3zM407.6 458.7h1.3v1.3h-1.3zM176.7 457.9h1.3v1.3h-1.3zM213.3 457.6h1.3v1.3h-1.3zM144.0 455.4h1.3v1.3h-1.3zM147.6 456.8h1.3v1.3h-1.3zM247.8 459.2h1.3v1.3h-1.3zM264.3 457.5h1.3v1.3h-1.3zM546.7 458.2h1.3v1.3h-1.3zM249.9 460.5h1.3v1.3h-1.3zM411.0 458.2h1.3v1.3h-1.3zM438.3 458.8h1.3v1.3h-1.3zM50.2 456.7h1.3v1.3h-1.3zM418.7 460.0h1.3v1.3h-1.3zM638.0 460.2h1.3v1.3h-1.3zM313.2 457.7h1.3v1.3h-1.3zM101.1 458.9h1.3v1.3h-1.3zM295.9 457.1h1.3v1.3h-1.3zM390.5 458.9h1.3v1.3h-1.3zM212.5 459.3h1.3v1.3h-1.3zM186.1 460.2h1.3v1.3h-1.3zM402.1 458.0h1.3v1.3h-1.3zM71.6 460.0h1.3v1.3h-1.3zM267.9 459.4h1.3v1.3h-1.3zM399.0 459.9h1.3v1.3h-1.3zM320.7 459.2h1.3v1.3h-1.3zM497.2 455.9h1.3v1.3h-1.3zM138.5 459.6h1.3v1.3h-1.3zM192.5 459.8h1.3v1.3h-1.3zM261.5 459.7h1.3v1.3h-1.3zM93.8 460.0h1.3v1.3h-1.3zM307.5 456.2h1.3v1.3h-1.3zM173.7 457.8h1.3v1.3h-1.3zM136.5 456.8h1.3v1.3h-1.3zM183.6 459.8h1.3v1.3h-1.3zM418.4 458.1h1.3v1.3h-1.3zM234.7 459.9h1.3v1.3h-1.3zM478.3 458.5h1.3v1.3h-1.3zM162.9 458.4h1.3v1.3h-1.3zM368.5 459.2h1.3v1.3h-1.3zM379.6 457.4h1.3v1.3h-1.3zM82.3 457.4h1.3v1.3h-1.3zM338.5 459.1h1.3v1.3h-1.3zM247.1 457.5h1.3v1.3h-1.3zM107.5 460.1h1.3v1.3h-1.3zM122.5 460.0h1.3v1.3h-1.3zM398.4 459.4h1.3v1.3h-1.3zM146.5 460.0h1.3v1.3h-1.3zM331.3 457.3h1.3v1.3h-1.3zM157.8 456.8h1.3v1.3h-1.3zM248.8 459.2h1.3v1.3h-1.3zM405.8 460.3h1.3v1.3h-1.3zM198.0 460.4h1.3v1.3h-1.3zM194.5 457.7h1.3v1.3h-1.3zM381.6 456.5h1.3v1.3h-1.3zM438.7 459.1h1.3v1.3h-1.3zM478.9 455.4h1.3v1.3h-1.3zM403.2 459.0h1.3v1.3h-1.3zM167.7 460.0h1.3v1.3h-1.3zM279.8 458.5h1.3v1.3h-1.3zM252.6 460.6h1.3v1.3h-1.3zM250.7 459.8h1.3v1.3h-1.3zM138.1 457.5h1.3v1.3h-1.3zM254.2 459.9h1.3v1.3h-1.3zM497.9 459.4h1.3v1.3h-1.3zM127.8 459.9h1.3v1.3h-1.3zM406.1 458.4h1.3v1.3h-1.3zM528.8 459.1h1.3v1.3h-1.3zM223.2 459.8h1.3v1.3h-1.3zM177.4 457.9h1.3v1.3h-1.3zM154.2 456.8h1.3v1.3h-1.3zM389.1 459.1h1.3v1.3h-1.3zM169.4 455.4h1.3v1.3h-1.3zM236.0 459.0h1.3v1.3h-1.3zM146.1 456.4h1.3v1.3h-1.3zM297.4 456.5h1.3v1.3h-1.3zM431.9 456.9h1.3v1.3h-1.3zM543.9 460.1h1.3v1.3h-1.3zM123.1 460.4h1.3v1.3h-1.3zM352.2 459.6h1.3v1.3h-1.3zM215.6 459.4h1.3v1.3h-1.3zM555.8 458.0h1.3v1.3h-1.3zM244.8 460.1h1.3v1.3h-1.3zM238.0 459.4h1.3v1.3h-1.3zM240.3 460.1h1.3v1.3h-1.3zM432.4 459.3h1.3v1.3h-1.3zM241.3 460.1h1.3v1.3h-1.3zM373.0 456.2h1.3v1.3h-1.3zM341.1 460.6h1.3v1.3h-1.3zM314.6 458.8h1.3v1.3h-1.3zM382.3 459.1h1.3v1.3h-1.3zM314.5 459.3h1.3v1.3h-1.3zM215.6 459.0h1.3v1.3h-1.3zM505.5 456.2h1.3v1.3h-1.3zM592.6 456.4h1.3v1.3h-1.3zM122.3 460.4h1.3v1.3h-1.3zM313.0 459.5h1.3v1.3h-1.3zM332.9 459.2h1.3v1.3h-1.3zM218.0 459.6h1.3v1.3h-1.3zM326.3 459.8h1.3v1.3h-1.3zM446.2 460.3h1.3v1.3h-1.3zM81.7 459.9h1.3v1.3h-1.3zM214.9 460.4h1.3v1.3h-1.3zM363.5 460.5h1.3v1.3h-1.3zM441.8 460.3h1.3v1.3h-1.3zM432.2 456.2h1.3v1.3h-1.3zM143.6 459.9h1.3v1.3h-1.3zM274.1 459.7h1.3v1.3h-1.3zM440.5 458.2h1.3v1.3h-1.3zM325.7 459.6h1.3v1.3h-1.3zM441.0 459.6h1.3v1.3h-1.3zM321.6 457.7h1.3v1.3h-1.3zM339.6 460.3h1.3v1.3h-1.3zM458.2 458.9h1.3v1.3h-1.3zM570.3 459.8h1.3v1.3h-1.3zM334.5 457.8h1.3v1.3h-1.3zM382.8 460.3h1.3v1.3h-1.3zM226.6 457.9h1.3v1.3h-1.3zM64.2 457.3h1.3v1.3h-1.3zM242.7 456.6h1.3v1.3h-1.3zM199.9 458.0h1.3v1.3h-1.3zM237.4 460.5h1.3v1.3h-1.3zM182.7 459.1h1.3v1.3h-1.3zM325.0 458.3h1.3v1.3h-1.3zM225.3 458.4h1.3v1.3h-1.3zM88.3 458.5h1.3v1.3h-1.3zM251.8 459.0h1.3v1.3h-1.3zM113.1 459.1h1.3v1.3h-1.3zM144.1 460.6h1.3v1.3h-1.3zM358.8 457.9h1.3v1.3h-1.3zM90.1 458.4h1.3v1.3h-1.3zM492.9 460.0h1.3v1.3h-1.3zM202.1 458.7h1.3v1.3h-1.3zM504.1 460.2h1.3v1.3h-1.3zM307.4 459.8h1.3v1.3h-1.3zM228.5 455.4h1.3v1.3h-1.3zM218.8 458.9h1.3v1.3h-1.3zM406.9 455.5h1.3v1.3h-1.3zM82.1 455.4h1.3v1.3h-1.3zM316.1 458.7h1.3v1.3h-1.3zM195.3 459.3h1.3v1.3h-1.3zM113.0 458.8h1.3v1.3h-1.3zM230.3 460.5h1.3v1.3h-1.3zM537.6 458.3h1.3v1.3h-1.3zM150.5 459.9h1.3v1.3h-1.3zM71.6 459.0h1.3v1.3h-1.3zM338.2 457.9h1.3v1.3h-1.3zM109.4 455.4h1.3v1.3h-1.3zM297.7 458.9h1.3v1.3h-1.3zM528.8 456.0h1.3v1.3h-1.3zM384.8 460.4h1.3v1.3h-1.3zM245.6 458.5h1.3v1.3h-1.3zM283.9 460.2h1.3v1.3h-1.3zM342.2 459.8h1.3v1.3h-1.3zM206.8 460.4h1.3v1.3h-1.3zM160.2 460.1h1.3v1.3h-1.3zM173.9 458.6h1.3v1.3h-1.3zM148.1 458.2h1.3v1.3h-1.3zM599.7 458.6h1.3v1.3h-1.3zM293.8 460.5h1.3v1.3h-1.3zM278.9 457.4h1.3v1.3h-1.3zM264.2 456.7h1.3v1.3h-1.3zM264.7 460.5h1.3v1.3h-1.3zM235.4 458.4h1.3v1.3h-1.3zM64.8 460.6h1.3v1.3h-1.3zM295.9 458.7h1.3v1.3h-1.3zM165.9 457.1h1.3v1.3h-1.3zM606.4 459.7h1.3v1.3h-1.3zM235.3 459.3h1.3v1.3h-1.3zM96.4 459.9h1.3v1.3h-1.3zM365.4 459.5h1.3v1.3h-1.3zM450.4 460.1h1.3v1.3h-1.3zM137.9 460.3h1.3v1.3h-1.3zM471.3 459.5h1.3v1.3h-1.3zM249.4 459.2h1.3v1.3h-1.3zM534.8 458.1h1.3v1.3h-1.3zM549.5 460.0h1.3v1.3h-1.3zM448.7 459.4h1.3v1.3h-1.3zM336.3 458.4h1.3v1.3h-1.3zM238.7 459.4h1.3v1.3h-1.3zM277.7 459.5h1.3v1.3h-1.3zM515.0 460.4h1.3v1.3h-1.3zM242.0 459.3h1.3v1.3h-1.3zM250.9 458.9h1.3v1.3h-1.3zM443.1 460.1h1.3v1.3h-1.3zM254.9 457.7h1.3v1.3h-1.3zM77.2 459.0h1.3v1.3h-1.3zM407.8 460.6h1.3v1.3h-1.3zM121.5 460.2h1.3v1.3h-1.3zM147.2 459.5h1.3v1.3h-1.3zM179.3 457.3h1.3v1.3h-1.3zM444.7 458.4h1.3v1.3h-1.3zM433.7 460.2h1.3v1.3h-1.3zM216.4 458.7h1.3v1.3h-1.3zM99.2 457.3h1.3v1.3h-1.3zM88.1 459.4h1.3v1.3h-1.3zM46.9 457.8h1.3v1.3h-1.3zM368.1 460.0h1.3v1.3h-1.3zM87.6 459.1h1.3v1.3h-1.3zM220.7 460.1h1.3v1.3h-1.3zM92.5 457.9h1.3v1.3h-1.3zM192.2 460.5h1.3v1.3h-1.3zM88.8 459.6h1.3v1.3h-1.3zM99.1 460.0h1.3v1.3h-1.3zM189.3 456.7h1.3v1.3h-1.3zM524.4 460.3h1.3v1.3h-1.3zM250.9 457.2h1.3v1.3h-1.3zM145.7 459.8h1.3v1.3h-1.3zM278.6 459.9h1.3v1.3h-1.3zM382.1 459.1h1.3v1.3h-1.3zM138.5 459.1h1.3v1.3h-1.3zM158.8 460.1h1.3v1.3h-1.3zM264.5 460.0h1.3v1.3h-1.3zM348.6 457.8h1.3v1.3h-1.3zM515.3 458.4h1.3v1.3h-1.3zM237.1 459.0h1.3v1.3h-1.3zM542.1 459.1h1.3v1.3h-1.3zM138.5 457.0h1.3v1.3h-1.3zM261.0 459.6h1.3v1.3h-1.3zM197.4 457.3h1.3v1.3h-1.3zM192.4 459.2h1.3v1.3h-1.3zM561.1 457.8h1.3v1.3h-1.3zM56.2 458.9h1.3v1.3h-1.3zM315.8 459.0h1.3v1.3h-1.3zM243.4 458.2h1.3v1.3h-1.3zM575.9 458.0h1.3v1.3h-1.3zM452.8 458.6h1.3v1.3h-1.3zM404.8 458.4h1.3v1.3h-1.3zM299.8 456.0h1.3v1.3h-1.3zM445.9 458.7h1.3v1.3h-1.3zM112.5 458.8h1.3v1.3h-1.3zM285.7 458.6h1.3v1.3h-1.3zM176.8 456.9h1.3v1.3h-1.3zM93.1 456.7h1.3v1.3h-1.3zM399.8 458.2h1.3v1.3h-1.3zM381.6 458.4h1.3v1.3h-1.3zM157.6 460.2h1.3v1.3h-1.3zM534.0 458.2h1.3v1.3h-1.3zM396.9 459.6h1.3v1.3h-1.3zM87.4 459.1h1.3v1.3h-1.3zM126.7 458.6h1.3v1.3h-1.3zM59.9 458.2h1.3v1.3h-1.3zM96.2 457.0h1.3v1.3h-1.3zM169.4 459.7h1.3v1.3h-1.3zM443.7 458.1h1.3v1.3h-1.3zM50.3 456.8h1.3v1.3h-1.3zM74.8 459.4h1.3v1.3h-1.3zM551.9 459.6h1.3v1.3h-1.3zM375.7 459.8h1.3v1.3h-1.3zM80.0 458.6h1.3v1.3h-1.3zM300.0 455.4h1.3v1.3h-1.3zM463.5 458.5h1.3v1.3h-1.3zM129.3 459.4h1.3v1.3h-1.3zM141.0 457.6h1.3v1.3h-1.3zM113.1 457.9h1.3v1.3h-1.3zM214.8 457.0h1.3v1.3h-1.3zM264.1 459.8h1.3v1.3h-1.3zM314.1 457.2h1.3v1.3h-1.3zM216.6 456.7h1.3v1.3h-1.3zM137.8 458.8h1.3v1.3h-1.3zM542.7 459.2h1.3v1.3h-1.3zM393.5 460.1h1.3v1.3h-1.3zM361.1 460.1h1.3v1.3h-1.3zM196.1 459.5h1.3v1.3h-1.3zM492.8 456.8h1.3v1.3h-1.3zM214.4 459.0h1.3v1.3h-1.3zM449.6 460.6h1.3v1.3h-1.3zM58.6 459.7h1.3v1.3h-1.3zM126.9 457.8h1.3v1.3h-1.3zM209.5 458.5h1.3v1.3h-1.3zM273.6 460.0h1.3v1.3h-1.3zM47.3 458.1h1.3v1.3h-1.3zM225.4 458.3h1.3v1.3h-1.3zM46.1 460.5h1.3v1.3h-1.3zM85.9 459.1h1.3v1.3h-1.3zM279.7 459.5h1.3v1.3h-1.3zM249.1 458.4h1.3v1.3h-1.3zM177.1 459.9h1.3v1.3h-1.3zM314.4 457.5h1.3v1.3h-1.3zM209.2 455.9h1.3v1.3h-1.3zM97.7 457.9h1.3v1.3h-1.3zM420.4 458.7h1.3v1.3h-1.3zM323.6 459.6h1.3v1.3h-1.3zM114.2 457.2h1.3v1.3h-1.3zM392.2 459.6h1.3v1.3h-1.3zM406.7 456.4h1.3v1.3h-1.3zM287.3 460.4h1.3v1.3h-1.3zM193.2 458.0h1.3v1.3h-1.3zM127.5 459.6h1.3v1.3h-1.3zM383.8 459.7h1.3v1.3h-1.3zM115.7 455.7h1.3v1.3h-1.3zM87.1 458.7h1.3v1.3h-1.3zM223.8 459.6h1.3v1.3h-1.3zM473.8 456.3h1.3v1.3h-1.3zM336.4 460.1h1.3v1.3h-1.3zM251.6 457.3h1.3v1.3h-1.3zM253.0 459.6h1.3v1.3h-1.3zM73.7 458.0h1.3v1.3h-1.3zM94.6 459.2h1.3v1.3h-1.3zM297.8 459.5h1.3v1.3h-1.3zM473.3 456.3h1.3v1.3h-1.3zM111.7 460.0h1.3v1.3h-1.3zM176.8 456.9h1.3v1.3h-1.3zM157.6 458.6h1.3v1.3h-1.3zM541.2 458.0h1.3v1.3h-1.3zM512.6 458.4h1.3v1.3h-1.3zM235.5 458.5h1.3v1.3h-1.3zM389.9 459.8h1.3v1.3h-1.3zM179.5 456.9h1.3v1.3h-1.3zM357.2 459.2h1.3v1.3h-1.3zM551.9 458.1h1.3v1.3h-1.3zM290.8 457.1h1.3v1.3h-1.3zM215.5 460.6h1.3v1.3h-1.3zM192.9 457.2h1.3v1.3h-1.3zM582.9 459.5h1.3v1.3h-1.3zM426.7 459.8h1.3v1.3h-1.3zM208.5 457.6h1.3v1.3h-1.3zM456.2 459.8h1.3v1.3h-1.3zM58.9 459.2h1.3v1.3h-1.3zM185.4 456.8h1.3v1.3h-1.3zM63.6 459.2h1.3v1.3h-1.3zM462.2 458.2h1.3v1.3h-1.3zM92.9 458.4h1.3v1.3h-1.3zM83.2 459.6h1.3v1.3h-1.3zM501.6 458.0h1.3v1.3h-1.3zM295.3 458.0h1.3v1.3h-1.3zM396.4 455.4h1.3v1.3h-1.3zM539.1 455.4h1.3v1.3h-1.3zM154.2 459.8h1.3v1.3h-1.3zM53.1 459.6h1.3v1.3h-1.3zM144.7 457.6h1.3v1.3h-1.3zM215.0 459.1h1.3v1.3h-1.3zM91.0 455.4h1.3v1.3h-1.3zM293.1 460.6h1.3v1.3h-1.3zM347.8 459.7h1.3v1.3h-1.3zM403.9 459.9h1.3v1.3h-1.3zM176.6 458.2h1.3v1.3h-1.3zM486.8 458.9h1.3v1.3h-1.3zM464.4 458.7h1.3v1.3h-1.3zM491.1 458.1h1.3v1.3h-1.3zM391.0 458.4h1.3v1.3h-1.3zM540.3 457.3h1.3v1.3h-1.3zM434.7 459.7h1.3v1.3h-1.3zM77.0 457.0h1.3v1.3h-1.3zM249.2 460.0h1.3v1.3h-1.3zM205.3 458.8h1.3v1.3h-1.3zM150.4 459.9h1.3v1.3h-1.3zM520.3 458.6h1.3v1.3h-1.3zM224.1 459.0h1.3v1.3h-1.3zM308.5 459.7h1.3v1.3h-1.3zM44.0 459.6h1.3v1.3h-1.3zM534.7 458.8h1.3v1.3h-1.3zM157.8 458.7h1.3v1.3h-1.3zM306.6 457.3h1.3v1.3h-1.3zM611.7 458.5h1.3v1.3h-1.3zM270.3 459.5h1.3v1.3h-1.3zM196.4 456.0h1.3v1.3h-1.3zM160.8 460.6h1.3v1.3h-1.3zM197.7 459.8h1.3v1.3h-1.3zM148.3 457.1h1.3v1.3h-1.3zM175.2 458.3h1.3v1.3h-1.3zM487.3 459.7h1.3v1.3h-1.3zM156.9 459.6h1.3v1.3h-1.3zM190.1 458.7h1.3v1.3h-1.3zM505.9 456.7h1.3v1.3h-1.3zM447.8 459.7h1.3v1.3h-1.3zM373.2 458.0h1.3v1.3h-1.3zM336.4 457.7h1.3v1.3h-1.3zM156.3 458.9h1.3v1.3h-1.3zM340.3 457.8h1.3v1.3h-1.3zM134.1 457.4h1.3v1.3h-1.3zM44.0 459.6h1.3v1.3h-1.3zM110.4 460.5h1.3v1.3h-1.3zM180.5 458.5h1.3v1.3h-1.3zM291.1 458.0h1.3v1.3h-1.3zM315.1 460.6h1.3v1.3h-1.3zM453.8 458.7h1.3v1.3h-1.3zM229.0 459.7h1.3v1.3h-1.3zM227.7 460.2h1.3v1.3h-1.3zM61.7 459.7h1.3v1.3h-1.3zM264.3 459.8h1.3v1.3h-1.3zM448.9 459.8h1.3v1.3h-1.3zM262.1 459.6h1.3v1.3h-1.3zM320.0 459.7h1.3v1.3h-1.3zM400.2 457.3h1.3v1.3h-1.3zM423.3 458.3h1.3v1.3h-1.3zM120.6 459.9h1.3v1.3h-1.3zM558.2 460.4h1.3v1.3h-1.3zM369.4 460.4h1.3v1.3h-1.3zM293.8 460.3h1.3v1.3h-1.3zM104.7 457.9h1.3v1.3h-1.3zM302.9 459.6h1.3v1.3h-1.3zM199.4 459.4h1.3v1.3h-1.3zM206.8 460.3h1.3v1.3h-1.3zM59.9 457.8h1.3v1.3h-1.3zM234.2 456.8h1.3v1.3h-1.3zM293.0 459.7h1.3v1.3h-1.3zM117.3 459.1h1.3v1.3h-1.3zM335.6 458.6h1.3v1.3h-1.3zM49.4 457.0h1.3v1.3h-1.3zM215.5 455.4h1.3v1.3h-1.3zM189.1 456.5h1.3v1.3h-1.3zM48.0 460.5h1.3v1.3h-1.3zM275.0 458.6h1.3v1.3h-1.3zM515.0 458.1h1.3v1.3h-1.3zM258.7 459.3h1.3v1.3h-1.3zM132.1 459.6h1.3v1.3h-1.3zM215.3 459.9h1.3v1.3h-1.3zM278.3 457.9h1.3v1.3h-1.3zM360.6 460.1h1.3v1.3h-1.3zM107.0 459.2h1.3v1.3h-1.3zM384.8 459.3h1.3v1.3h-1.3zM143.0 456.9h1.3v1.3h-1.3zM257.7 458.3h1.3v1.3h-1.3zM61.9 458.7h1.3v1.3h-1.3zM226.1 456.1h1.3v1.3h-1.3zM546.6 458.9h1.3v1.3h-1.3zM172.6 460.1h1.3v1.3h-1.3zM137.5 458.9h1.3v1.3h-1.3zM315.1 458.2h1.3v1.3h-1.3zM570.9 457.5h1.3v1.3h-1.3zM353.8 459.6h1.3v1.3h-1.3zM406.6 458.2h1.3v1.3h-1.3zM83.6 460.6h1.3v1.3h-1.3zM153.7 457.0h1.3v1.3h-1.3zM298.6 458.1h1.3v1.3h-1.3zM565.7 457.6h1.3v1.3h-1.3zM476.3 456.6h1.3v1.3h-1.3zM392.8 459.5h1.3v1.3h-1.3zM448.5 458.0h1.3v1.3h-1.3zM404.4 460.4h1.3v1.3h-1.3zM609.8 459.4h1.3v1.3h-1.3zM68.9 460.2h1.3v1.3h-1.3zM377.7 459.8h1.3v1.3h-1.3zM107.5 459.1h1.3v1.3h-1.3zM79.6 456.8h1.3v1.3h-1.3zM260.8 460.5h1.3v1.3h-1.3zM372.6 458.7h1.3v1.3h-1.3zM74.3 458.6h1.3v1.3h-1.3zM280.9 459.3h1.3v1.3h-1.3zM454.8 457.4h1.3v1.3h-1.3zM185.3 460.5h1.3v1.3h-1.3zM122.1 460.1h1.3v1.3h-1.3zM205.4 459.3h1.3v1.3h-1.3zM306.2 456.1h1.3v1.3h-1.3zM66.7 460.4h1.3v1.3h-1.3zM253.7 459.6h1.3v1.3h-1.3zM453.5 459.8h1.3v1.3h-1.3zM365.3 459.4h1.3v1.3h-1.3zM338.8 458.9h1.3v1.3h-1.3zM445.6 458.8h1.3v1.3h-1.3zM309.9 460.1h1.3v1.3h-1.3zM75.6 458.7h1.3v1.3h-1.3zM471.6 460.6h1.3v1.3h-1.3zM208.0 457.4h1.3v1.3h-1.3zM99.9 459.2h1.3v1.3h-1.3zM382.8 460.3h1.3v1.3h-1.3zM604.2 459.7h1.3v1.3h-1.3zM59.7 460.5h1.3v1.3h-1.3zM151.8 457.5h1.3v1.3h-1.3zM257.3 457.4h1.3v1.3h-1.3zM429.1 457.4h1.3v1.3h-1.3zM63.7 457.2h1.3v1.3h-1.3zM389.9 460.2h1.3v1.3h-1.3zM255.1 458.0h1.3v1.3h-1.3zM86.4 459.5h1.3v1.3h-1.3zM294.8 459.8h1.3v1.3h-1.3zM512.4 459.9h1.3v1.3h-1.3zM470.1 460.6h1.3v1.3h-1.3zM403.9 457.5h1.3v1.3h-1.3zM572.0 459.8h1.3v1.3h-1.3zM180.4 455.7h1.3v1.3h-1.3zM149.9 459.8h1.3v1.3h-1.3zM61.5 460.4h1.3v1.3h-1.3zM492.1 457.6h1.3v1.3h-1.3zM419.7 459.2h1.3v1.3h-1.3zM224.8 459.3h1.3v1.3h-1.3zM92.5 458.3h1.3v1.3h-1.3zM113.6 457.9h1.3v1.3h-1.3zM607.1 457.9h1.3v1.3h-1.3zM161.4 459.2h1.3v1.3h-1.3zM278.0 458.9h1.3v1.3h-1.3zM486.3 460.6h1.3v1.3h-1.3zM316.5 458.6h1.3v1.3h-1.3zM282.5 460.2h1.3v1.3h-1.3zM210.4 459.9h1.3v1.3h-1.3zM322.8 459.0h1.3v1.3h-1.3zM246.5 460.3h1.3v1.3h-1.3zM176.3 458.8h1.3v1.3h-1.3zM401.8 458.4h1.3v1.3h-1.3zM159.2 457.3h1.3v1.3h-1.3zM515.6 455.9h1.3v1.3h-1.3zM343.7 460.3h1.3v1.3h-1.3zM458.4 460.1h1.3v1.3h-1.3zM335.6 460.1h1.3v1.3h-1.3zM443.7 458.2h1.3v1.3h-1.3zM336.7 458.4h1.3v1.3h-1.3zM224.2 459.1h1.3v1.3h-1.3zM399.6 459.6h1.3v1.3h-1.3zM125.8 458.8h1.3v1.3h-1.3zM216.8 455.4h1.3v1.3h-1.3zM331.7 457.1h1.3v1.3h-1.3zM444.2 457.0h1.3v1.3h-1.3zM69.8 457.6h1.3v1.3h-1.3zM297.3 459.0h1.3v1.3h-1.3zM546.1 458.9h1.3v1.3h-1.3zM521.4 460.4h1.3v1.3h-1.3zM52.4 456.2h1.3v1.3h-1.3zM303.2 460.2h1.3v1.3h-1.3zM45.9 457.3h1.3v1.3h-1.3zM301.2 458.0h1.3v1.3h-1.3zM157.2 459.3h1.3v1.3h-1.3zM400.1 459.6h1.3v1.3h-1.3zM350.2 459.9h1.3v1.3h-1.3zM299.4 459.3h1.3v1.3h-1.3zM116.8 459.3h1.3v1.3h-1.3zM412.4 460.2h1.3v1.3h-1.3zM206.3 457.7h1.3v1.3h-1.3zM320.9 458.2h1.3v1.3h-1.3zM492.6 459.3h1.3v1.3h-1.3zM408.8 455.9h1.3v1.3h-1.3zM405.6 459.1h1.3v1.3h-1.3zM46.3 457.3h1.3v1.3h-1.3zM418.4 460.6h1.3v1.3h-1.3zM580.0 459.0h1.3v1.3h-1.3zM583.3 459.3h1.3v1.3h-1.3zM271.9 460.4h1.3v1.3h-1.3zM182.6 456.5h1.3v1.3h-1.3zM196.0 458.3h1.3v1.3h-1.3zM533.2 456.7h1.3v1.3h-1.3zM448.4 458.7h1.3v1.3h-1.3zM114.2 459.7h1.3v1.3h-1.3zM208.0 460.6h1.3v1.3h-1.3zM538.2 458.7h1.3v1.3h-1.3zM200.5 459.2h1.3v1.3h-1.3zM275.1 458.6h1.3v1.3h-1.3zM557.2 460.5h1.3v1.3h-1.3zM282.1 460.6h1.3v1.3h-1.3zM555.5 458.4h1.3v1.3h-1.3zM442.6 459.0h1.3v1.3h-1.3zM184.3 459.0h1.3v1.3h-1.3zM375.2 458.4h1.3v1.3h-1.3zM200.2 459.8h1.3v1.3h-1.3zM91.3 458.0h1.3v1.3h-1.3zM385.4 457.4h1.3v1.3h-1.3zM565.1 460.1h1.3v1.3h-1.3zM509.2 459.7h1.3v1.3h-1.3zM85.8 459.5h1.3v1.3h-1.3zM200.2 460.3h1.3v1.3h-1.3zM317.0 460.3h1.3v1.3h-1.3zM43.6 457.7h1.3v1.3h-1.3zM137.9 459.1h1.3v1.3h-1.3zM472.2 460.2h1.3v1.3h-1.3zM62.4 457.5h1.3v1.3h-1.3zM593.6 458.8h1.3v1.3h-1.3zM516.4 458.2h1.3v1.3h-1.3zM121.3 457.7h1.3v1.3h-1.3zM81.0 460.2h1.3v1.3h-1.3zM303.1 458.7h1.3v1.3h-1.3zM435.3 458.5h1.3v1.3h-1.3zM223.3 460.4h1.3v1.3h-1.3z"/>
  <rect x="42" y="111" width="2.2" height="351" fill="#050505"/>
  <rect x="42" y="460.6" width="623" height="1.4" fill="#5a2a24"/>
  <g fill="#666"><rect x="44" y="462" width="1" height="2.5"/><rect x="105" y="462" width="1" height="2.5"/><rect x="167" y="462" width="1" height="2.5"/><rect x="229" y="462" width="1" height="2.5"/><rect x="291" y="462" width="1" height="2.5"/><rect x="353" y="462" width="1" height="2.5"/><rect x="415" y="462" width="1" height="2.5"/><rect x="477" y="462" width="1" height="2.5"/><rect x="539" y="462" width="1" height="2.5"/><rect x="601" y="462" width="1" height="2.5"/><rect x="663" y="462" width="1" height="2.5"/></g>
  <rect x="663.5" y="111" width="1" height="351" fill="#555"/>
</svg>
<div class="xl" style="left:14.0px">0</div>
<div class="xl" style="left:75.9px">3000</div>
<div class="xl" style="left:137.8px">6000</div>
<div class="xl" style="left:199.8px">9000</div>
<div class="xl" style="left:261.7px">12000</div>
<div class="xl" style="left:323.6px">15000</div>
<div class="xl" style="left:385.5px">18000</div>
<div class="xl" style="left:447.4px">21000</div>
<div class="xl" style="left:509.4px">24000</div>
<div class="xl" style="left:571.3px">27000</div>
<div class="xl" style="left:633.2px">30000gB</div>

<!-- table -->
<div class="hdr" style="left:31px;width:91px">传输大小</div>
<div class="hdr" style="left:127px;width:108px">操作/秒</div>
<div class="hdr" style="left:235px;width:114px">平均访问时间</div>
<div class="hdr" style="left:353px;width:108px">最大访问时间</div>
<div class="hdr" style="left:467px;width:93px">平均速度</div>
<div class="a" style="left:34px;top:502px;width:522px;height:2px;background:#777"></div>
<div class="vsep" style="left:124px"></div>
<div class="vsep" style="left:234px"></div>
<div class="vsep" style="left:350px"></div>
<div class="vsep" style="left:460px"></div>

<div class="lsq" style="top:512px;background:#f0f000"></div>
<div class="lsq" style="top:530px;background:#e01010"></div>
<div class="lsq" style="top:549px;background:#20d020"></div>
<div class="lsq" style="top:568px;background:#2070e0"></div>
<div class="lsq" style="top:588px;background:#30e0f0"></div>
<div class="cb" style="top:511px"></div>
<div class="cb" style="top:529px"></div>
<div class="cb" style="top:548px"></div>
<div class="cb" style="top:567px"></div>
<div class="cb" style="top:587px"></div>
<div class="lbl" style="top:509px">512 字节</div>
<div class="lbl" style="top:527px">4 KB</div>
<div class="lbl" style="top:546px">64 KB</div>
<div class="lbl" style="top:565px">1 MB</div>
<div class="lbl" style="top:585px">随机</div>

<div class="val" style="right:583px;top:507.5px">195 IOPS</div>
<div class="val" style="right:472px;top:507.5px">5.118 ms</div>
<div class="val" style="right:362px;top:507.5px">44.334 ms</div>
<div class="val" style="right:252px;top:507.5px">0.095 MB/s</div>
<div class="val" style="right:583px;top:526.0px">913 IOPS</div>
<div class="val" style="right:472px;top:526.0px">1.094 ms</div>
<div class="val" style="right:362px;top:526.0px">30.457 ms</div>
<div class="val" style="right:252px;top:526.0px">3.569 MB/s</div>
<div class="val" style="right:583px;top:545.0px">415 IOPS</div>
<div class="val" style="right:472px;top:545.0px">2.405 ms</div>
<div class="val" style="right:362px;top:545.0px">11.902 ms</div>
<div class="val" style="right:252px;top:545.0px">25.987 MB/s</div>
<div class="val" style="right:583px;top:564.5px">103 IOPS</div>
<div class="val" style="right:472px;top:564.5px">9.662 ms</div>
<div class="val" style="right:362px;top:564.5px">70.537 ms</div>
<div class="val" style="right:252px;top:564.5px">103.493 MB/s</div>
<div class="val" style="right:583px;top:584.0px">94 IOPS</div>
<div class="val" style="right:472px;top:584.0px">10.608 ms</div>
<div class="val" style="right:362px;top:584.0px">61.850 ms</div>
<div class="val" style="right:252px;top:584.0px">47.827 MB/s</div>
<!-- right panel -->
<div class="a" style="left:696px;top:112px;width:74px;height:25px;background:#fdfdfd;border:1px solid #4f8fbf;border-radius:3px"></div>
<div class="rp" style="left:696px;top:118px;width:74px;text-align:center">开始</div>
<div class="hsep" style="top:147px"></div>
<div class="a" style="left:692px;top:158px;width:11px;height:11px;border:1px solid #777;border-radius:50%;background:#f4f4f4"></div>
<div class="rp" style="left:706px;top:156px">读取</div>
<div class="a" style="left:692px;top:176px;width:11px;height:11px;border-radius:50%;background:#1a5fb4"></div>
<div class="a" style="left:695px;top:179px;width:5px;height:5px;border-radius:50%;background:#fff"></div>
<div class="rp" style="left:706px;top:174px">写入</div>
<div class="hsep" style="top:192px"></div>
<div class="a" style="left:692px;top:204px;width:11px;height:11px;border:1px solid #777;border-radius:2px;background:#f4f4f4"></div>
<div class="rp" style="left:706px;top:202px">短行程</div>
<div class="a" style="left:692px;top:223px;width:62px;height:22px;border:1px solid #e0e0e0;background:#f6f6f6"></div>
<div class="a" style="left:739px;top:223px;width:15px;height:22px;border:1px solid #cfcfcf;background:#efefef"></div>
<div class="a" style="left:740px;top:233px;width:13px;height:1px;background:#ddd"></div>
<svg class="a" style="left:743px;top:227px" width="8" height="15" viewBox="0 0 8 15"><path d="M1 4.5L4 1.5L7 4.5z" fill="#999"/><path d="M1 10.5L4 13.5L7 10.5z" fill="#999"/></svg>
<div class="rp" style="left:697px;top:226px;color:#999">40</div>
<div class="rp" style="left:767px;top:228px">GB</div>
<div class="hsep" style="top:257px"></div>
<div class="a" style="left:692px;top:271px;width:11px;height:11px;background:#1a5fb4;border-radius:2px"></div>
<svg class="a" style="left:692px;top:271px" width="11" height="11" viewBox="0 0 11 11"><path d="M2.5 5.5L4.5 7.5L8.5 3.5" stroke="#fff" stroke-width="1.2" fill="none"/></svg>
<div class="rp" style="left:706px;top:269px">4KB 对齐</div>
</body></html>
